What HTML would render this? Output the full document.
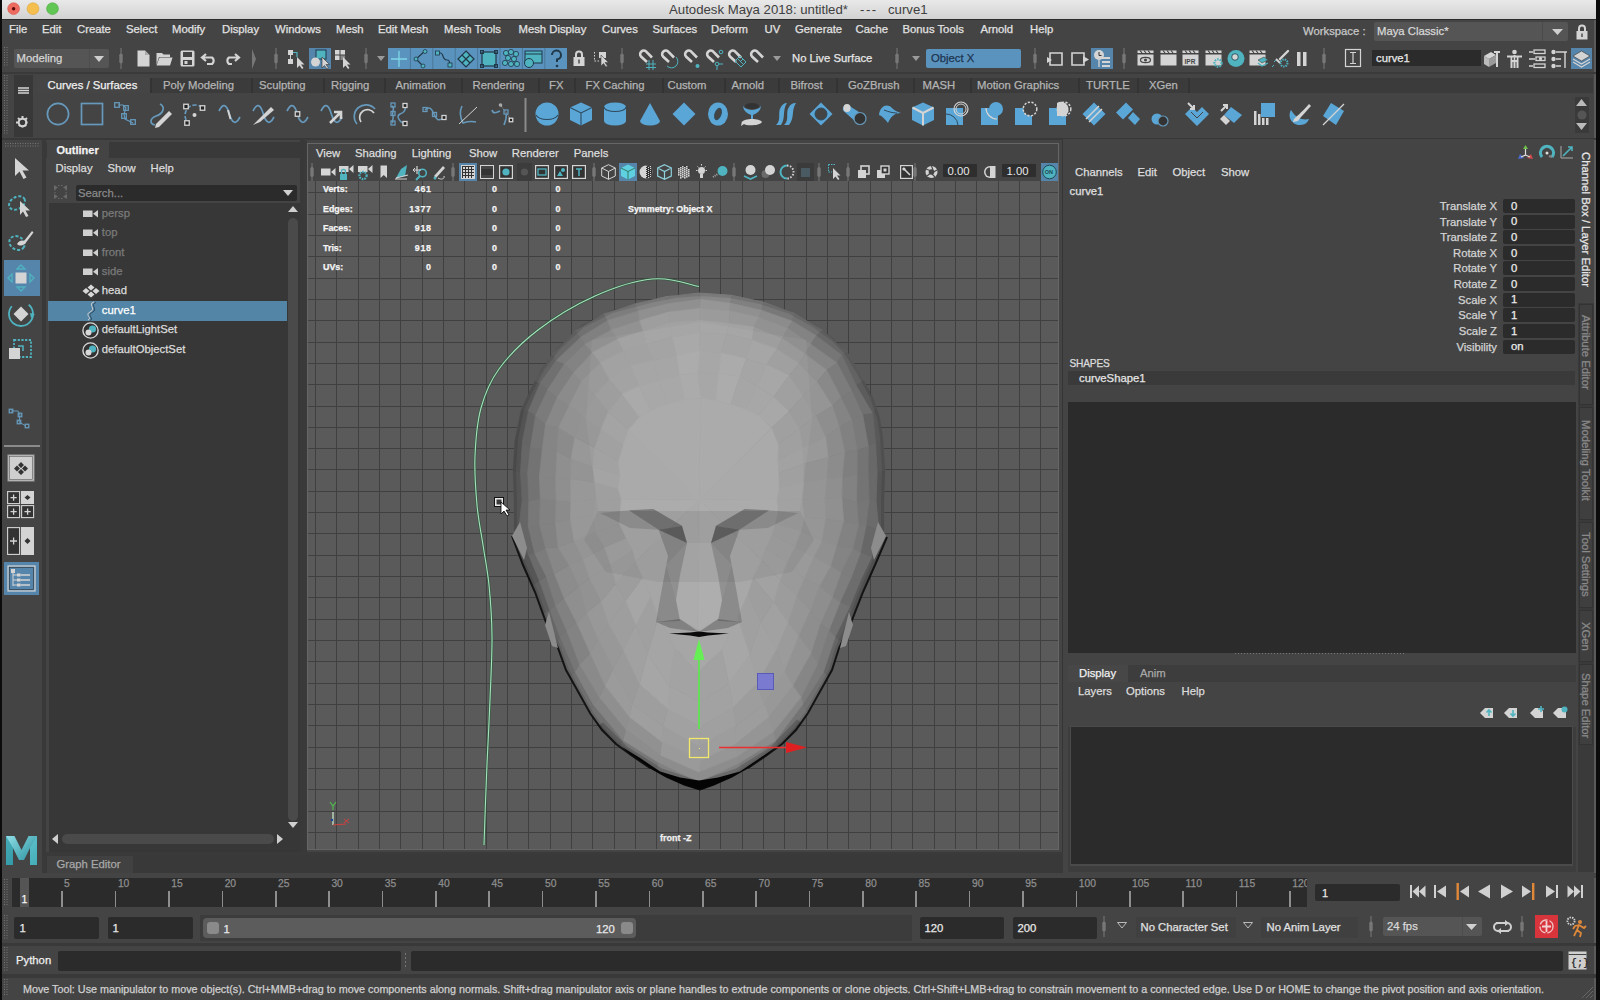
<!DOCTYPE html>
<html><head><meta charset="utf-8"><title>Maya</title>
<style>
html,body{margin:0;padding:0;background:#444;}
#r{position:relative;width:1600px;height:1000px;overflow:hidden;font-family:"Liberation Sans",sans-serif;}
#r>div,#r>svg{position:absolute;}
.t{white-space:pre;-webkit-text-stroke:0.25px currentColor;}
</style></head><body><div id="r">
<div style="left:0px;top:0px;width:1600px;height:1000px;background:#444444;"></div>
<div style="left:0px;top:0px;width:1596px;height:19px;background:linear-gradient(#e9e9e9,#d2d2d2);"></div>
<div style="left:0px;top:19px;width:1596px;height:1px;background:#2c2c2c;"></div>
<svg style="left:0px;top:0px;" width="64" height="19" viewBox="0 0 64 19"><circle cx="13.6" cy="8.7" r="5.9" fill="#ed6b5f" stroke="#d9564b" stroke-width=".6"/><circle cx="13.6" cy="8.7" r="1.7" fill="#5a0d08"/><circle cx="33" cy="8.7" r="5.9" fill="#f5bf4f" stroke="#dea23a" stroke-width=".6"/><circle cx="52.5" cy="8.7" r="5.9" fill="#62c654" stroke="#4ea840" stroke-width=".6"/></svg>
<div class="t" style="left:669px;top:2.63px;font-size:13.2px;line-height:13.2px;color:#404040;font-weight:400;-webkit-text-stroke:0">Autodesk Maya 2018: untitled*</div>
<div class="t" style="left:860px;top:2.63px;font-size:13.2px;line-height:13.2px;color:#404040;font-weight:400;-webkit-text-stroke:0;letter-spacing:1.5px">---</div>
<div class="t" style="left:888px;top:2.63px;font-size:13.2px;line-height:13.2px;color:#404040;font-weight:400;-webkit-text-stroke:0">curve1</div>
<div style="left:0px;top:0px;width:2px;height:1000px;background:#0c0c0c;"></div>
<div style="left:1596px;top:0px;width:4px;height:1000px;background:#0c0c0c;"></div>
<div style="left:1594px;top:20px;width:2px;height:980px;background:#5a5a5a;"></div>
<div class="t" style="left:9px;top:24.03px;font-size:11.3px;line-height:11.3px;color:#e2e2e2;font-weight:400;">File</div>
<div class="t" style="left:42px;top:24.03px;font-size:11.3px;line-height:11.3px;color:#e2e2e2;font-weight:400;">Edit</div>
<div class="t" style="left:77px;top:24.03px;font-size:11.3px;line-height:11.3px;color:#e2e2e2;font-weight:400;">Create</div>
<div class="t" style="left:126px;top:24.03px;font-size:11.3px;line-height:11.3px;color:#e2e2e2;font-weight:400;">Select</div>
<div class="t" style="left:172px;top:24.03px;font-size:11.3px;line-height:11.3px;color:#e2e2e2;font-weight:400;">Modify</div>
<div class="t" style="left:222px;top:24.03px;font-size:11.3px;line-height:11.3px;color:#e2e2e2;font-weight:400;">Display</div>
<div class="t" style="left:275px;top:24.03px;font-size:11.3px;line-height:11.3px;color:#e2e2e2;font-weight:400;">Windows</div>
<div class="t" style="left:336px;top:24.03px;font-size:11.3px;line-height:11.3px;color:#e2e2e2;font-weight:400;">Mesh</div>
<div class="t" style="left:378px;top:24.03px;font-size:11.3px;line-height:11.3px;color:#e2e2e2;font-weight:400;">Edit Mesh</div>
<div class="t" style="left:444px;top:24.03px;font-size:11.3px;line-height:11.3px;color:#e2e2e2;font-weight:400;">Mesh Tools</div>
<div class="t" style="left:518.5px;top:24.03px;font-size:11.3px;line-height:11.3px;color:#e2e2e2;font-weight:400;">Mesh Display</div>
<div class="t" style="left:602px;top:24.03px;font-size:11.3px;line-height:11.3px;color:#e2e2e2;font-weight:400;">Curves</div>
<div class="t" style="left:652.5px;top:24.03px;font-size:11.3px;line-height:11.3px;color:#e2e2e2;font-weight:400;">Surfaces</div>
<div class="t" style="left:711px;top:24.03px;font-size:11.3px;line-height:11.3px;color:#e2e2e2;font-weight:400;">Deform</div>
<div class="t" style="left:764.5px;top:24.03px;font-size:11.3px;line-height:11.3px;color:#e2e2e2;font-weight:400;">UV</div>
<div class="t" style="left:795px;top:24.03px;font-size:11.3px;line-height:11.3px;color:#e2e2e2;font-weight:400;">Generate</div>
<div class="t" style="left:855.5px;top:24.03px;font-size:11.3px;line-height:11.3px;color:#e2e2e2;font-weight:400;">Cache</div>
<div class="t" style="left:902.5px;top:24.03px;font-size:11.3px;line-height:11.3px;color:#e2e2e2;font-weight:400;">Bonus Tools</div>
<div class="t" style="left:980.5px;top:24.03px;font-size:11.3px;line-height:11.3px;color:#e2e2e2;font-weight:400;">Arnold</div>
<div class="t" style="left:1030px;top:24.03px;font-size:11.3px;line-height:11.3px;color:#e2e2e2;font-weight:400;">Help</div>
<div class="t" style="left:1303px;top:26.43px;font-size:11.3px;line-height:11.3px;color:#c8c8c8;font-weight:400;">Workspace :</div>
<div style="left:1374px;top:22px;width:194px;height:19px;background:#555555;border-radius:2px"></div>
<div style="left:1542px;top:22px;width:1px;height:19px;background:#4a4a4a;"></div>
<div class="t" style="left:1377px;top:26.43px;font-size:11.3px;line-height:11.3px;color:#d8d8d8;font-weight:400;">Maya Classic*</div>
<div style="left:14px;top:49px;width:95px;height:19px;background:#555555;border-radius:2px"></div>
<div style="left:89px;top:49px;width:1px;height:19px;background:#4d4d4d;"></div>
<div class="t" style="left:16.5px;top:53.43px;font-size:11.3px;line-height:11.3px;color:#d6d6d6;font-weight:400;">Modeling</div>
<div class="t" style="left:792px;top:53.43px;font-size:11.3px;line-height:11.3px;color:#e6e6e6;font-weight:400;">No Live Surface</div>
<div style="left:789px;top:49px;width:92px;height:19px;background:#3f3f3f;z-index:-1"></div>
<div style="left:926px;top:49px;width:95px;height:19px;background:#5b93bf;border-radius:2px"></div>
<div class="t" style="left:931px;top:53.43px;font-size:11.3px;line-height:11.3px;color:#1d3550;font-weight:400;">Object X</div>
<div style="left:1372px;top:50px;width:109px;height:16px;background:#2b2b2b;"></div>
<div class="t" style="left:1376px;top:52.93px;font-size:11.3px;line-height:11.3px;color:#e8e8e8;font-weight:400;">curve1</div>
<div style="left:2px;top:72px;width:1594px;height:2px;background:#3a3a3a;"></div>
<div style="left:37px;top:78px;width:1556px;height:15px;background:#3b3b3b;"></div>
<div style="left:37px;top:78px;width:113px;height:15px;background:#454545;"></div>
<div class="t" style="left:47.5px;top:80.43px;font-size:11.3px;line-height:11.3px;color:#f0f0f0;font-weight:400;">Curves / Surfaces</div>
<div class="t" style="left:163px;top:80.43px;font-size:11.3px;line-height:11.3px;color:#b4b4b4;font-weight:400;">Poly Modeling</div>
<div class="t" style="left:259px;top:80.43px;font-size:11.3px;line-height:11.3px;color:#b4b4b4;font-weight:400;">Sculpting</div>
<div class="t" style="left:331px;top:80.43px;font-size:11.3px;line-height:11.3px;color:#b4b4b4;font-weight:400;">Rigging</div>
<div class="t" style="left:395.5px;top:80.43px;font-size:11.3px;line-height:11.3px;color:#b4b4b4;font-weight:400;">Animation</div>
<div class="t" style="left:472.5px;top:80.43px;font-size:11.3px;line-height:11.3px;color:#b4b4b4;font-weight:400;">Rendering</div>
<div class="t" style="left:549px;top:80.43px;font-size:11.3px;line-height:11.3px;color:#b4b4b4;font-weight:400;">FX</div>
<div class="t" style="left:585.5px;top:80.43px;font-size:11.3px;line-height:11.3px;color:#b4b4b4;font-weight:400;">FX Caching</div>
<div class="t" style="left:667.5px;top:80.43px;font-size:11.3px;line-height:11.3px;color:#b4b4b4;font-weight:400;">Custom</div>
<div class="t" style="left:731.5px;top:80.43px;font-size:11.3px;line-height:11.3px;color:#b4b4b4;font-weight:400;">Arnold</div>
<div class="t" style="left:790.5px;top:80.43px;font-size:11.3px;line-height:11.3px;color:#b4b4b4;font-weight:400;">Bifrost</div>
<div class="t" style="left:848px;top:80.43px;font-size:11.3px;line-height:11.3px;color:#b4b4b4;font-weight:400;">GoZBrush</div>
<div class="t" style="left:922.5px;top:80.43px;font-size:11.3px;line-height:11.3px;color:#b4b4b4;font-weight:400;">MASH</div>
<div class="t" style="left:977px;top:80.43px;font-size:11.3px;line-height:11.3px;color:#b4b4b4;font-weight:400;">Motion Graphics</div>
<div class="t" style="left:1086px;top:80.43px;font-size:11.3px;line-height:11.3px;color:#b4b4b4;font-weight:400;">TURTLE</div>
<div class="t" style="left:1149px;top:80.43px;font-size:11.3px;line-height:11.3px;color:#b4b4b4;font-weight:400;">XGen</div>
<div style="left:150px;top:78px;width:2px;height:15px;background:#333333;"></div>
<div style="left:251px;top:78px;width:2px;height:15px;background:#333333;"></div>
<div style="left:323px;top:78px;width:2px;height:15px;background:#333333;"></div>
<div style="left:384px;top:78px;width:2px;height:15px;background:#333333;"></div>
<div style="left:461px;top:78px;width:2px;height:15px;background:#333333;"></div>
<div style="left:538px;top:78px;width:2px;height:15px;background:#333333;"></div>
<div style="left:574px;top:78px;width:2px;height:15px;background:#333333;"></div>
<div style="left:662px;top:78px;width:2px;height:15px;background:#333333;"></div>
<div style="left:724px;top:78px;width:2px;height:15px;background:#333333;"></div>
<div style="left:778px;top:78px;width:2px;height:15px;background:#333333;"></div>
<div style="left:836px;top:78px;width:2px;height:15px;background:#333333;"></div>
<div style="left:913px;top:78px;width:2px;height:15px;background:#333333;"></div>
<div style="left:970px;top:78px;width:2px;height:15px;background:#333333;"></div>
<div style="left:1078px;top:78px;width:2px;height:15px;background:#333333;"></div>
<div style="left:1137px;top:78px;width:2px;height:15px;background:#333333;"></div>
<div style="left:1188px;top:78px;width:2px;height:15px;background:#333333;"></div>
<div style="left:14px;top:75px;width:19px;height:62px;background:#383838;"></div>
<div style="left:1575px;top:97px;width:14px;height:36px;background:#3a3a3a;"></div>
<div style="left:2px;top:138px;width:1594px;height:2px;background:#383838;"></div>
<div style="left:42px;top:140px;width:4px;height:733px;background:#393939;"></div>
<div style="left:4px;top:260px;width:36px;height:36px;background:#5585ab;"></div>
<div style="left:4px;top:562px;width:35px;height:33px;background:#5585ab;"></div>
<div style="left:46px;top:142px;width:257px;height:16px;background:#393939;"></div>
<div style="left:47px;top:142px;width:62px;height:16px;background:#444444;"></div>
<div class="t" style="left:56.5px;top:145.19px;font-size:11px;line-height:11px;color:#f2f2f2;font-weight:700;">Outliner</div>
<div class="t" style="left:55.5px;top:162.93px;font-size:11.3px;line-height:11.3px;color:#dcdcdc;font-weight:400;">Display</div>
<div class="t" style="left:107.5px;top:162.93px;font-size:11.3px;line-height:11.3px;color:#dcdcdc;font-weight:400;">Show</div>
<div class="t" style="left:150.5px;top:162.93px;font-size:11.3px;line-height:11.3px;color:#dcdcdc;font-weight:400;">Help</div>
<div style="left:75.5px;top:185px;width:221px;height:16px;background:#2b2b2b;border-radius:2px"></div>
<div class="t" style="left:78px;top:187.93px;font-size:11.3px;line-height:11.3px;color:#8a8a8a;font-weight:400;">Search...</div>
<div style="left:49px;top:203px;width:251px;height:650px;background:#373737;"></div>
<div style="left:48px;top:301px;width:239px;height:20px;background:#5285a6;"></div>
<div class="t" style="left:101.8px;top:207.83px;font-size:11.3px;line-height:11.3px;color:#7a7a7a;font-weight:400;">persp</div>
<div class="t" style="left:101.8px;top:227.33px;font-size:11.3px;line-height:11.3px;color:#7a7a7a;font-weight:400;">top</div>
<div class="t" style="left:101.8px;top:246.73px;font-size:11.3px;line-height:11.3px;color:#7a7a7a;font-weight:400;">front</div>
<div class="t" style="left:101.8px;top:266.13px;font-size:11.3px;line-height:11.3px;color:#7a7a7a;font-weight:400;">side</div>
<div class="t" style="left:101.8px;top:285.43px;font-size:11.3px;line-height:11.3px;color:#dcdcdc;font-weight:400;">head</div>
<div class="t" style="left:101.8px;top:304.93px;font-size:11.3px;line-height:11.3px;color:#ffffff;font-weight:400;">curve1</div>
<div class="t" style="left:101.8px;top:324.43px;font-size:11.3px;line-height:11.3px;color:#dcdcdc;font-weight:400;">defaultLightSet</div>
<div class="t" style="left:101.8px;top:343.93px;font-size:11.3px;line-height:11.3px;color:#dcdcdc;font-weight:400;">defaultObjectSet</div>
<div style="left:288px;top:218px;width:10px;height:603px;background:#4a4a4a;border-radius:5px"></div>
<div style="left:62px;top:834px;width:212px;height:10px;background:#4a4a4a;border-radius:5px"></div>
<div style="left:300px;top:140px;width:4px;height:715px;background:#393939;"></div>
<div style="left:304px;top:139px;width:3px;height:716px;background:#3a3a3a;"></div>
<div style="left:307px;top:143px;width:752px;height:707px;background:#444444;box-shadow:0 0 0 1px #666 inset"></div>
<div class="t" style="left:316px;top:147.93px;font-size:11.3px;line-height:11.3px;color:#dedede;font-weight:400;">View</div>
<div class="t" style="left:355px;top:147.93px;font-size:11.3px;line-height:11.3px;color:#dedede;font-weight:400;">Shading</div>
<div class="t" style="left:411.75px;top:147.93px;font-size:11.3px;line-height:11.3px;color:#dedede;font-weight:400;">Lighting</div>
<div class="t" style="left:469px;top:147.93px;font-size:11.3px;line-height:11.3px;color:#dedede;font-weight:400;">Show</div>
<div class="t" style="left:511.75px;top:147.93px;font-size:11.3px;line-height:11.3px;color:#dedede;font-weight:400;">Renderer</div>
<div class="t" style="left:573.75px;top:147.93px;font-size:11.3px;line-height:11.3px;color:#dedede;font-weight:400;">Panels</div>
<svg style="left:308px;top:181px;" width="750" height="668" viewBox="0 0 750 668"><rect width="100%" height="100%" fill="#5a5a5a"/><rect x="7" y="0" width="1" height="668" fill="#404040"/><rect x="28" y="0" width="1" height="668" fill="#404040"/><rect x="50" y="0" width="1" height="668" fill="#404040"/><rect x="71" y="0" width="1" height="668" fill="#404040"/><rect x="92" y="0" width="1" height="668" fill="#404040"/><rect x="114" y="0" width="1" height="668" fill="#404040"/><rect x="135" y="0" width="1" height="668" fill="#404040"/><rect x="156" y="0" width="1" height="668" fill="#404040"/><rect x="178" y="0" width="1" height="668" fill="#404040"/><rect x="199" y="0" width="1" height="668" fill="#404040"/><rect x="220" y="0" width="1" height="668" fill="#404040"/><rect x="242" y="0" width="1" height="668" fill="#404040"/><rect x="263" y="0" width="1" height="668" fill="#404040"/><rect x="284" y="0" width="1" height="668" fill="#404040"/><rect x="306" y="0" width="1" height="668" fill="#404040"/><rect x="327" y="0" width="1" height="668" fill="#404040"/><rect x="348" y="0" width="1" height="668" fill="#404040"/><rect x="370" y="0" width="1" height="668" fill="#404040"/><rect x="391" y="0" width="1" height="668" fill="#404040"/><rect x="412" y="0" width="1" height="668" fill="#404040"/><rect x="434" y="0" width="1" height="668" fill="#404040"/><rect x="455" y="0" width="1" height="668" fill="#404040"/><rect x="476" y="0" width="1" height="668" fill="#404040"/><rect x="498" y="0" width="1" height="668" fill="#404040"/><rect x="519" y="0" width="1" height="668" fill="#404040"/><rect x="540" y="0" width="1" height="668" fill="#404040"/><rect x="562" y="0" width="1" height="668" fill="#404040"/><rect x="583" y="0" width="1" height="668" fill="#404040"/><rect x="604" y="0" width="1" height="668" fill="#404040"/><rect x="626" y="0" width="1" height="668" fill="#404040"/><rect x="647" y="0" width="1" height="668" fill="#404040"/><rect x="668" y="0" width="1" height="668" fill="#404040"/><rect x="690" y="0" width="1" height="668" fill="#404040"/><rect x="711" y="0" width="1" height="668" fill="#404040"/><rect x="732" y="0" width="1" height="668" fill="#404040"/><rect x="0" y="11" width="750" height="1" fill="#404040"/><rect x="0" y="33" width="750" height="1" fill="#404040"/><rect x="0" y="54" width="750" height="1" fill="#404040"/><rect x="0" y="75" width="750" height="1" fill="#404040"/><rect x="0" y="97" width="750" height="1" fill="#404040"/><rect x="0" y="118" width="750" height="1" fill="#404040"/><rect x="0" y="139" width="750" height="1" fill="#404040"/><rect x="0" y="161" width="750" height="1" fill="#404040"/><rect x="0" y="182" width="750" height="1" fill="#404040"/><rect x="0" y="203" width="750" height="1" fill="#404040"/><rect x="0" y="225" width="750" height="1" fill="#404040"/><rect x="0" y="246" width="750" height="1" fill="#404040"/><rect x="0" y="267" width="750" height="1" fill="#404040"/><rect x="0" y="288" width="750" height="1" fill="#404040"/><rect x="0" y="310" width="750" height="1" fill="#404040"/><rect x="0" y="331" width="750" height="1" fill="#404040"/><rect x="0" y="352" width="750" height="1" fill="#404040"/><rect x="0" y="374" width="750" height="1" fill="#404040"/><rect x="0" y="395" width="750" height="1" fill="#404040"/><rect x="0" y="416" width="750" height="1" fill="#404040"/><rect x="0" y="438" width="750" height="1" fill="#404040"/><rect x="0" y="459" width="750" height="1" fill="#404040"/><rect x="0" y="480" width="750" height="1" fill="#404040"/><rect x="0" y="502" width="750" height="1" fill="#404040"/><rect x="0" y="523" width="750" height="1" fill="#404040"/><rect x="0" y="544" width="750" height="1" fill="#404040"/><rect x="0" y="566" width="750" height="1" fill="#404040"/><rect x="0" y="587" width="750" height="1" fill="#404040"/><rect x="0" y="608" width="750" height="1" fill="#404040"/><rect x="0" y="630" width="750" height="1" fill="#404040"/><rect x="0" y="651" width="750" height="1" fill="#404040"/><rect x="391" y="0" width="1" height="668" fill="#383838"/></svg>
<svg style="left:308px;top:181px;" width="750" height="668" viewBox="308 181 750 668"><polygon points="699.0,293.1 731.4,295.3 730.7,303.3 700.5,299.2" fill="#888888" stroke="#888888" stroke-width="0.8" stroke-linejoin="round"/><polygon points="731.4,295.3 763.3,302.1 762.0,310.4 730.7,303.3" fill="#808080" stroke="#808080" stroke-width="0.8" stroke-linejoin="round"/><polygon points="763.3,302.1 794.1,313.3 792.4,321.2 762.0,310.4" fill="#787878" stroke="#787878" stroke-width="0.8" stroke-linejoin="round"/><polygon points="794.1,313.3 822.3,330.3 816.3,335.7 792.4,321.2" fill="#737373" stroke="#737373" stroke-width="0.8" stroke-linejoin="round"/><polygon points="822.3,330.3 847.0,352.0 841.9,355.3 816.3,335.7" fill="#686868" stroke="#686868" stroke-width="0.8" stroke-linejoin="round"/><polygon points="847.0,352.0 863.9,380.2 856.2,385.7 841.9,355.3" fill="#636363" stroke="#636363" stroke-width="0.8" stroke-linejoin="round"/><polygon points="863.9,380.2 877.1,409.3 872.7,413.6 856.2,385.7" fill="#5c5c5c" stroke="#5c5c5c" stroke-width="0.8" stroke-linejoin="round"/><polygon points="877.1,409.3 883.2,440.2 875.6,443.2 872.7,413.6" fill="#595959" stroke="#595959" stroke-width="0.8" stroke-linejoin="round"/><polygon points="883.2,440.2 885.0,470.5 877.1,472.6 875.6,443.2" fill="#585858" stroke="#585858" stroke-width="0.8" stroke-linejoin="round"/><polygon points="885.0,470.5 884.0,500.0 876.1,501.1 877.1,472.6" fill="#555555" stroke="#555555" stroke-width="0.8" stroke-linejoin="round"/><polygon points="884.0,500.0 884.0,529.3 879.0,530.1 876.1,501.1" fill="#565656" stroke="#565656" stroke-width="0.8" stroke-linejoin="round"/><polygon points="884.0,529.3 876.6,557.7 871.5,557.2 879.0,530.1" fill="#555555" stroke="#555555" stroke-width="0.8" stroke-linejoin="round"/><polygon points="876.6,557.7 865.2,584.7 859.8,581.7 871.5,557.2" fill="#595959" stroke="#595959" stroke-width="0.8" stroke-linejoin="round"/><polygon points="865.2,584.7 853.9,612.5 849.7,606.7 859.8,581.7" fill="#5b5b5b" stroke="#5b5b5b" stroke-width="0.8" stroke-linejoin="round"/><polygon points="853.9,612.5 840.9,641.9 835.1,637.1 849.7,606.7" fill="#5e5e5e" stroke="#5e5e5e" stroke-width="0.8" stroke-linejoin="round"/><polygon points="840.9,641.9 827.9,677.4 823.3,672.3 835.1,637.1" fill="#666666" stroke="#666666" stroke-width="0.8" stroke-linejoin="round"/><polygon points="827.9,677.4 807.7,713.4 802.7,704.2 823.3,672.3" fill="#717171" stroke="#717171" stroke-width="0.8" stroke-linejoin="round"/><polygon points="807.7,713.4 779.0,746.2 775.2,741.0 802.7,704.2" fill="#747474" stroke="#747474" stroke-width="0.8" stroke-linejoin="round"/><polygon points="779.0,746.2 742.0,771.4 739.3,762.9 775.2,741.0" fill="#7c7c7c" stroke="#7c7c7c" stroke-width="0.8" stroke-linejoin="round"/><polygon points="742.0,771.4 699.0,788.8 698.5,782.0 739.3,762.9" fill="#828282" stroke="#828282" stroke-width="0.8" stroke-linejoin="round"/><polygon points="699.0,788.8 656.0,771.4 658.3,762.3 698.5,782.0" fill="#818181" stroke="#818181" stroke-width="0.8" stroke-linejoin="round"/><polygon points="656.0,771.4 619.0,746.2 623.0,740.2 658.3,762.3" fill="#777777" stroke="#777777" stroke-width="0.8" stroke-linejoin="round"/><polygon points="619.0,746.2 590.3,713.4 593.4,704.7 623.0,740.2" fill="#717171" stroke="#717171" stroke-width="0.8" stroke-linejoin="round"/><polygon points="590.3,713.4 570.1,677.4 575.0,671.5 593.4,704.7" fill="#6f6f6f" stroke="#6f6f6f" stroke-width="0.8" stroke-linejoin="round"/><polygon points="570.1,677.4 555.7,643.3 560.1,636.7 575.0,671.5" fill="#6a6a6a" stroke="#6a6a6a" stroke-width="0.8" stroke-linejoin="round"/><polygon points="555.7,643.3 542.8,613.5 549.8,609.9 560.1,636.7" fill="#666666" stroke="#666666" stroke-width="0.8" stroke-linejoin="round"/><polygon points="542.8,613.5 531.9,585.1 539.4,580.8 549.8,609.9" fill="#5d5d5d" stroke="#5d5d5d" stroke-width="0.8" stroke-linejoin="round"/><polygon points="531.9,585.1 520.7,557.9 528.3,554.1 539.4,580.8" fill="#565656" stroke="#565656" stroke-width="0.8" stroke-linejoin="round"/><polygon points="520.7,557.9 514.0,529.3 519.0,526.9 528.3,554.1" fill="#595959" stroke="#595959" stroke-width="0.8" stroke-linejoin="round"/><polygon points="514.0,529.3 514.0,500.0 522.1,500.2 519.0,526.9" fill="#555555" stroke="#555555" stroke-width="0.8" stroke-linejoin="round"/><polygon points="514.0,500.0 513.0,470.5 520.5,472.0 522.1,500.2" fill="#555555" stroke="#555555" stroke-width="0.8" stroke-linejoin="round"/><polygon points="513.0,470.5 515.0,440.2 522.4,441.7 520.5,472.0" fill="#525252" stroke="#525252" stroke-width="0.8" stroke-linejoin="round"/><polygon points="515.0,440.2 521.3,409.4 528.5,410.7 522.4,441.7" fill="#535353" stroke="#535353" stroke-width="0.8" stroke-linejoin="round"/><polygon points="521.3,409.4 535.0,380.8 540.2,383.2 528.5,410.7" fill="#575757" stroke="#575757" stroke-width="0.8" stroke-linejoin="round"/><polygon points="535.0,380.8 552.8,353.8 556.3,360.4 540.2,383.2" fill="#626262" stroke="#626262" stroke-width="0.8" stroke-linejoin="round"/><polygon points="552.8,353.8 575.9,330.6 580.5,337.4 556.3,360.4" fill="#696969" stroke="#696969" stroke-width="0.8" stroke-linejoin="round"/><polygon points="575.9,330.6 604.2,313.9 607.8,320.4 580.5,337.4" fill="#717171" stroke="#717171" stroke-width="0.8" stroke-linejoin="round"/><polygon points="604.2,313.9 635.3,303.9 638.6,311.0 607.8,320.4" fill="#7d7d7d" stroke="#7d7d7d" stroke-width="0.8" stroke-linejoin="round"/><polygon points="635.3,303.9 666.8,296.6 667.9,303.8 638.6,311.0" fill="#848484" stroke="#848484" stroke-width="0.8" stroke-linejoin="round"/><polygon points="666.8,296.6 699.0,293.1 700.5,299.2 667.9,303.8" fill="#838383" stroke="#838383" stroke-width="0.8" stroke-linejoin="round"/><polygon points="700.5,299.2 730.7,303.3 729.6,310.7 699.3,308.5" fill="#969696" stroke="#969696" stroke-width="0.8" stroke-linejoin="round"/><polygon points="730.7,303.3 762.0,310.4 759.0,317.3 729.6,310.7" fill="#909090" stroke="#909090" stroke-width="0.8" stroke-linejoin="round"/><polygon points="762.0,310.4 792.4,321.2 787.8,328.3 759.0,317.3" fill="#8c8c8c" stroke="#8c8c8c" stroke-width="0.8" stroke-linejoin="round"/><polygon points="792.4,321.2 816.3,335.7 811.1,344.4 787.8,328.3" fill="#838383" stroke="#838383" stroke-width="0.8" stroke-linejoin="round"/><polygon points="816.3,335.7 841.9,355.3 837.0,362.9 811.1,344.4" fill="#767676" stroke="#767676" stroke-width="0.8" stroke-linejoin="round"/><polygon points="841.9,355.3 856.2,385.7 851.8,391.1 837.0,362.9" fill="#6f6f6f" stroke="#6f6f6f" stroke-width="0.8" stroke-linejoin="round"/><polygon points="856.2,385.7 872.7,413.6 862.7,415.1 851.8,391.1" fill="#707070" stroke="#707070" stroke-width="0.8" stroke-linejoin="round"/><polygon points="872.7,413.6 875.6,443.2 868.4,446.6 862.7,415.1" fill="#656565" stroke="#656565" stroke-width="0.8" stroke-linejoin="round"/><polygon points="875.6,443.2 877.1,472.6 868.1,472.0 868.4,446.6" fill="#686868" stroke="#686868" stroke-width="0.8" stroke-linejoin="round"/><polygon points="877.1,472.6 876.1,501.1 869.1,500.1 868.1,472.0" fill="#696969" stroke="#696969" stroke-width="0.8" stroke-linejoin="round"/><polygon points="876.1,501.1 879.0,530.1 866.1,525.5 869.1,500.1" fill="#6b6b6b" stroke="#6b6b6b" stroke-width="0.8" stroke-linejoin="round"/><polygon points="879.0,530.1 871.5,557.2 860.3,553.1 866.1,525.5" fill="#676767" stroke="#676767" stroke-width="0.8" stroke-linejoin="round"/><polygon points="871.5,557.2 859.8,581.7 851.2,577.5 860.3,553.1" fill="#6d6d6d" stroke="#6d6d6d" stroke-width="0.8" stroke-linejoin="round"/><polygon points="859.8,581.7 849.7,606.7 839.9,602.4 851.2,577.5" fill="#6d6d6d" stroke="#6d6d6d" stroke-width="0.8" stroke-linejoin="round"/><polygon points="849.7,606.7 835.1,637.1 828.9,630.2 839.9,602.4" fill="#737373" stroke="#737373" stroke-width="0.8" stroke-linejoin="round"/><polygon points="835.1,637.1 823.3,672.3 817.6,663.8 828.9,630.2" fill="#7b7b7b" stroke="#7b7b7b" stroke-width="0.8" stroke-linejoin="round"/><polygon points="823.3,672.3 802.7,704.2 801.0,697.3 817.6,663.8" fill="#7c7c7c" stroke="#7c7c7c" stroke-width="0.8" stroke-linejoin="round"/><polygon points="802.7,704.2 775.2,741.0 773.6,731.6 801.0,697.3" fill="#868686" stroke="#868686" stroke-width="0.8" stroke-linejoin="round"/><polygon points="775.2,741.0 739.3,762.9 737.8,756.3 773.6,731.6" fill="#8c8c8c" stroke="#8c8c8c" stroke-width="0.8" stroke-linejoin="round"/><polygon points="739.3,762.9 698.5,782.0 699.0,772.2 737.8,756.3" fill="#8d8d8d" stroke="#8d8d8d" stroke-width="0.8" stroke-linejoin="round"/><polygon points="698.5,782.0 658.3,762.3 660.1,755.0 699.0,772.2" fill="#8d8d8d" stroke="#8d8d8d" stroke-width="0.8" stroke-linejoin="round"/><polygon points="658.3,762.3 623.0,740.2 625.6,729.2 660.1,755.0" fill="#8d8d8d" stroke="#8d8d8d" stroke-width="0.8" stroke-linejoin="round"/><polygon points="623.0,740.2 593.4,704.7 599.2,696.9 625.6,729.2" fill="#838383" stroke="#838383" stroke-width="0.8" stroke-linejoin="round"/><polygon points="593.4,704.7 575.0,671.5 579.5,664.1 599.2,696.9" fill="#818181" stroke="#818181" stroke-width="0.8" stroke-linejoin="round"/><polygon points="575.0,671.5 560.1,636.7 566.4,629.8 579.5,664.1" fill="#767676" stroke="#767676" stroke-width="0.8" stroke-linejoin="round"/><polygon points="560.1,636.7 549.8,609.9 555.4,604.9 566.4,629.8" fill="#747474" stroke="#747474" stroke-width="0.8" stroke-linejoin="round"/><polygon points="549.8,609.9 539.4,580.8 546.1,576.0 555.4,604.9" fill="#707070" stroke="#707070" stroke-width="0.8" stroke-linejoin="round"/><polygon points="539.4,580.8 528.3,554.1 534.7,553.2 546.1,576.0" fill="#6b6b6b" stroke="#6b6b6b" stroke-width="0.8" stroke-linejoin="round"/><polygon points="528.3,554.1 519.0,526.9 528.2,526.0 534.7,553.2" fill="#666666" stroke="#666666" stroke-width="0.8" stroke-linejoin="round"/><polygon points="519.0,526.9 522.1,500.2 528.8,500.8 528.2,526.0" fill="#666666" stroke="#666666" stroke-width="0.8" stroke-linejoin="round"/><polygon points="522.1,500.2 520.5,472.0 527.7,472.6 528.8,500.8" fill="#656565" stroke="#656565" stroke-width="0.8" stroke-linejoin="round"/><polygon points="520.5,472.0 522.4,441.7 530.5,446.9 527.7,472.6" fill="#666666" stroke="#666666" stroke-width="0.8" stroke-linejoin="round"/><polygon points="522.4,441.7 528.5,410.7 535.6,415.5 530.5,446.9" fill="#656565" stroke="#656565" stroke-width="0.8" stroke-linejoin="round"/><polygon points="528.5,410.7 540.2,383.2 547.7,389.8 535.6,415.5" fill="#6d6d6d" stroke="#6d6d6d" stroke-width="0.8" stroke-linejoin="round"/><polygon points="540.2,383.2 556.3,360.4 564.5,363.7 547.7,389.8" fill="#707070" stroke="#707070" stroke-width="0.8" stroke-linejoin="round"/><polygon points="556.3,360.4 580.5,337.4 585.1,344.2 564.5,363.7" fill="#7c7c7c" stroke="#7c7c7c" stroke-width="0.8" stroke-linejoin="round"/><polygon points="580.5,337.4 607.8,320.4 611.1,330.0 585.1,344.2" fill="#808080" stroke="#808080" stroke-width="0.8" stroke-linejoin="round"/><polygon points="607.8,320.4 638.6,311.0 639.7,320.6 611.1,330.0" fill="#898989" stroke="#898989" stroke-width="0.8" stroke-linejoin="round"/><polygon points="638.6,311.0 667.9,303.8 668.6,312.1 639.7,320.6" fill="#909090" stroke="#909090" stroke-width="0.8" stroke-linejoin="round"/><polygon points="667.9,303.8 700.5,299.2 699.3,308.5 668.6,312.1" fill="#909090" stroke="#909090" stroke-width="0.8" stroke-linejoin="round"/><polygon points="699.3,308.5 729.6,310.7 728.9,323.5 699.8,320.3" fill="#9b9b9b" stroke="#9b9b9b" stroke-width="0.8" stroke-linejoin="round"/><polygon points="729.6,310.7 759.0,317.3 754.1,327.1 728.9,323.5" fill="#989898" stroke="#989898" stroke-width="0.8" stroke-linejoin="round"/><polygon points="759.0,317.3 787.8,328.3 782.4,338.6 754.1,327.1" fill="#929292" stroke="#929292" stroke-width="0.8" stroke-linejoin="round"/><polygon points="787.8,328.3 811.1,344.4 804.9,353.7 782.4,338.6" fill="#8b8b8b" stroke="#8b8b8b" stroke-width="0.8" stroke-linejoin="round"/><polygon points="811.1,344.4 837.0,362.9 826.8,370.2 804.9,353.7" fill="#858585" stroke="#858585" stroke-width="0.8" stroke-linejoin="round"/><polygon points="837.0,362.9 851.8,391.1 840.9,397.4 826.8,370.2" fill="#7c7c7c" stroke="#7c7c7c" stroke-width="0.8" stroke-linejoin="round"/><polygon points="851.8,391.1 862.7,415.1 851.8,420.1 840.9,397.4" fill="#7a7a7a" stroke="#7a7a7a" stroke-width="0.8" stroke-linejoin="round"/><polygon points="862.7,415.1 868.4,446.6 857.1,450.4 851.8,420.1" fill="#7a7a7a" stroke="#7a7a7a" stroke-width="0.8" stroke-linejoin="round"/><polygon points="868.4,446.6 868.1,472.0 857.1,474.9 857.1,450.4" fill="#747474" stroke="#747474" stroke-width="0.8" stroke-linejoin="round"/><polygon points="868.1,472.0 869.1,500.1 856.6,501.8 857.1,474.9" fill="#747474" stroke="#747474" stroke-width="0.8" stroke-linejoin="round"/><polygon points="869.1,500.1 866.1,525.5 858.5,525.0 856.6,501.8" fill="#767676" stroke="#767676" stroke-width="0.8" stroke-linejoin="round"/><polygon points="866.1,525.5 860.3,553.1 852.8,548.3 858.5,525.0" fill="#787878" stroke="#787878" stroke-width="0.8" stroke-linejoin="round"/><polygon points="860.3,553.1 851.2,577.5 840.8,572.7 852.8,548.3" fill="#7d7d7d" stroke="#7d7d7d" stroke-width="0.8" stroke-linejoin="round"/><polygon points="851.2,577.5 839.9,602.4 832.4,597.0 840.8,572.7" fill="#7e7e7e" stroke="#7e7e7e" stroke-width="0.8" stroke-linejoin="round"/><polygon points="839.9,602.4 828.9,630.2 820.3,623.4 832.4,597.0" fill="#858585" stroke="#858585" stroke-width="0.8" stroke-linejoin="round"/><polygon points="828.9,630.2 817.6,663.8 811.0,652.9 820.3,623.4" fill="#828282" stroke="#828282" stroke-width="0.8" stroke-linejoin="round"/><polygon points="817.6,663.8 801.0,697.3 792.8,685.7 811.0,652.9" fill="#868686" stroke="#868686" stroke-width="0.8" stroke-linejoin="round"/><polygon points="801.0,697.3 773.6,731.6 768.9,716.7 792.8,685.7" fill="#939393" stroke="#939393" stroke-width="0.8" stroke-linejoin="round"/><polygon points="773.6,731.6 737.8,756.3 735.7,743.7 768.9,716.7" fill="#959595" stroke="#959595" stroke-width="0.8" stroke-linejoin="round"/><polygon points="737.8,756.3 699.0,772.2 700.9,760.1 735.7,743.7" fill="#969696" stroke="#969696" stroke-width="0.8" stroke-linejoin="round"/><polygon points="699.0,772.2 660.1,755.0 661.5,741.6 700.9,760.1" fill="#9a9a9a" stroke="#9a9a9a" stroke-width="0.8" stroke-linejoin="round"/><polygon points="660.1,755.0 625.6,729.2 629.3,716.7 661.5,741.6" fill="#919191" stroke="#919191" stroke-width="0.8" stroke-linejoin="round"/><polygon points="625.6,729.2 599.2,696.9 605.1,685.6 629.3,716.7" fill="#8f8f8f" stroke="#8f8f8f" stroke-width="0.8" stroke-linejoin="round"/><polygon points="599.2,696.9 579.5,664.1 590.2,653.0 605.1,685.6" fill="#8a8a8a" stroke="#8a8a8a" stroke-width="0.8" stroke-linejoin="round"/><polygon points="579.5,664.1 566.4,629.8 576.7,622.6 590.2,653.0" fill="#838383" stroke="#838383" stroke-width="0.8" stroke-linejoin="round"/><polygon points="566.4,629.8 555.4,604.9 564.2,598.2 576.7,622.6" fill="#818181" stroke="#818181" stroke-width="0.8" stroke-linejoin="round"/><polygon points="555.4,604.9 546.1,576.0 554.4,573.8 564.2,598.2" fill="#7c7c7c" stroke="#7c7c7c" stroke-width="0.8" stroke-linejoin="round"/><polygon points="546.1,576.0 534.7,553.2 545.6,547.8 554.4,573.8" fill="#7c7c7c" stroke="#7c7c7c" stroke-width="0.8" stroke-linejoin="round"/><polygon points="534.7,553.2 528.2,526.0 539.6,525.2 545.6,547.8" fill="#777777" stroke="#777777" stroke-width="0.8" stroke-linejoin="round"/><polygon points="528.2,526.0 528.8,500.8 540.3,498.5 539.6,525.2" fill="#787878" stroke="#787878" stroke-width="0.8" stroke-linejoin="round"/><polygon points="528.8,500.8 527.7,472.6 539.5,476.0 540.3,498.5" fill="#737373" stroke="#737373" stroke-width="0.8" stroke-linejoin="round"/><polygon points="527.7,472.6 530.5,446.9 542.4,448.7 539.5,476.0" fill="#737373" stroke="#737373" stroke-width="0.8" stroke-linejoin="round"/><polygon points="530.5,446.9 535.6,415.5 545.6,424.1 542.4,448.7" fill="#767676" stroke="#767676" stroke-width="0.8" stroke-linejoin="round"/><polygon points="535.6,415.5 547.7,389.8 557.1,397.5 545.6,424.1" fill="#7b7b7b" stroke="#7b7b7b" stroke-width="0.8" stroke-linejoin="round"/><polygon points="547.7,389.8 564.5,363.7 573.4,373.1 557.1,397.5" fill="#7f7f7f" stroke="#7f7f7f" stroke-width="0.8" stroke-linejoin="round"/><polygon points="564.5,363.7 585.1,344.2 592.4,352.4 573.4,373.1" fill="#838383" stroke="#838383" stroke-width="0.8" stroke-linejoin="round"/><polygon points="585.1,344.2 611.1,330.0 617.8,339.0 592.4,352.4" fill="#8c8c8c" stroke="#8c8c8c" stroke-width="0.8" stroke-linejoin="round"/><polygon points="611.1,330.0 639.7,320.6 643.4,330.9 617.8,339.0" fill="#929292" stroke="#929292" stroke-width="0.8" stroke-linejoin="round"/><polygon points="639.7,320.6 668.6,312.1 670.0,322.7 643.4,330.9" fill="#9e9e9e" stroke="#9e9e9e" stroke-width="0.8" stroke-linejoin="round"/><polygon points="668.6,312.1 699.3,308.5 699.8,320.3 670.0,322.7" fill="#9d9d9d" stroke="#9d9d9d" stroke-width="0.8" stroke-linejoin="round"/><polygon points="699.8,320.3 728.9,323.5 726.7,333.9 699.7,332.7" fill="#a3a3a3" stroke="#a3a3a3" stroke-width="0.8" stroke-linejoin="round"/><polygon points="728.9,323.5 754.1,327.1 752.4,340.2 726.7,333.9" fill="#a2a2a2" stroke="#a2a2a2" stroke-width="0.8" stroke-linejoin="round"/><polygon points="754.1,327.1 782.4,338.6 777.1,349.1 752.4,340.2" fill="#999999" stroke="#999999" stroke-width="0.8" stroke-linejoin="round"/><polygon points="782.4,338.6 804.9,353.7 799.3,363.6 777.1,349.1" fill="#949494" stroke="#949494" stroke-width="0.8" stroke-linejoin="round"/><polygon points="804.9,353.7 826.8,370.2 817.0,381.9 799.3,363.6" fill="#919191" stroke="#919191" stroke-width="0.8" stroke-linejoin="round"/><polygon points="826.8,370.2 840.9,397.4 832.4,406.1 817.0,381.9" fill="#898989" stroke="#898989" stroke-width="0.8" stroke-linejoin="round"/><polygon points="840.9,397.4 851.8,420.1 839.3,427.1 832.4,406.1" fill="#848484" stroke="#848484" stroke-width="0.8" stroke-linejoin="round"/><polygon points="851.8,420.1 857.1,450.4 844.6,451.7 839.3,427.1" fill="#818181" stroke="#818181" stroke-width="0.8" stroke-linejoin="round"/><polygon points="857.1,450.4 857.1,474.9 842.1,477.7 844.6,451.7" fill="#7f7f7f" stroke="#7f7f7f" stroke-width="0.8" stroke-linejoin="round"/><polygon points="857.1,474.9 856.6,501.8 841.8,498.0 842.1,477.7" fill="#828282" stroke="#828282" stroke-width="0.8" stroke-linejoin="round"/><polygon points="856.6,501.8 858.5,525.0 843.6,521.2 841.8,498.0" fill="#808080" stroke="#808080" stroke-width="0.8" stroke-linejoin="round"/><polygon points="858.5,525.0 852.8,548.3 836.5,546.0 843.6,521.2" fill="#828282" stroke="#828282" stroke-width="0.8" stroke-linejoin="round"/><polygon points="852.8,548.3 840.8,572.7 830.5,565.9 836.5,546.0" fill="#848484" stroke="#848484" stroke-width="0.8" stroke-linejoin="round"/><polygon points="840.8,572.7 832.4,597.0 819.5,585.9 830.5,565.9" fill="#8a8a8a" stroke="#8a8a8a" stroke-width="0.8" stroke-linejoin="round"/><polygon points="832.4,597.0 820.3,623.4 810.2,610.0 819.5,585.9" fill="#8e8e8e" stroke="#8e8e8e" stroke-width="0.8" stroke-linejoin="round"/><polygon points="820.3,623.4 811.0,652.9 798.7,635.4 810.2,610.0" fill="#8e8e8e" stroke="#8e8e8e" stroke-width="0.8" stroke-linejoin="round"/><polygon points="811.0,652.9 792.8,685.7 784.5,670.9 798.7,635.4" fill="#939393" stroke="#939393" stroke-width="0.8" stroke-linejoin="round"/><polygon points="792.8,685.7 768.9,716.7 764.3,704.1 784.5,670.9" fill="#989898" stroke="#989898" stroke-width="0.8" stroke-linejoin="round"/><polygon points="768.9,716.7 735.7,743.7 735.6,725.7 764.3,704.1" fill="#9d9d9d" stroke="#9d9d9d" stroke-width="0.8" stroke-linejoin="round"/><polygon points="735.7,743.7 700.9,760.1 698.8,746.6 735.6,725.7" fill="#9d9d9d" stroke="#9d9d9d" stroke-width="0.8" stroke-linejoin="round"/><polygon points="700.9,760.1 661.5,741.6 662.9,726.0 698.8,746.6" fill="#9d9d9d" stroke="#9d9d9d" stroke-width="0.8" stroke-linejoin="round"/><polygon points="661.5,741.6 629.3,716.7 632.3,703.9 662.9,726.0" fill="#9f9f9f" stroke="#9f9f9f" stroke-width="0.8" stroke-linejoin="round"/><polygon points="629.3,716.7 605.1,685.6 613.0,669.1 632.3,703.9" fill="#9b9b9b" stroke="#9b9b9b" stroke-width="0.8" stroke-linejoin="round"/><polygon points="605.1,685.6 590.2,653.0 598.1,638.5 613.0,669.1" fill="#949494" stroke="#949494" stroke-width="0.8" stroke-linejoin="round"/><polygon points="590.2,653.0 576.7,622.6 586.5,612.8 598.1,638.5" fill="#929292" stroke="#929292" stroke-width="0.8" stroke-linejoin="round"/><polygon points="576.7,622.6 564.2,598.2 578.9,586.5 586.5,612.8" fill="#8f8f8f" stroke="#8f8f8f" stroke-width="0.8" stroke-linejoin="round"/><polygon points="564.2,598.2 554.4,573.8 569.0,564.8 578.9,586.5" fill="#8c8c8c" stroke="#8c8c8c" stroke-width="0.8" stroke-linejoin="round"/><polygon points="554.4,573.8 545.6,547.8 558.1,547.1 569.0,564.8" fill="#878787" stroke="#878787" stroke-width="0.8" stroke-linejoin="round"/><polygon points="545.6,547.8 539.6,525.2 555.5,522.8 558.1,547.1" fill="#828282" stroke="#828282" stroke-width="0.8" stroke-linejoin="round"/><polygon points="539.6,525.2 540.3,498.5 556.2,500.1 555.5,522.8" fill="#828282" stroke="#828282" stroke-width="0.8" stroke-linejoin="round"/><polygon points="540.3,498.5 539.5,476.0 555.8,478.6 556.2,500.1" fill="#858585" stroke="#858585" stroke-width="0.8" stroke-linejoin="round"/><polygon points="539.5,476.0 542.4,448.7 557.1,451.5 555.8,478.6" fill="#858585" stroke="#858585" stroke-width="0.8" stroke-linejoin="round"/><polygon points="542.4,448.7 545.6,424.1 558.6,427.5 557.1,451.5" fill="#858585" stroke="#858585" stroke-width="0.8" stroke-linejoin="round"/><polygon points="545.6,424.1 557.1,397.5 569.2,405.6 558.6,427.5" fill="#888888" stroke="#888888" stroke-width="0.8" stroke-linejoin="round"/><polygon points="557.1,397.5 573.4,373.1 581.5,381.6 569.2,405.6" fill="#8b8b8b" stroke="#8b8b8b" stroke-width="0.8" stroke-linejoin="round"/><polygon points="573.4,373.1 592.4,352.4 600.2,362.4 581.5,381.6" fill="#8f8f8f" stroke="#8f8f8f" stroke-width="0.8" stroke-linejoin="round"/><polygon points="592.4,352.4 617.8,339.0 623.8,350.4 600.2,362.4" fill="#989898" stroke="#989898" stroke-width="0.8" stroke-linejoin="round"/><polygon points="617.8,339.0 643.4,330.9 646.3,344.0 623.8,350.4" fill="#9f9f9f" stroke="#9f9f9f" stroke-width="0.8" stroke-linejoin="round"/><polygon points="643.4,330.9 670.0,322.7 672.2,337.2 646.3,344.0" fill="#a2a2a2" stroke="#a2a2a2" stroke-width="0.8" stroke-linejoin="round"/><polygon points="670.0,322.7 699.8,320.3 699.7,332.7 672.2,337.2" fill="#a2a2a2" stroke="#a2a2a2" stroke-width="0.8" stroke-linejoin="round"/><polygon points="699.7,332.7 726.7,333.9 721.2,352.9 699.9,350.8" fill="#a2a2a2" stroke="#a2a2a2" stroke-width="0.8" stroke-linejoin="round"/><polygon points="726.7,333.9 752.4,340.2 746.3,358.7 721.2,352.9" fill="#a0a0a0" stroke="#a0a0a0" stroke-width="0.8" stroke-linejoin="round"/><polygon points="752.4,340.2 777.1,349.1 766.6,364.7 746.3,358.7" fill="#a2a2a2" stroke="#a2a2a2" stroke-width="0.8" stroke-linejoin="round"/><polygon points="777.1,349.1 799.3,363.6 789.1,375.6 766.6,364.7" fill="#9b9b9b" stroke="#9b9b9b" stroke-width="0.8" stroke-linejoin="round"/><polygon points="799.3,363.6 817.0,381.9 803.0,395.7 789.1,375.6" fill="#969696" stroke="#969696" stroke-width="0.8" stroke-linejoin="round"/><polygon points="817.0,381.9 832.4,406.1 816.0,416.0 803.0,395.7" fill="#959595" stroke="#959595" stroke-width="0.8" stroke-linejoin="round"/><polygon points="832.4,406.1 839.3,427.1 825.5,437.0 816.0,416.0" fill="#8e8e8e" stroke="#8e8e8e" stroke-width="0.8" stroke-linejoin="round"/><polygon points="839.3,427.1 844.6,451.7 828.1,457.5 825.5,437.0" fill="#8c8c8c" stroke="#8c8c8c" stroke-width="0.8" stroke-linejoin="round"/><polygon points="844.6,451.7 842.1,477.7 826.5,478.7 828.1,457.5" fill="#8c8c8c" stroke="#8c8c8c" stroke-width="0.8" stroke-linejoin="round"/><polygon points="842.1,477.7 841.8,498.0 824.7,499.1 826.5,478.7" fill="#8f8f8f" stroke="#8f8f8f" stroke-width="0.8" stroke-linejoin="round"/><polygon points="841.8,498.0 843.6,521.2 825.4,518.9 824.7,499.1" fill="#909090" stroke="#909090" stroke-width="0.8" stroke-linejoin="round"/><polygon points="843.6,521.2 836.5,546.0 821.6,541.3 825.4,518.9" fill="#8e8e8e" stroke="#8e8e8e" stroke-width="0.8" stroke-linejoin="round"/><polygon points="836.5,546.0 830.5,565.9 813.5,557.0 821.6,541.3" fill="#909090" stroke="#909090" stroke-width="0.8" stroke-linejoin="round"/><polygon points="830.5,565.9 819.5,585.9 804.0,578.4 813.5,557.0" fill="#949494" stroke="#949494" stroke-width="0.8" stroke-linejoin="round"/><polygon points="819.5,585.9 810.2,610.0 796.5,596.5 804.0,578.4" fill="#939393" stroke="#939393" stroke-width="0.8" stroke-linejoin="round"/><polygon points="810.2,610.0 798.7,635.4 788.1,622.6 796.5,596.5" fill="#969696" stroke="#969696" stroke-width="0.8" stroke-linejoin="round"/><polygon points="798.7,635.4 784.5,670.9 776.4,649.5 788.1,622.6" fill="#9b9b9b" stroke="#9b9b9b" stroke-width="0.8" stroke-linejoin="round"/><polygon points="784.5,670.9 764.3,704.1 757.3,683.5 776.4,649.5" fill="#9a9a9a" stroke="#9a9a9a" stroke-width="0.8" stroke-linejoin="round"/><polygon points="764.3,704.1 735.6,725.7 733.0,707.0 757.3,683.5" fill="#9d9d9d" stroke="#9d9d9d" stroke-width="0.8" stroke-linejoin="round"/><polygon points="735.6,725.7 698.8,746.6 700.9,726.7 733.0,707.0" fill="#a0a0a0" stroke="#a0a0a0" stroke-width="0.8" stroke-linejoin="round"/><polygon points="698.8,746.6 662.9,726.0 667.9,709.1 700.9,726.7" fill="#a1a1a1" stroke="#a1a1a1" stroke-width="0.8" stroke-linejoin="round"/><polygon points="662.9,726.0 632.3,703.9 639.5,684.0 667.9,709.1" fill="#9e9e9e" stroke="#9e9e9e" stroke-width="0.8" stroke-linejoin="round"/><polygon points="632.3,703.9 613.0,669.1 623.2,649.6 639.5,684.0" fill="#9a9a9a" stroke="#9a9a9a" stroke-width="0.8" stroke-linejoin="round"/><polygon points="613.0,669.1 598.1,638.5 608.8,624.2 623.2,649.6" fill="#989898" stroke="#989898" stroke-width="0.8" stroke-linejoin="round"/><polygon points="598.1,638.5 586.5,612.8 601.2,600.9 608.8,624.2" fill="#989898" stroke="#989898" stroke-width="0.8" stroke-linejoin="round"/><polygon points="586.5,612.8 578.9,586.5 589.6,578.2 601.2,600.9" fill="#929292" stroke="#929292" stroke-width="0.8" stroke-linejoin="round"/><polygon points="578.9,586.5 569.0,564.8 582.8,559.0 589.6,578.2" fill="#919191" stroke="#919191" stroke-width="0.8" stroke-linejoin="round"/><polygon points="569.0,564.8 558.1,547.1 574.3,541.0 582.8,559.0" fill="#909090" stroke="#909090" stroke-width="0.8" stroke-linejoin="round"/><polygon points="558.1,547.1 555.5,522.8 570.4,519.2 574.3,541.0" fill="#8d8d8d" stroke="#8d8d8d" stroke-width="0.8" stroke-linejoin="round"/><polygon points="555.5,522.8 556.2,500.1 570.9,501.5 570.4,519.2" fill="#8b8b8b" stroke="#8b8b8b" stroke-width="0.8" stroke-linejoin="round"/><polygon points="556.2,500.1 555.8,478.6 570.7,478.8 570.9,501.5" fill="#8f8f8f" stroke="#8f8f8f" stroke-width="0.8" stroke-linejoin="round"/><polygon points="555.8,478.6 557.1,451.5 571.2,458.4 570.7,478.8" fill="#8f8f8f" stroke="#8f8f8f" stroke-width="0.8" stroke-linejoin="round"/><polygon points="557.1,451.5 558.6,427.5 574.9,437.3 571.2,458.4" fill="#8b8b8b" stroke="#8b8b8b" stroke-width="0.8" stroke-linejoin="round"/><polygon points="558.6,427.5 569.2,405.6 581.8,416.0 574.9,437.3" fill="#929292" stroke="#929292" stroke-width="0.8" stroke-linejoin="round"/><polygon points="569.2,405.6 581.5,381.6 594.9,395.1 581.8,416.0" fill="#949494" stroke="#949494" stroke-width="0.8" stroke-linejoin="round"/><polygon points="581.5,381.6 600.2,362.4 609.2,379.0 594.9,395.1" fill="#959595" stroke="#959595" stroke-width="0.8" stroke-linejoin="round"/><polygon points="600.2,362.4 623.8,350.4 630.3,365.3 609.2,379.0" fill="#9d9d9d" stroke="#9d9d9d" stroke-width="0.8" stroke-linejoin="round"/><polygon points="623.8,350.4 646.3,344.0 653.0,360.5 630.3,365.3" fill="#9e9e9e" stroke="#9e9e9e" stroke-width="0.8" stroke-linejoin="round"/><polygon points="646.3,344.0 672.2,337.2 676.8,355.7 653.0,360.5" fill="#a0a0a0" stroke="#a0a0a0" stroke-width="0.8" stroke-linejoin="round"/><polygon points="672.2,337.2 699.7,332.7 699.9,350.8 676.8,355.7" fill="#a5a5a5" stroke="#a5a5a5" stroke-width="0.8" stroke-linejoin="round"/><polygon points="699.9,350.8 721.2,352.9 718.6,373.7 697.4,372.5" fill="#a3a3a3" stroke="#a3a3a3" stroke-width="0.8" stroke-linejoin="round"/><polygon points="721.2,352.9 746.3,358.7 740.0,376.5 718.6,373.7" fill="#a7a7a7" stroke="#a7a7a7" stroke-width="0.8" stroke-linejoin="round"/><polygon points="746.3,358.7 766.6,364.7 756.5,386.2 740.0,376.5" fill="#a1a1a1" stroke="#a1a1a1" stroke-width="0.8" stroke-linejoin="round"/><polygon points="766.6,364.7 789.1,375.6 773.7,396.9 756.5,386.2" fill="#a3a3a3" stroke="#a3a3a3" stroke-width="0.8" stroke-linejoin="round"/><polygon points="789.1,375.6 803.0,395.7 788.8,411.8 773.7,396.9" fill="#9b9b9b" stroke="#9b9b9b" stroke-width="0.8" stroke-linejoin="round"/><polygon points="803.0,395.7 816.0,416.0 799.5,428.2 788.8,411.8" fill="#979797" stroke="#979797" stroke-width="0.8" stroke-linejoin="round"/><polygon points="816.0,416.0 825.5,437.0 802.6,447.8 799.5,428.2" fill="#969696" stroke="#969696" stroke-width="0.8" stroke-linejoin="round"/><polygon points="825.5,437.0 828.1,457.5 803.5,463.9 802.6,447.8" fill="#999999" stroke="#999999" stroke-width="0.8" stroke-linejoin="round"/><polygon points="828.1,457.5 826.5,478.7 803.7,482.9 803.5,463.9" fill="#939393" stroke="#939393" stroke-width="0.8" stroke-linejoin="round"/><polygon points="826.5,478.7 824.7,499.1 802.2,499.8 803.7,482.9" fill="#959595" stroke="#959595" stroke-width="0.8" stroke-linejoin="round"/><polygon points="824.7,499.1 825.4,518.9 804.1,517.4 802.2,499.8" fill="#959595" stroke="#959595" stroke-width="0.8" stroke-linejoin="round"/><polygon points="825.4,518.9 821.6,541.3 801.0,531.1 804.1,517.4" fill="#969696" stroke="#969696" stroke-width="0.8" stroke-linejoin="round"/><polygon points="821.6,541.3 813.5,557.0 795.0,546.5 801.0,531.1" fill="#989898" stroke="#989898" stroke-width="0.8" stroke-linejoin="round"/><polygon points="813.5,557.0 804.0,578.4 787.0,562.2 795.0,546.5" fill="#9a9a9a" stroke="#9a9a9a" stroke-width="0.8" stroke-linejoin="round"/><polygon points="804.0,578.4 796.5,596.5 780.0,579.8 787.0,562.2" fill="#9a9a9a" stroke="#9a9a9a" stroke-width="0.8" stroke-linejoin="round"/><polygon points="796.5,596.5 788.1,622.6 773.5,602.1 780.0,579.8" fill="#9c9c9c" stroke="#9c9c9c" stroke-width="0.8" stroke-linejoin="round"/><polygon points="788.1,622.6 776.4,649.5 760.9,621.9 773.5,602.1" fill="#a1a1a1" stroke="#a1a1a1" stroke-width="0.8" stroke-linejoin="round"/><polygon points="776.4,649.5 757.3,683.5 749.5,654.7 760.9,621.9" fill="#a2a2a2" stroke="#a2a2a2" stroke-width="0.8" stroke-linejoin="round"/><polygon points="757.3,683.5 733.0,707.0 728.8,683.4 749.5,654.7" fill="#a4a4a4" stroke="#a4a4a4" stroke-width="0.8" stroke-linejoin="round"/><polygon points="733.0,707.0 700.9,726.7 700.5,702.1 728.8,683.4" fill="#a2a2a2" stroke="#a2a2a2" stroke-width="0.8" stroke-linejoin="round"/><polygon points="700.9,726.7 667.9,709.1 669.0,686.1 700.5,702.1" fill="#a4a4a4" stroke="#a4a4a4" stroke-width="0.8" stroke-linejoin="round"/><polygon points="667.9,709.1 639.5,684.0 647.6,653.2 669.0,686.1" fill="#a6a6a6" stroke="#a6a6a6" stroke-width="0.8" stroke-linejoin="round"/><polygon points="639.5,684.0 623.2,649.6 635.9,624.7 647.6,653.2" fill="#a1a1a1" stroke="#a1a1a1" stroke-width="0.8" stroke-linejoin="round"/><polygon points="623.2,649.6 608.8,624.2 625.7,600.4 635.9,624.7" fill="#9e9e9e" stroke="#9e9e9e" stroke-width="0.8" stroke-linejoin="round"/><polygon points="608.8,624.2 601.2,600.9 615.8,583.6 625.7,600.4" fill="#9e9e9e" stroke="#9e9e9e" stroke-width="0.8" stroke-linejoin="round"/><polygon points="601.2,600.9 589.6,578.2 610.7,564.7 615.8,583.6" fill="#989898" stroke="#989898" stroke-width="0.8" stroke-linejoin="round"/><polygon points="589.6,578.2 582.8,559.0 604.5,547.2 610.7,564.7" fill="#989898" stroke="#989898" stroke-width="0.8" stroke-linejoin="round"/><polygon points="582.8,559.0 574.3,541.0 595.6,532.1 604.5,547.2" fill="#959595" stroke="#959595" stroke-width="0.8" stroke-linejoin="round"/><polygon points="574.3,541.0 570.4,519.2 592.6,515.6 595.6,532.1" fill="#989898" stroke="#989898" stroke-width="0.8" stroke-linejoin="round"/><polygon points="570.4,519.2 570.9,501.5 594.8,499.5 592.6,515.6" fill="#989898" stroke="#989898" stroke-width="0.8" stroke-linejoin="round"/><polygon points="570.9,501.5 570.7,478.8 594.8,482.2 594.8,499.5" fill="#989898" stroke="#989898" stroke-width="0.8" stroke-linejoin="round"/><polygon points="570.7,478.8 571.2,458.4 593.2,466.9 594.8,482.2" fill="#949494" stroke="#949494" stroke-width="0.8" stroke-linejoin="round"/><polygon points="571.2,458.4 574.9,437.3 594.7,447.8 593.2,466.9" fill="#989898" stroke="#989898" stroke-width="0.8" stroke-linejoin="round"/><polygon points="574.9,437.3 581.8,416.0 601.2,429.5 594.7,447.8" fill="#939393" stroke="#939393" stroke-width="0.8" stroke-linejoin="round"/><polygon points="581.8,416.0 594.9,395.1 608.2,412.0 601.2,429.5" fill="#959595" stroke="#959595" stroke-width="0.8" stroke-linejoin="round"/><polygon points="594.9,395.1 609.2,379.0 622.2,393.9 608.2,412.0" fill="#999999" stroke="#999999" stroke-width="0.8" stroke-linejoin="round"/><polygon points="609.2,379.0 630.3,365.3 639.1,386.0 622.2,393.9" fill="#9f9f9f" stroke="#9f9f9f" stroke-width="0.8" stroke-linejoin="round"/><polygon points="630.3,365.3 653.0,360.5 658.7,380.8 639.1,386.0" fill="#a2a2a2" stroke="#a2a2a2" stroke-width="0.8" stroke-linejoin="round"/><polygon points="653.0,360.5 676.8,355.7 679.7,374.9 658.7,380.8" fill="#a2a2a2" stroke="#a2a2a2" stroke-width="0.8" stroke-linejoin="round"/><polygon points="676.8,355.7 699.9,350.8 697.4,372.5 679.7,374.9" fill="#a8a8a8" stroke="#a8a8a8" stroke-width="0.8" stroke-linejoin="round"/><polygon points="697.4,372.5 718.6,373.7 716.0,400.2 700.9,397.9" fill="#a3a3a3" stroke="#a3a3a3" stroke-width="0.8" stroke-linejoin="round"/><polygon points="718.6,373.7 740.0,376.5 730.7,404.4 716.0,400.2" fill="#a8a8a8" stroke="#a8a8a8" stroke-width="0.8" stroke-linejoin="round"/><polygon points="740.0,376.5 756.5,386.2 745.8,409.2 730.7,404.4" fill="#a2a2a2" stroke="#a2a2a2" stroke-width="0.8" stroke-linejoin="round"/><polygon points="756.5,386.2 773.7,396.9 758.5,415.5 745.8,409.2" fill="#a3a3a3" stroke="#a3a3a3" stroke-width="0.8" stroke-linejoin="round"/><polygon points="773.7,396.9 788.8,411.8 771.4,428.0 758.5,415.5" fill="#a4a4a4" stroke="#a4a4a4" stroke-width="0.8" stroke-linejoin="round"/><polygon points="788.8,411.8 799.5,428.2 778.1,444.3 771.4,428.0" fill="#9b9b9b" stroke="#9b9b9b" stroke-width="0.8" stroke-linejoin="round"/><polygon points="799.5,428.2 802.6,447.8 777.8,460.6 778.1,444.3" fill="#9b9b9b" stroke="#9b9b9b" stroke-width="0.8" stroke-linejoin="round"/><polygon points="802.6,447.8 803.5,463.9 778.3,473.3 777.8,460.6" fill="#9d9d9d" stroke="#9d9d9d" stroke-width="0.8" stroke-linejoin="round"/><polygon points="803.5,463.9 803.7,482.9 778.9,487.4 778.3,473.3" fill="#9b9b9b" stroke="#9b9b9b" stroke-width="0.8" stroke-linejoin="round"/><polygon points="803.7,482.9 802.2,499.8 776.8,499.4 778.9,487.4" fill="#9e9e9e" stroke="#9e9e9e" stroke-width="0.8" stroke-linejoin="round"/><polygon points="802.2,499.8 804.1,517.4 777.9,511.6 776.8,499.4" fill="#9d9d9d" stroke="#9d9d9d" stroke-width="0.8" stroke-linejoin="round"/><polygon points="804.1,517.4 801.0,531.1 774.8,524.0 777.9,511.6" fill="#9e9e9e" stroke="#9e9e9e" stroke-width="0.8" stroke-linejoin="round"/><polygon points="801.0,531.1 795.0,546.5 772.0,534.6 774.8,524.0" fill="#a1a1a1" stroke="#a1a1a1" stroke-width="0.8" stroke-linejoin="round"/><polygon points="795.0,546.5 787.0,562.2 765.9,547.8 772.0,534.6" fill="#a2a2a2" stroke="#a2a2a2" stroke-width="0.8" stroke-linejoin="round"/><polygon points="787.0,562.2 780.0,579.8 761.6,559.9 765.9,547.8" fill="#a3a3a3" stroke="#a3a3a3" stroke-width="0.8" stroke-linejoin="round"/><polygon points="780.0,579.8 773.5,602.1 752.8,577.7 761.6,559.9" fill="#a2a2a2" stroke="#a2a2a2" stroke-width="0.8" stroke-linejoin="round"/><polygon points="773.5,602.1 760.9,621.9 747.4,594.1 752.8,577.7" fill="#9e9e9e" stroke="#9e9e9e" stroke-width="0.8" stroke-linejoin="round"/><polygon points="760.9,621.9 749.5,654.7 737.4,617.2 747.4,594.1" fill="#a0a0a0" stroke="#a0a0a0" stroke-width="0.8" stroke-linejoin="round"/><polygon points="749.5,654.7 728.8,683.4 721.6,649.5 737.4,617.2" fill="#a7a7a7" stroke="#a7a7a7" stroke-width="0.8" stroke-linejoin="round"/><polygon points="728.8,683.4 700.5,702.1 697.4,672.4 721.6,649.5" fill="#a2a2a2" stroke="#a2a2a2" stroke-width="0.8" stroke-linejoin="round"/><polygon points="700.5,702.1 669.0,686.1 675.1,648.1 697.4,672.4" fill="#a3a3a3" stroke="#a3a3a3" stroke-width="0.8" stroke-linejoin="round"/><polygon points="669.0,686.1 647.6,653.2 658.4,617.2 675.1,648.1" fill="#a5a5a5" stroke="#a5a5a5" stroke-width="0.8" stroke-linejoin="round"/><polygon points="647.6,653.2 635.9,624.7 650.7,596.2 658.4,617.2" fill="#a0a0a0" stroke="#a0a0a0" stroke-width="0.8" stroke-linejoin="round"/><polygon points="635.9,624.7 625.7,600.4 642.6,577.5 650.7,596.2" fill="#a6a6a6" stroke="#a6a6a6" stroke-width="0.8" stroke-linejoin="round"/><polygon points="625.7,600.4 615.8,583.6 635.8,561.6 642.6,577.5" fill="#9d9d9d" stroke="#9d9d9d" stroke-width="0.8" stroke-linejoin="round"/><polygon points="615.8,583.6 610.7,564.7 632.7,550.3 635.8,561.6" fill="#a0a0a0" stroke="#a0a0a0" stroke-width="0.8" stroke-linejoin="round"/><polygon points="610.7,564.7 604.5,547.2 626.1,537.9 632.7,550.3" fill="#a3a3a3" stroke="#a3a3a3" stroke-width="0.8" stroke-linejoin="round"/><polygon points="604.5,547.2 595.6,532.1 619.6,524.1 626.1,537.9" fill="#9a9a9a" stroke="#9a9a9a" stroke-width="0.8" stroke-linejoin="round"/><polygon points="595.6,532.1 592.6,515.6 620.0,513.6 619.6,524.1" fill="#9a9a9a" stroke="#9a9a9a" stroke-width="0.8" stroke-linejoin="round"/><polygon points="592.6,515.6 594.8,499.5 621.4,499.3 620.0,513.6" fill="#9a9a9a" stroke="#9a9a9a" stroke-width="0.8" stroke-linejoin="round"/><polygon points="594.8,499.5 594.8,482.2 618.1,488.7 621.4,499.3" fill="#9a9a9a" stroke="#9a9a9a" stroke-width="0.8" stroke-linejoin="round"/><polygon points="594.8,482.2 593.2,466.9 620.1,474.9 618.1,488.7" fill="#a0a0a0" stroke="#a0a0a0" stroke-width="0.8" stroke-linejoin="round"/><polygon points="593.2,466.9 594.7,447.8 618.5,461.5 620.1,474.9" fill="#9e9e9e" stroke="#9e9e9e" stroke-width="0.8" stroke-linejoin="round"/><polygon points="594.7,447.8 601.2,429.5 623.4,445.0 618.5,461.5" fill="#9c9c9c" stroke="#9c9c9c" stroke-width="0.8" stroke-linejoin="round"/><polygon points="601.2,429.5 608.2,412.0 628.4,429.5 623.4,445.0" fill="#a0a0a0" stroke="#a0a0a0" stroke-width="0.8" stroke-linejoin="round"/><polygon points="608.2,412.0 622.2,393.9 639.5,417.2 628.4,429.5" fill="#9d9d9d" stroke="#9d9d9d" stroke-width="0.8" stroke-linejoin="round"/><polygon points="622.2,393.9 639.1,386.0 650.7,410.5 639.5,417.2" fill="#a6a6a6" stroke="#a6a6a6" stroke-width="0.8" stroke-linejoin="round"/><polygon points="639.1,386.0 658.7,380.8 667.9,403.9 650.7,410.5" fill="#a4a4a4" stroke="#a4a4a4" stroke-width="0.8" stroke-linejoin="round"/><polygon points="658.7,380.8 679.7,374.9 684.7,399.4 667.9,403.9" fill="#a4a4a4" stroke="#a4a4a4" stroke-width="0.8" stroke-linejoin="round"/><polygon points="679.7,374.9 697.4,372.5 700.9,397.9 684.7,399.4" fill="#a7a7a7" stroke="#a7a7a7" stroke-width="0.8" stroke-linejoin="round"/><polygon points="699.0,500.0 700.9,397.9 716.0,400.2 730.7,404.4 745.8,409.2 758.5,415.5 771.4,428.0" fill="#a7a7a7" stroke="#a7a7a7" stroke-width="0.8" stroke-linejoin="round"/><polygon points="699.0,500.0 771.4,428.0 778.1,444.3 777.8,460.6 778.3,473.3 778.9,487.4 776.8,499.4" fill="#a6a6a6" stroke="#a6a6a6" stroke-width="0.8" stroke-linejoin="round"/><polygon points="699.0,500.0 776.8,499.4 777.9,511.6 774.8,524.0 772.0,534.6 765.9,547.8 761.6,559.9" fill="#a7a7a7" stroke="#a7a7a7" stroke-width="0.8" stroke-linejoin="round"/><polygon points="699.0,500.0 761.6,559.9 752.8,577.7 747.4,594.1 737.4,617.2 721.6,649.5 697.4,672.4" fill="#a8a8a8" stroke="#a8a8a8" stroke-width="0.8" stroke-linejoin="round"/><polygon points="699.0,500.0 697.4,672.4 675.1,648.1 658.4,617.2 650.7,596.2 642.6,577.5 635.8,561.6" fill="#a6a6a6" stroke="#a6a6a6" stroke-width="0.8" stroke-linejoin="round"/><polygon points="699.0,500.0 635.8,561.6 632.7,550.3 626.1,537.9 619.6,524.1 620.0,513.6 621.4,499.3" fill="#a8a8a8" stroke="#a8a8a8" stroke-width="0.8" stroke-linejoin="round"/><polygon points="699.0,500.0 621.4,499.3 618.1,488.7 620.1,474.9 618.5,461.5 623.4,445.0 628.4,429.5" fill="#a6a6a6" stroke="#a6a6a6" stroke-width="0.8" stroke-linejoin="round"/><polygon points="699.0,500.0 628.4,429.5 639.5,417.2 650.7,410.5 667.9,403.9 684.7,399.4 700.9,397.9" fill="#a7a7a7" stroke="#a7a7a7" stroke-width="0.8" stroke-linejoin="round"/><polygon points="598.0,511.0 800.0,511.0 814.0,540.0 792.0,572.0 740.0,582.0 658.0,582.0 606.0,572.0 584.0,540.0" fill="#000" opacity="0.05"/><polygon points="628.7,510.2 653.4,508.9 682.0,525.8 687.0,543.0 658.6,529.7" fill="#000" opacity="0.3"/><polygon points="769.3,510.2 744.6,508.9 716.0,525.8 711.0,543.0 739.4,529.7" fill="#000" opacity="0.3"/><polygon points="600.0,513.0 628.7,510.2 658.6,529.7 630.0,528.0" fill="#000" opacity="0.12"/><polygon points="798.0,513.0 769.3,510.2 739.4,529.7 768.0,528.0" fill="#000" opacity="0.12"/><polygon points="682.0,526.0 687.0,543.0 680.0,575.0 676.0,600.0 680.0,621.0 656.0,622.0 662.0,588.0 668.0,556.0 658.6,529.7" fill="#000" opacity="0.17"/><polygon points="716.0,526.0 711.0,543.0 718.0,575.0 722.0,600.0 718.0,621.0 742.0,622.0 736.0,588.0 730.0,556.0 739.4,529.7" fill="#000" opacity="0.17"/><polygon points="687.0,543.0 676.0,600.0 666.0,565.0" fill="#fff" opacity="0.06"/><polygon points="711.0,543.0 722.0,600.0 732.0,565.0" fill="#fff" opacity="0.06"/><polygon points="656.0,622.0 680.0,619.0 699.0,632.0 670.0,628.0" fill="#000" opacity="0.22"/><polygon points="742.0,622.0 718.0,619.0 699.0,632.0 728.0,628.0" fill="#000" opacity="0.22"/><polygon points="687.0,543.0 711.0,543.0 722.0,600.0 718.0,619.0 699.0,630.0 680.0,619.0 676.0,600.0" fill="#fff" opacity="0.07"/><polygon points="592.0,340.0 700.0,322.0 806.0,340.0 812.0,420.0 800.0,511.0 598.0,511.0 586.0,420.0" fill="#fff" opacity="0.05"/><polygon points="669,633.5 690,632.5 699,631.5 708,632.5 729,633.5 708,635.5 699,637 690,635.5" fill="#0a0a0a"/><defs><clipPath id="hc"><polygon points="700.0,293.0 730.0,295.0 760.0,301.0 790.0,311.0 815.0,325.0 833.0,338.0 847.0,352.0 860.0,373.0 873.0,397.0 880.0,418.0 883.0,437.0 885.0,470.0 884.0,500.0 884.0,520.0 884.0,537.0 874.0,565.0 862.0,592.0 849.0,625.0 838.0,648.0 832.0,670.0 818.0,695.0 808.0,713.0 796.0,730.0 782.0,744.0 767.0,755.0 748.0,768.0 732.0,777.0 714.0,785.0 700.0,789.0 684.0,785.0 666.0,777.0 650.0,768.0 631.0,755.0 616.0,744.0 602.0,730.0 590.0,713.0 580.0,695.0 566.0,670.0 558.0,648.0 547.0,625.0 535.0,592.0 523.0,565.0 514.0,537.0 514.0,520.0 514.0,500.0 513.0,470.0 515.0,440.0 521.0,410.0 530.0,390.0 542.0,368.0 558.0,347.0 582.0,325.0 612.0,310.0 650.0,300.0 675.0,295.0"/></clipPath></defs><polygon points="700.0,293.0 730.0,295.0 760.0,301.0 790.0,311.0 815.0,325.0 833.0,338.0 847.0,352.0 860.0,373.0 873.0,397.0 880.0,418.0 883.0,437.0 885.0,470.0 884.0,500.0 884.0,520.0 884.0,537.0 874.0,565.0 862.0,592.0 849.0,625.0 838.0,648.0 832.0,670.0 818.0,695.0 808.0,713.0 796.0,730.0 782.0,744.0 767.0,755.0 748.0,768.0 732.0,777.0 714.0,785.0 700.0,789.0 684.0,785.0 666.0,777.0 650.0,768.0 631.0,755.0 616.0,744.0 602.0,730.0 590.0,713.0 580.0,695.0 566.0,670.0 558.0,648.0 547.0,625.0 535.0,592.0 523.0,565.0 514.0,537.0 514.0,520.0 514.0,500.0 513.0,470.0 515.0,440.0 521.0,410.0 530.0,390.0 542.0,368.0 558.0,347.0 582.0,325.0 612.0,310.0 650.0,300.0 675.0,295.0" fill="none" stroke="#000" stroke-opacity=".10" stroke-width="6" clip-path="url(#hc)"/><polygon points="622,747 640,758 660,771.5 680,777.5 699,780.5 718,777.5 740,771.5 760,758 776,747 767,755.5 748,768.5 732,777.5 714,785.5 700,790.5 684,785.5 666,777.5 650,768.5 631,755.5" fill="#060606"/><polyline points="600,725 625,750 660,772 699,785 738,772 773,750 800,722" fill="none" stroke="#000" stroke-opacity=".18" stroke-width="8" clip-path="url(#hc)"/><polyline points="512,536 523,565 535,592 547,625 558,648 566,670 580,695 590,713 602,730 616,744 631,755 650,768" fill="none" stroke="#0c0c0c" stroke-width="2" opacity=".9"/><polyline points="887,537 875,565 863,592 850,625 839,648 832,670 818,695 808,713 796,730 782,744 767,755 748,768" fill="none" stroke="#0c0c0c" stroke-width="2" opacity=".9"/><polygon points="512.0,536.0 520.0,522.0 527.0,548.0 524.0,560.0" fill="#8c8c8c"/><polygon points="886.0,536.0 878.0,522.0 871.0,548.0 874.0,560.0" fill="#8c8c8c"/><polygon points="549.0,612.0 558.0,648.0 552.0,646.0 545.0,625.0" fill="#8c8c8c"/><polygon points="849.0,612.0 840.0,648.0 846.0,646.0 853.0,625.0" fill="#8c8c8c"/><path d="M699,286.5 C684.3,283.0 669.3,277.4 652,279 C634.7,280.6 614.0,287.5 595,296 C576.0,304.5 554.0,317.8 538,330 C522.0,342.2 508.5,356.0 499,369 C489.5,382.0 485.0,393.5 481,408 C477.0,422.5 475.7,439.8 475,456 C474.3,472.2 475.7,490.2 477,505 C478.3,519.8 481.0,531.7 483,545 C485.0,558.3 487.5,569.8 489,585 C490.5,600.2 491.8,616.8 492,636 C492.2,655.2 490.8,678.7 490,700 C489.2,721.3 488.0,739.8 487,764 C486.0,788.2 484.7,822.3 484,845" fill="none" stroke="#2e5a3e" stroke-opacity=".8" stroke-width="2.6"/><path d="M699,286.5 C684.3,283.0 669.3,277.4 652,279 C634.7,280.6 614.0,287.5 595,296 C576.0,304.5 554.0,317.8 538,330 C522.0,342.2 508.5,356.0 499,369 C489.5,382.0 485.0,393.5 481,408 C477.0,422.5 475.7,439.8 475,456 C474.3,472.2 475.7,490.2 477,505 C478.3,519.8 481.0,531.7 483,545 C485.0,558.3 487.5,569.8 489,585 C490.5,600.2 491.8,616.8 492,636 C492.2,655.2 490.8,678.7 490,700 C489.2,721.3 488.0,739.8 487,764 C486.0,788.2 484.7,822.3 484,845" fill="none" stroke="#a6e2bc" stroke-width="1.1"/><line x1="699" y1="729" x2="699" y2="655" stroke="#55ee44" stroke-width="1.6"/><polygon points="699,639 693.5,660 704.5,660" fill="#66ee55"/><line x1="719" y1="747.5" x2="790" y2="747.5" stroke="#e83030" stroke-width="1.4"/><polygon points="807,747.5 786,742 786,753" fill="#e02020"/><rect x="689.5" y="738.5" width="19" height="19" fill="none" stroke="#f2e86a" stroke-width="1.3"/><rect x="699" y="748" width="1" height="1" fill="#f2e86a"/><rect x="757.5" y="673.5" width="16" height="16" fill="#7a7ad0" stroke="#5a5ab8" stroke-width="1"/><rect x="494.5" y="497.5" width="9" height="9" fill="#e8e8e8" stroke="#111" stroke-width="1"/><rect x="496.5" y="499.5" width="5" height="5" fill="#3a3a3a"/><path d="M501,502 L501,514 L504,511 L507,516 L509,515 L506,510 L510,510 Z" fill="#fff" stroke="#000" stroke-width=".8"/><line x1="333" y1="812" x2="333" y2="825" stroke="#c8e8c8" stroke-width="1.3"/><line x1="333" y1="825" x2="346" y2="824" stroke="#d04040" stroke-width="1.2"/><path d="M344,819 L349,823 M349,819 L344,823" stroke="#d04040" stroke-width="1"/><circle cx="332" cy="820" r="1.2" fill="#2040a0"/><path d="M330,802 L333,806 L336,802 M333,806 V810" fill="none" stroke="#50c050" stroke-width="1.1"/></svg>
<div class="t" style="left:323px;top:185.47px;font-size:8.9px;line-height:8.9px;color:#f4f4f4;font-weight:700;">Verts:</div>
<div class="t" style="right:1168.3px;top:185.47px;font-size:8.9px;line-height:8.9px;color:#f4f4f4;font-weight:700;letter-spacing:0.7px">461</div>
<div class="t" style="right:1102.3px;top:185.47px;font-size:8.9px;line-height:8.9px;color:#f4f4f4;font-weight:700;letter-spacing:0.7px">0</div>
<div class="t" style="right:1038.8px;top:185.47px;font-size:8.9px;line-height:8.9px;color:#f4f4f4;font-weight:700;letter-spacing:0.7px">0</div>
<div class="t" style="left:323px;top:204.97px;font-size:8.9px;line-height:8.9px;color:#f4f4f4;font-weight:700;">Edges:</div>
<div class="t" style="right:1168.3px;top:204.97px;font-size:8.9px;line-height:8.9px;color:#f4f4f4;font-weight:700;letter-spacing:0.7px">1377</div>
<div class="t" style="right:1102.3px;top:204.97px;font-size:8.9px;line-height:8.9px;color:#f4f4f4;font-weight:700;letter-spacing:0.7px">0</div>
<div class="t" style="right:1038.8px;top:204.97px;font-size:8.9px;line-height:8.9px;color:#f4f4f4;font-weight:700;letter-spacing:0.7px">0</div>
<div class="t" style="left:323px;top:224.47px;font-size:8.9px;line-height:8.9px;color:#f4f4f4;font-weight:700;">Faces:</div>
<div class="t" style="right:1168.3px;top:224.47px;font-size:8.9px;line-height:8.9px;color:#f4f4f4;font-weight:700;letter-spacing:0.7px">918</div>
<div class="t" style="right:1102.3px;top:224.47px;font-size:8.9px;line-height:8.9px;color:#f4f4f4;font-weight:700;letter-spacing:0.7px">0</div>
<div class="t" style="right:1038.8px;top:224.47px;font-size:8.9px;line-height:8.9px;color:#f4f4f4;font-weight:700;letter-spacing:0.7px">0</div>
<div class="t" style="left:323px;top:243.97px;font-size:8.9px;line-height:8.9px;color:#f4f4f4;font-weight:700;">Tris:</div>
<div class="t" style="right:1168.3px;top:243.97px;font-size:8.9px;line-height:8.9px;color:#f4f4f4;font-weight:700;letter-spacing:0.7px">918</div>
<div class="t" style="right:1102.3px;top:243.97px;font-size:8.9px;line-height:8.9px;color:#f4f4f4;font-weight:700;letter-spacing:0.7px">0</div>
<div class="t" style="right:1038.8px;top:243.97px;font-size:8.9px;line-height:8.9px;color:#f4f4f4;font-weight:700;letter-spacing:0.7px">0</div>
<div class="t" style="left:323px;top:263.47px;font-size:8.9px;line-height:8.9px;color:#f4f4f4;font-weight:700;">UVs:</div>
<div class="t" style="right:1168.3px;top:263.47px;font-size:8.9px;line-height:8.9px;color:#f4f4f4;font-weight:700;letter-spacing:0.7px">0</div>
<div class="t" style="right:1102.3px;top:263.47px;font-size:8.9px;line-height:8.9px;color:#f4f4f4;font-weight:700;letter-spacing:0.7px">0</div>
<div class="t" style="right:1038.8px;top:263.47px;font-size:8.9px;line-height:8.9px;color:#f4f4f4;font-weight:700;letter-spacing:0.7px">0</div>
<div class="t" style="left:628px;top:204.97px;font-size:8.9px;line-height:8.9px;color:#f4f4f4;font-weight:700;">Symmetry: Object X</div>
<div class="t" style="left:660px;top:834.38px;font-size:9px;line-height:9px;color:#f0f0f0;font-weight:700;">front -Z</div>
<div style="left:1059px;top:140px;width:4px;height:730px;background:#444444;"></div>
<div style="left:1062px;top:140px;width:1px;height:730px;background:#363636;"></div>
<div style="left:1063px;top:139px;width:515px;height:733px;background:#444444;"></div>
<div class="t" style="left:1075px;top:166.63px;font-size:11.3px;line-height:11.3px;color:#dedede;font-weight:400;">Channels</div>
<div class="t" style="left:1137.5px;top:166.63px;font-size:11.3px;line-height:11.3px;color:#dedede;font-weight:400;">Edit</div>
<div class="t" style="left:1172.5px;top:166.63px;font-size:11.3px;line-height:11.3px;color:#dedede;font-weight:400;">Object</div>
<div class="t" style="left:1221px;top:166.63px;font-size:11.3px;line-height:11.3px;color:#dedede;font-weight:400;">Show</div>
<div class="t" style="left:1069.5px;top:186.13px;font-size:11.3px;line-height:11.3px;color:#e0e0e0;font-weight:400;">curve1</div>
<div style="left:1503px;top:199px;width:72px;height:14px;background:#2b2b2b;border-radius:2px"></div>
<div class="t" style="right:103px;top:200.93px;font-size:11.3px;line-height:11.3px;color:#d4d4d4;font-weight:400;">Translate X</div>
<div class="t" style="left:1511px;top:200.73px;font-size:11.3px;line-height:11.3px;color:#ececec;font-weight:400;">0</div>
<div style="left:1503px;top:215px;width:72px;height:14px;background:#2b2b2b;border-radius:2px"></div>
<div class="t" style="right:103px;top:216.55px;font-size:11.3px;line-height:11.3px;color:#d4d4d4;font-weight:400;">Translate Y</div>
<div class="t" style="left:1511px;top:216.35px;font-size:11.3px;line-height:11.3px;color:#ececec;font-weight:400;">0</div>
<div style="left:1503px;top:230px;width:72px;height:14px;background:#2b2b2b;border-radius:2px"></div>
<div class="t" style="right:103px;top:232.17px;font-size:11.3px;line-height:11.3px;color:#d4d4d4;font-weight:400;">Translate Z</div>
<div class="t" style="left:1511px;top:231.97px;font-size:11.3px;line-height:11.3px;color:#ececec;font-weight:400;">0</div>
<div style="left:1503px;top:246px;width:72px;height:14px;background:#2b2b2b;border-radius:2px"></div>
<div class="t" style="right:103px;top:247.79px;font-size:11.3px;line-height:11.3px;color:#d4d4d4;font-weight:400;">Rotate X</div>
<div class="t" style="left:1511px;top:247.59px;font-size:11.3px;line-height:11.3px;color:#ececec;font-weight:400;">0</div>
<div style="left:1503px;top:261px;width:72px;height:14px;background:#2b2b2b;border-radius:2px"></div>
<div class="t" style="right:103px;top:263.41px;font-size:11.3px;line-height:11.3px;color:#d4d4d4;font-weight:400;">Rotate Y</div>
<div class="t" style="left:1511px;top:263.21px;font-size:11.3px;line-height:11.3px;color:#ececec;font-weight:400;">0</div>
<div style="left:1503px;top:277px;width:72px;height:14px;background:#2b2b2b;border-radius:2px"></div>
<div class="t" style="right:103px;top:279.03px;font-size:11.3px;line-height:11.3px;color:#d4d4d4;font-weight:400;">Rotate Z</div>
<div class="t" style="left:1511px;top:278.83px;font-size:11.3px;line-height:11.3px;color:#ececec;font-weight:400;">0</div>
<div style="left:1503px;top:293px;width:72px;height:14px;background:#2b2b2b;border-radius:2px"></div>
<div class="t" style="right:103px;top:294.65px;font-size:11.3px;line-height:11.3px;color:#d4d4d4;font-weight:400;">Scale X</div>
<div class="t" style="left:1511px;top:294.45px;font-size:11.3px;line-height:11.3px;color:#ececec;font-weight:400;">1</div>
<div style="left:1503px;top:308px;width:72px;height:14px;background:#2b2b2b;border-radius:2px"></div>
<div class="t" style="right:103px;top:310.27px;font-size:11.3px;line-height:11.3px;color:#d4d4d4;font-weight:400;">Scale Y</div>
<div class="t" style="left:1511px;top:310.07px;font-size:11.3px;line-height:11.3px;color:#ececec;font-weight:400;">1</div>
<div style="left:1503px;top:324px;width:72px;height:14px;background:#2b2b2b;border-radius:2px"></div>
<div class="t" style="right:103px;top:325.89px;font-size:11.3px;line-height:11.3px;color:#d4d4d4;font-weight:400;">Scale Z</div>
<div class="t" style="left:1511px;top:325.69px;font-size:11.3px;line-height:11.3px;color:#ececec;font-weight:400;">1</div>
<div style="left:1503px;top:340px;width:72px;height:14px;background:#2b2b2b;border-radius:2px"></div>
<div class="t" style="right:103px;top:341.51px;font-size:11.3px;line-height:11.3px;color:#d4d4d4;font-weight:400;">Visibility</div>
<div class="t" style="left:1511px;top:341.31px;font-size:11.3px;line-height:11.3px;color:#ececec;font-weight:400;">on</div>
<div class="t" style="left:1069.5px;top:358.57px;font-size:10.2px;line-height:10.2px;color:#dcdcdc;font-weight:400;letter-spacing:-0.2px">SHAPES</div>
<div style="left:1068px;top:371px;width:507px;height:14px;background:#3a3a3a;"></div>
<div class="t" style="left:1079px;top:373.43px;font-size:11.3px;line-height:11.3px;color:#e4e4e4;font-weight:400;">curveShape1</div>
<div style="left:1068px;top:402px;width:508px;height:251px;background:#2b2b2b;"></div>
<div style="left:1068px;top:665px;width:508px;height:207px;background:#3d3d3d;"></div>
<div style="left:1068px;top:665px;width:60px;height:17px;background:#474747;"></div>
<div class="t" style="left:1079px;top:668.43px;font-size:11.3px;line-height:11.3px;color:#f0f0f0;font-weight:400;">Display</div>
<div class="t" style="left:1140px;top:668.43px;font-size:11.3px;line-height:11.3px;color:#a8a8a8;font-weight:400;">Anim</div>
<div style="left:1068px;top:682px;width:508px;height:45px;background:#444444;"></div>
<div class="t" style="left:1078px;top:686.43px;font-size:11.3px;line-height:11.3px;color:#dcdcdc;font-weight:400;">Layers</div>
<div class="t" style="left:1126px;top:686.43px;font-size:11.3px;line-height:11.3px;color:#dcdcdc;font-weight:400;">Options</div>
<div class="t" style="left:1181.5px;top:686.43px;font-size:11.3px;line-height:11.3px;color:#dcdcdc;font-weight:400;">Help</div>
<div style="left:1070px;top:726px;width:503px;height:140px;background:#4a4a4a;"></div>
<div style="left:1071px;top:727px;width:501px;height:137px;background:#2b2b2b;"></div>
<div style="left:1235px;top:653px;width:170px;height:1px;background-image:linear-gradient(90deg,#777 50%,transparent 50%);background-size:3px 1px"></div>
<div style="left:1578px;top:139px;width:16px;height:733px;background:#3a3a3a;"></div>
<div style="left:1578px;top:139px;width:16px;height:164px;background:#444444;"></div>
<div style="left:1579px;top:304px;width:14px;height:101px;background:#3f3f3f;border:1px solid #333;box-sizing:border-box"></div>
<div style="left:1579px;top:407px;width:14px;height:113px;background:#3f3f3f;border:1px solid #333;box-sizing:border-box"></div>
<div style="left:1579px;top:522px;width:14px;height:86px;background:#3f3f3f;border:1px solid #333;box-sizing:border-box"></div>
<div style="left:1579px;top:610px;width:14px;height:52px;background:#3f3f3f;border:1px solid #333;box-sizing:border-box"></div>
<div style="left:1579px;top:664px;width:14px;height:81px;background:#3f3f3f;border:1px solid #333;box-sizing:border-box"></div>
<div class="t" style="left:1592px;top:152px;font-size:11.3px;line-height:12px;color:#e6e6e6;transform-origin:0 0;transform:rotate(90deg);">Channel Box / Layer Editor</div>
<div class="t" style="left:1592px;top:315px;font-size:11.3px;line-height:12px;color:#8a8a8a;transform-origin:0 0;transform:rotate(90deg);">Attribute Editor</div>
<div class="t" style="left:1592px;top:420px;font-size:11.3px;line-height:12px;color:#8a8a8a;transform-origin:0 0;transform:rotate(90deg);">Modeling Toolkit</div>
<div class="t" style="left:1592px;top:532px;font-size:11.3px;line-height:12px;color:#8a8a8a;transform-origin:0 0;transform:rotate(90deg);">Tool Settings</div>
<div class="t" style="left:1592px;top:622px;font-size:11.3px;line-height:12px;color:#8a8a8a;transform-origin:0 0;transform:rotate(90deg);">XGen</div>
<div class="t" style="left:1592px;top:673px;font-size:11.3px;line-height:12px;color:#8a8a8a;transform-origin:0 0;transform:rotate(90deg);">Shape Editor</div>
<div style="left:46px;top:852px;width:1017px;height:3px;background:#3a3a3a;"></div>
<div style="left:46px;top:855px;width:1017px;height:18px;background:#393939;"></div>
<div style="left:2px;top:855px;width:40px;height:18px;background:#444444;"></div>
<div style="left:47px;top:856px;width:86px;height:17px;background:#414141;"></div>
<div style="left:2px;top:873px;width:1594px;height:5px;background:#444444;"></div>
<div class="t" style="left:56.5px;top:859.43px;font-size:11.3px;line-height:11.3px;color:#a8a8a8;font-weight:400;">Graph Editor</div>
<div style="left:12px;top:878px;width:1295px;height:29px;background:#2b2b2b;"></div>
<div style="left:20px;top:878px;width:9px;height:29px;background:#555555;"></div>
<div class="t" style="left:21.5px;top:894.11px;font-size:10.5px;line-height:10.5px;color:#f4f4f4;font-weight:400;">1</div>
<div style="left:12px;top:878px;width:1295px;height:29px;overflow:hidden"><div style="position:absolute;left:49.40px;top:13px;width:1.6px;height:16px;background:#8e8e8e"></div><div class="t" style="position:absolute;left:52.00px;top:0.88px;font-size:10.3px;line-height:10.3px;color:#8e8e8e">5</div><div style="position:absolute;left:102.78px;top:13px;width:1.6px;height:16px;background:#8e8e8e"></div><div class="t" style="position:absolute;left:105.88px;top:0.88px;font-size:10.3px;line-height:10.3px;color:#8e8e8e">10</div><div style="position:absolute;left:156.16px;top:13px;width:1.6px;height:16px;background:#8e8e8e"></div><div class="t" style="position:absolute;left:159.26px;top:0.88px;font-size:10.3px;line-height:10.3px;color:#8e8e8e">15</div><div style="position:absolute;left:209.54px;top:13px;width:1.6px;height:16px;background:#8e8e8e"></div><div class="t" style="position:absolute;left:212.64px;top:0.88px;font-size:10.3px;line-height:10.3px;color:#8e8e8e">20</div><div style="position:absolute;left:262.92px;top:13px;width:1.6px;height:16px;background:#8e8e8e"></div><div class="t" style="position:absolute;left:266.02px;top:0.88px;font-size:10.3px;line-height:10.3px;color:#8e8e8e">25</div><div style="position:absolute;left:316.30px;top:13px;width:1.6px;height:16px;background:#8e8e8e"></div><div class="t" style="position:absolute;left:319.40px;top:0.88px;font-size:10.3px;line-height:10.3px;color:#8e8e8e">30</div><div style="position:absolute;left:369.68px;top:13px;width:1.6px;height:16px;background:#8e8e8e"></div><div class="t" style="position:absolute;left:372.78px;top:0.88px;font-size:10.3px;line-height:10.3px;color:#8e8e8e">35</div><div style="position:absolute;left:423.06px;top:13px;width:1.6px;height:16px;background:#8e8e8e"></div><div class="t" style="position:absolute;left:426.16px;top:0.88px;font-size:10.3px;line-height:10.3px;color:#8e8e8e">40</div><div style="position:absolute;left:476.44px;top:13px;width:1.6px;height:16px;background:#8e8e8e"></div><div class="t" style="position:absolute;left:479.54px;top:0.88px;font-size:10.3px;line-height:10.3px;color:#8e8e8e">45</div><div style="position:absolute;left:529.82px;top:13px;width:1.6px;height:16px;background:#8e8e8e"></div><div class="t" style="position:absolute;left:532.92px;top:0.88px;font-size:10.3px;line-height:10.3px;color:#8e8e8e">50</div><div style="position:absolute;left:583.20px;top:13px;width:1.6px;height:16px;background:#8e8e8e"></div><div class="t" style="position:absolute;left:586.30px;top:0.88px;font-size:10.3px;line-height:10.3px;color:#8e8e8e">55</div><div style="position:absolute;left:636.58px;top:13px;width:1.6px;height:16px;background:#8e8e8e"></div><div class="t" style="position:absolute;left:639.68px;top:0.88px;font-size:10.3px;line-height:10.3px;color:#8e8e8e">60</div><div style="position:absolute;left:689.96px;top:13px;width:1.6px;height:16px;background:#8e8e8e"></div><div class="t" style="position:absolute;left:693.06px;top:0.88px;font-size:10.3px;line-height:10.3px;color:#8e8e8e">65</div><div style="position:absolute;left:743.34px;top:13px;width:1.6px;height:16px;background:#8e8e8e"></div><div class="t" style="position:absolute;left:746.44px;top:0.88px;font-size:10.3px;line-height:10.3px;color:#8e8e8e">70</div><div style="position:absolute;left:796.72px;top:13px;width:1.6px;height:16px;background:#8e8e8e"></div><div class="t" style="position:absolute;left:799.82px;top:0.88px;font-size:10.3px;line-height:10.3px;color:#8e8e8e">75</div><div style="position:absolute;left:850.10px;top:13px;width:1.6px;height:16px;background:#8e8e8e"></div><div class="t" style="position:absolute;left:853.20px;top:0.88px;font-size:10.3px;line-height:10.3px;color:#8e8e8e">80</div><div style="position:absolute;left:903.48px;top:13px;width:1.6px;height:16px;background:#8e8e8e"></div><div class="t" style="position:absolute;left:906.58px;top:0.88px;font-size:10.3px;line-height:10.3px;color:#8e8e8e">85</div><div style="position:absolute;left:956.86px;top:13px;width:1.6px;height:16px;background:#8e8e8e"></div><div class="t" style="position:absolute;left:959.96px;top:0.88px;font-size:10.3px;line-height:10.3px;color:#8e8e8e">90</div><div style="position:absolute;left:1010.24px;top:13px;width:1.6px;height:16px;background:#8e8e8e"></div><div class="t" style="position:absolute;left:1013.34px;top:0.88px;font-size:10.3px;line-height:10.3px;color:#8e8e8e">95</div><div style="position:absolute;left:1063.62px;top:13px;width:1.6px;height:16px;background:#8e8e8e"></div><div class="t" style="position:absolute;left:1066.72px;top:0.88px;font-size:10.3px;line-height:10.3px;color:#8e8e8e">100</div><div style="position:absolute;left:1117.00px;top:13px;width:1.6px;height:16px;background:#8e8e8e"></div><div class="t" style="position:absolute;left:1120.10px;top:0.88px;font-size:10.3px;line-height:10.3px;color:#8e8e8e">105</div><div style="position:absolute;left:1170.38px;top:13px;width:1.6px;height:16px;background:#8e8e8e"></div><div class="t" style="position:absolute;left:1173.48px;top:0.88px;font-size:10.3px;line-height:10.3px;color:#8e8e8e">110</div><div style="position:absolute;left:1223.76px;top:13px;width:1.6px;height:16px;background:#8e8e8e"></div><div class="t" style="position:absolute;left:1226.86px;top:0.88px;font-size:10.3px;line-height:10.3px;color:#8e8e8e">115</div><div style="position:absolute;left:1277.14px;top:13px;width:1.6px;height:16px;background:#8e8e8e"></div><div class="t" style="position:absolute;left:1280.24px;top:0.88px;font-size:10.3px;line-height:10.3px;color:#8e8e8e">120</div></div>
<div style="left:1315px;top:884px;width:85px;height:17px;background:#2b2b2b;border-radius:2px"></div>
<div class="t" style="left:1322px;top:887.69px;font-size:11px;line-height:11px;color:#e8e8e8;font-weight:400;">1</div>
<div style="left:14px;top:917px;width:85px;height:22px;background:#2b2b2b;border-radius:2px"></div>
<div class="t" style="left:19.5px;top:923.43px;font-size:11.3px;line-height:11.3px;color:#e8e8e8;font-weight:400;">1</div>
<div style="left:108px;top:917px;width:85px;height:22px;background:#2b2b2b;border-radius:2px"></div>
<div class="t" style="left:112.5px;top:923.43px;font-size:11.3px;line-height:11.3px;color:#e8e8e8;font-weight:400;">1</div>
<div style="left:200px;top:915px;width:712px;height:26px;background:#3c3c3c;"></div>
<div style="left:203px;top:918px;width:433px;height:20px;background:#5c5c5c;border-radius:4px"></div>
<div style="left:207px;top:922px;width:12px;height:12px;background:#8a8a8a;border-radius:3px"></div>
<div style="left:621px;top:922px;width:12px;height:12px;background:#8a8a8a;border-radius:3px"></div>
<div class="t" style="left:223.5px;top:923.93px;font-size:11.3px;line-height:11.3px;color:#e8e8e8;font-weight:400;">1</div>
<div class="t" style="left:596px;top:923.93px;font-size:11.3px;line-height:11.3px;color:#e8e8e8;font-weight:400;">120</div>
<div style="left:920px;top:917px;width:84px;height:22px;background:#2b2b2b;border-radius:2px"></div>
<div class="t" style="left:924.5px;top:923.43px;font-size:11.3px;line-height:11.3px;color:#e8e8e8;font-weight:400;">120</div>
<div style="left:1013px;top:917px;width:84px;height:22px;background:#2b2b2b;border-radius:2px"></div>
<div class="t" style="left:1017.5px;top:923.43px;font-size:11.3px;line-height:11.3px;color:#e8e8e8;font-weight:400;">200</div>
<div style="left:1136px;top:917px;width:100px;height:21px;background:#404040;"></div>
<div class="t" style="left:1140.5px;top:922.43px;font-size:11.3px;line-height:11.3px;color:#e0e0e0;font-weight:400;">No Character Set</div>
<div style="left:1261px;top:917px;width:97px;height:21px;background:#404040;"></div>
<div class="t" style="left:1266.5px;top:922.43px;font-size:11.3px;line-height:11.3px;color:#e0e0e0;font-weight:400;">No Anim Layer</div>
<div style="left:1383px;top:917px;width:99px;height:19px;background:#555555;border-radius:2px"></div>
<div style="left:1462px;top:917px;width:1px;height:19px;background:#4d4d4d;"></div>
<div class="t" style="left:1387px;top:921.43px;font-size:11.3px;line-height:11.3px;color:#d8d8d8;font-weight:400;">24 fps</div>
<div style="left:1535px;top:915px;width:23px;height:23px;background:#d8343c;"></div>
<div style="left:2px;top:943px;width:1594px;height:3px;background:#393939;"></div>
<div class="t" style="left:16px;top:954.93px;font-size:11.3px;line-height:11.3px;color:#f0f0f0;font-weight:400;">Python</div>
<div style="left:58px;top:951px;width:343px;height:20px;background:#2b2b2b;border-radius:2px"></div>
<div style="left:405px;top:953px;width:1px;height:2px;background:#777777;"></div>
<div style="left:405px;top:957px;width:1px;height:2px;background:#777777;"></div>
<div style="left:405px;top:961px;width:1px;height:2px;background:#777777;"></div>
<div style="left:405px;top:965px;width:1px;height:2px;background:#777777;"></div>
<div style="left:411px;top:951px;width:1152px;height:20px;background:#2b2b2b;border-radius:2px"></div>
<div style="left:2px;top:974px;width:1594px;height:4px;background:#393939;"></div>
<div class="t" style="left:23px;top:983.87px;font-size:10.78px;line-height:10.78px;color:#d0d0d0;font-weight:400;">Move Tool: Use manipulator to move object(s). Ctrl+MMB+drag to move components along normals. Shift+drag manipulator axis or plane handles to extrude components or clone objects. Ctrl+Shift+LMB+drag to constrain movement to a connected edge. Use D or HOME to change the pivot position and axis orientation.</div>
<svg style="left:117.5px;top:48px;overflow:visible" width="6" height="21" viewBox="0 0 6 21"><rect x="2.3" y="0" width="1.4" height="21" fill="#6a6a6a"/><rect x="1.3" y="5.5" width="3.4" height="10" rx="1.7" fill="#777"/></svg>
<svg style="left:272.5px;top:48px;overflow:visible" width="6" height="21" viewBox="0 0 6 21"><rect x="2.3" y="0" width="1.4" height="21" fill="#6a6a6a"/><rect x="1.3" y="5.5" width="3.4" height="10" rx="1.7" fill="#777"/></svg>
<svg style="left:363px;top:48px;overflow:visible" width="6" height="21" viewBox="0 0 6 21"><rect x="2.3" y="0" width="1.4" height="21" fill="#6a6a6a"/><rect x="1.3" y="5.5" width="3.4" height="10" rx="1.7" fill="#777"/></svg>
<svg style="left:619px;top:48px;overflow:visible" width="6" height="21" viewBox="0 0 6 21"><rect x="2.3" y="0" width="1.4" height="21" fill="#6a6a6a"/><rect x="1.3" y="5.5" width="3.4" height="10" rx="1.7" fill="#777"/></svg>
<svg style="left:894px;top:48px;overflow:visible" width="6" height="21" viewBox="0 0 6 21"><rect x="2.3" y="0" width="1.4" height="21" fill="#6a6a6a"/><rect x="1.3" y="5.5" width="3.4" height="10" rx="1.7" fill="#777"/></svg>
<svg style="left:1031.5px;top:48px;overflow:visible" width="6" height="21" viewBox="0 0 6 21"><rect x="2.3" y="0" width="1.4" height="21" fill="#6a6a6a"/><rect x="1.3" y="5.5" width="3.4" height="10" rx="1.7" fill="#777"/></svg>
<svg style="left:1120.5px;top:48px;overflow:visible" width="6" height="21" viewBox="0 0 6 21"><rect x="2.3" y="0" width="1.4" height="21" fill="#6a6a6a"/><rect x="1.3" y="5.5" width="3.4" height="10" rx="1.7" fill="#777"/></svg>
<svg style="left:1321px;top:48px;overflow:visible" width="6" height="21" viewBox="0 0 6 21"><rect x="2.3" y="0" width="1.4" height="21" fill="#6a6a6a"/><rect x="1.3" y="5.5" width="3.4" height="10" rx="1.7" fill="#777"/></svg>
<svg style="left:137px;top:50px;overflow:visible" width="13" height="17" viewBox="0 0 13 17"><path d="M0.5,0.5 H8 L12.5,5 V16.5 H0.5 Z" fill="#d4d4d4"/><path d="M8,0.5 V5 H12.5" fill="#aaa"/></svg>
<svg style="left:156px;top:51px;overflow:visible" width="17" height="15" viewBox="0 0 17 15"><path d="M0.5,2 H6 L7.5,3.5 H14 V6 H3 L0.5,14 Z" fill="#d4d4d4"/><path d="M3.5,6.5 H16.5 L14,14.5 H0.5 Z" fill="#d4d4d4"/></svg>
<svg style="left:180px;top:50px;overflow:visible" width="15" height="17" viewBox="0 0 15 17"><rect x="0.5" y="0.5" width="14" height="16" rx="1.5" fill="#d4d4d4"/><rect x="3" y="2" width="9" height="5" fill="#444"/><rect x="3" y="10" width="9" height="5" fill="#444"/><rect x="4.5" y="11" width="3" height="3" fill="#d4d4d4"/></svg>
<svg style="left:201px;top:52px;overflow:visible" width="17" height="13" viewBox="0 0 17 13"><path d="M5,2 L1,5.5 L5,9 M1.5,5.5 H11 A4,4 0 0 1 11,12 H6" fill="none" stroke="#d4d4d4" stroke-width="2.2"/></svg>
<svg style="left:223px;top:52px;overflow:visible" width="17" height="13" viewBox="0 0 17 13"><path d="M12,2 L16,5.5 L12,9 M15.5,5.5 H6 A4,4 0 0 0 6,12 H9" fill="none" stroke="#d4d4d4" stroke-width="2.2"/></svg>
<svg style="left:251px;top:49px;overflow:visible" width="6" height="20" viewBox="0 0 6 20"><path d="M1,0 V20 L5,10 Z" fill="#777"/></svg>
<svg style="left:288px;top:49px;overflow:visible" width="19" height="20" viewBox="0 0 19 20"><rect x="0" y="1" width="5" height="5" fill="#d4d4d4"/><rect x="0" y="10" width="5" height="5" fill="#d4d4d4"/><path d="M2.5,6 V10" stroke="#d4d4d4"/><path d="M5,3.5 H9 V8" fill="none" stroke="#4fb3c0" stroke-width="1.2"/><path d="M9,8 V19 L11.5,16.5 L14,20 L15.5,19 L13,15.5 H16.5 Z" fill="#d4d4d4"/></svg>
<svg style="left:309px;top:48px;overflow:visible" width="22" height="21" viewBox="0 0 22 21"><rect width="22" height="21" fill="#5585ab"/><rect x="7" y="2" width="10" height="9" fill="#4fb3c0" stroke="#1e3a4a" stroke-width="1"/><circle cx="6.5" cy="14" r="4.5" fill="#d4d4d4"/><path d="M13,9 V20 L15.5,17.5 L18,21 L19.5,20 L17,16.5 H20.5 Z" fill="#d4d4d4" stroke="#333" stroke-width=".6"/></svg>
<svg style="left:335px;top:49px;overflow:visible" width="18" height="20" viewBox="0 0 18 20"><rect x="0" y="1" width="4.5" height="4.5" fill="#d4d4d4"/><rect x="5.5" y="1" width="4.5" height="4.5" fill="#d4d4d4"/><rect x="0" y="6.5" width="4.5" height="4.5" fill="#d4d4d4"/><rect x="5.5" y="6.5" width="4.5" height="4.5" fill="#888"/><path d="M8,8 V19 L10.5,16.5 L13,20 L14.5,19 L12,15.5 H15.5 Z" fill="#d4d4d4"/></svg>
<svg style="left:377px;top:56px;overflow:visible" width="8" height="5" viewBox="0 0 8 5"><path d="M0,0 H8 L4,5 Z" fill="#9a9a9a"/></svg>
<svg style="left:773px;top:56px;overflow:visible" width="8" height="5" viewBox="0 0 8 5"><path d="M0,0 H8 L4,5 Z" fill="#9a9a9a"/></svg>
<svg style="left:912px;top:56px;overflow:visible" width="8" height="5" viewBox="0 0 8 5"><path d="M0,0 H8 L4,5 Z" fill="#9a9a9a"/></svg>
<svg style="left:388px;top:48px;overflow:visible" width="179" height="21" viewBox="0 0 179 21"><rect width="179" height="21" fill="#5b93bf"/><rect x="21.9" y="0" width="1" height="21" fill="#4a7898"/><rect x="44.3" y="0" width="1" height="21" fill="#4a7898"/><rect x="66.7" y="0" width="1" height="21" fill="#4a7898"/><rect x="89.1" y="0" width="1" height="21" fill="#4a7898"/><rect x="111.5" y="0" width="1" height="21" fill="#4a7898"/><rect x="133.9" y="0" width="1" height="21" fill="#4a7898"/><rect x="156.3" y="0" width="1" height="21" fill="#4a7898"/></svg>
<svg style="left:388.0px;top:48px;overflow:visible" width="22" height="21" viewBox="0 0 22 21"><path d="M3,11 H19 M11,3 V19" stroke="#7fd6e6" stroke-width="1.3"/></svg>
<svg style="left:410.4px;top:48px;overflow:visible" width="22" height="21" viewBox="0 0 22 21"><path d="M15,3 L6,11 L13,18" fill="none" stroke="#203848" stroke-width="1.2"/><circle cx="15" cy="3.5" r="2" fill="#4fb3c0" stroke="#203848" stroke-width=".8"/><circle cx="6" cy="11" r="2" fill="#4fb3c0" stroke="#203848" stroke-width=".8"/><circle cx="13" cy="18" r="2" fill="#4fb3c0" stroke="#203848" stroke-width=".8"/></svg>
<svg style="left:432.8px;top:48px;overflow:visible" width="22" height="21" viewBox="0 0 22 21"><path d="M5,5 C12,3 8,12 14,12 C17,12 17,15 17,17" fill="none" stroke="#203848" stroke-width="1.2"/><rect x="2.5" y="3" width="4" height="4" fill="#4fb3c0" stroke="#203848" stroke-width=".8"/><rect x="15" y="15" width="4" height="4" fill="#4fb3c0" stroke="#203848" stroke-width=".8"/></svg>
<svg style="left:455.2px;top:48px;overflow:visible" width="22" height="21" viewBox="0 0 22 21"><path d="M11,3 L19,11 L11,19 L3,11 Z M7,7 L15,15 M15,7 L7,15" fill="#4fb3c0" stroke="#203848" stroke-width="1.2"/></svg>
<svg style="left:477.6px;top:48px;overflow:visible" width="22" height="21" viewBox="0 0 22 21"><rect x="4" y="4" width="14" height="14" fill="#4fb3c0" stroke="#203848" stroke-width="1.2"/><rect x="2.5" y="2.5" width="3" height="3" fill="none" stroke="#203848"/><rect x="16.5" y="2.5" width="3" height="3" fill="none" stroke="#203848"/><rect x="2.5" y="16.5" width="3" height="3" fill="none" stroke="#203848"/><rect x="16.5" y="16.5" width="3" height="3" fill="none" stroke="#203848"/></svg>
<svg style="left:500.0px;top:48px;overflow:visible" width="22" height="21" viewBox="0 0 22 21"><circle cx="6" cy="5" r="2.6" fill="#4fb3c0" stroke="#203848" stroke-width=".8"/><circle cx="11" cy="4" r="2.6" fill="#4fb3c0" stroke="#203848" stroke-width=".8"/><circle cx="16" cy="6" r="2.6" fill="#4fb3c0" stroke="#203848" stroke-width=".8"/><circle cx="8" cy="10" r="2.6" fill="#4fb3c0" stroke="#203848" stroke-width=".8"/><circle cx="14" cy="11" r="2.6" fill="#4fb3c0" stroke="#203848" stroke-width=".8"/><circle cx="5" cy="15" r="2.6" fill="#4fb3c0" stroke="#203848" stroke-width=".8"/><circle cx="11" cy="16" r="2.6" fill="#4fb3c0" stroke="#203848" stroke-width=".8"/><circle cx="17" cy="16" r="2.6" fill="#4fb3c0" stroke="#203848" stroke-width=".8"/></svg>
<svg style="left:522.4px;top:48px;overflow:visible" width="22" height="21" viewBox="0 0 22 21"><rect x="3" y="3" width="17" height="12" fill="#4fb3c0" stroke="#203848" stroke-width="1"/><path d="M3,6 H20" stroke="#203848"/><circle cx="7" cy="15" r="4.5" fill="#4fb3c0" stroke="#203848" stroke-width="1"/></svg>
<svg style="left:544.8px;top:48px;overflow:visible" width="22" height="21" viewBox="0 0 22 21"><path d="M7,7 A4.5,4.5 0 1 1 12,11.5 V14" fill="none" stroke="#203848" stroke-width="2"/><circle cx="12" cy="18" r="1.3" fill="#203848"/></svg>
<svg style="left:573px;top:50px;overflow:visible" width="12" height="17" viewBox="0 0 12 17"><path d="M3,7 V4.5 A3,3 0 0 1 9,4.5 V7" fill="none" stroke="#d4d4d4" stroke-width="2"/><rect x="0.5" y="7" width="11" height="9" fill="#d4d4d4"/><rect x="5.3" y="9.5" width="1.4" height="4" fill="#444"/></svg>
<svg style="left:594px;top:51px;overflow:visible" width="16" height="17" viewBox="0 0 16 17"><path d="M0.5,1 V10" stroke="#d4d4d4" stroke-dasharray="1.5,1.5"/><path d="M0.5,10 H6" stroke="#d4d4d4" stroke-dasharray="1.5,1.5"/><rect x="5" y="1" width="7" height="6" fill="#d4d4d4"/><path d="M7,4 V15 L9.5,12.5 L12,16 L13.5,15 L11,11.5 H14.5 Z" fill="#d4d4d4" stroke="#444" stroke-width=".6"/></svg>
<svg style="left:637px;top:49px;overflow:visible" width="20" height="21" viewBox="0 0 20 21"><path d="M11,12 L5,6.5 A3.6,3.6 0 0 1 10.5,1.8 L16,7.5" fill="none" stroke="#d4d4d4" stroke-width="2.6" transform="translate(-1,1)"/><path d="M9,15 H19 M9,18.5 H19 M12,11 V21 M16,11 V21" stroke="#4fb3c0" stroke-width="1"/></svg>
<svg style="left:659px;top:49px;overflow:visible" width="20" height="21" viewBox="0 0 20 21"><path d="M11,12 L5,6.5 A3.6,3.6 0 0 1 10.5,1.8 L16,7.5" fill="none" stroke="#d4d4d4" stroke-width="2.6" transform="translate(-1,1)"/><path d="M17,8 A6,6 0 0 1 8,17" fill="none" stroke="#4fb3c0" stroke-width="1"/></svg>
<svg style="left:682px;top:49px;overflow:visible" width="20" height="21" viewBox="0 0 20 21"><path d="M11,12 L5,6.5 A3.6,3.6 0 0 1 10.5,1.8 L16,7.5" fill="none" stroke="#d4d4d4" stroke-width="2.6" transform="translate(-1,1)"/><circle cx="15.5" cy="17" r="2" fill="#4fb3c0"/></svg>
<svg style="left:704px;top:49px;overflow:visible" width="20" height="21" viewBox="0 0 20 21"><path d="M11,12 L5,6.5 A3.6,3.6 0 0 1 10.5,1.8 L16,7.5" fill="none" stroke="#d4d4d4" stroke-width="2.6" transform="translate(-1,1)"/><circle cx="17" cy="3" r="1.8" fill="none" stroke="#4fb3c0"/><circle cx="13" cy="15" r="1.8" fill="none" stroke="#4fb3c0"/><path d="M13,17 V21 M15,15 H19" stroke="#4fb3c0"/></svg>
<svg style="left:726px;top:49px;overflow:visible" width="20" height="21" viewBox="0 0 20 21"><path d="M11,12 L5,6.5 A3.6,3.6 0 0 1 10.5,1.8 L16,7.5" fill="none" stroke="#d4d4d4" stroke-width="2.6" transform="translate(-1,1)"/><path d="M9,12 L14,7 L20,13 L15,18 Z M11.5,9.5 L17.5,15.5 M14,13 L17,10" fill="none" stroke="#4fb3c0" stroke-width="1"/></svg>
<svg style="left:748px;top:49px;overflow:visible" width="20" height="21" viewBox="0 0 20 21"><path d="M11,12 L5,6.5 A3.6,3.6 0 0 1 10.5,1.8 L16,7.5" fill="none" stroke="#d4d4d4" stroke-width="2.6" transform="translate(-1,1)"/></svg>
<svg style="left:1047px;top:50px;overflow:visible" width="18" height="17" viewBox="0 0 18 17"><path d="M3,3 H15 V15 H3 Z" fill="none" stroke="#d4d4d4" stroke-width="1.6"/><path d="M0,7 L5,10 L0,13 Z" fill="#d4d4d4"/></svg>
<svg style="left:1071px;top:50px;overflow:visible" width="18" height="17" viewBox="0 0 18 17"><path d="M1,3 H13 V15 H1 Z" fill="none" stroke="#d4d4d4" stroke-width="1.6"/><path d="M12,6 L18,9.5 L12,13 Z" fill="#d4d4d4"/></svg>
<svg style="left:1091px;top:48px;overflow:visible" width="22" height="21" viewBox="0 0 22 21"><rect width="22" height="21" fill="#5585ab"/><circle cx="8" cy="7" r="5" fill="#d4d4d4"/><path d="M8,4 V7.5 H10.5" stroke="#333" fill="none"/><path d="M8,12 V19" stroke="#d4d4d4" stroke-width="1.3"/><rect x="11" y="9" width="8" height="2" fill="#d4d4d4"/><rect x="11" y="13" width="8" height="2" fill="#d4d4d4"/><rect x="11" y="17" width="8" height="2" fill="#d4d4d4"/></svg>
<svg style="left:1137px;top:50px;overflow:visible" width="18" height="17" viewBox="0 0 18 17"><rect x="0.5" y="4.5" width="16" height="11" fill="#d4d4d4"/><path d="M0.5,0.5 H16.5 V3 H0.5 Z" fill="#d4d4d4"/><path d="M3,0.5 L5,3 M7,0.5 L9,3 M11,0.5 L13,3" stroke="#444" stroke-width="1.2"/><ellipse cx="8.5" cy="10" rx="5" ry="2.6" fill="none" stroke="#444" stroke-width="1.2"/><circle cx="8.5" cy="10" r="1.5" fill="#444"/></svg>
<svg style="left:1160px;top:50px;overflow:visible" width="18" height="17" viewBox="0 0 18 17"><rect x="0.5" y="4.5" width="16" height="11" fill="#d4d4d4"/><path d="M0.5,0.5 H16.5 V3 H0.5 Z" fill="#d4d4d4"/><path d="M3,0.5 L5,3 M7,0.5 L9,3 M11,0.5 L13,3" stroke="#444" stroke-width="1.2"/></svg>
<svg style="left:1182px;top:50px;overflow:visible" width="18" height="17" viewBox="0 0 18 17"><rect x="0.5" y="4.5" width="16" height="11" fill="#d4d4d4"/><path d="M0.5,0.5 H16.5 V3 H0.5 Z" fill="#d4d4d4"/><path d="M3,0.5 L5,3 M7,0.5 L9,3 M11,0.5 L13,3" stroke="#444" stroke-width="1.2"/><text x="2.5" y="14" font-size="6.5" font-family="Liberation Sans" font-weight="700" fill="#444">IPR</text></svg>
<svg style="left:1205px;top:50px;overflow:visible" width="18" height="17" viewBox="0 0 18 17"><rect x="0.5" y="4.5" width="16" height="11" fill="#d4d4d4"/><path d="M0.5,0.5 H16.5 V3 H0.5 Z" fill="#d4d4d4"/><path d="M3,0.5 L5,3 M7,0.5 L9,3 M11,0.5 L13,3" stroke="#444" stroke-width="1.2"/><circle cx="13" cy="13" r="3.6" fill="none" stroke="#4fb3c0" stroke-width="2.2" stroke-dasharray="1.6,1"/></svg>
<svg style="left:1227px;top:49px;overflow:visible" width="18" height="19" viewBox="0 0 18 19"><circle cx="9" cy="9.5" r="8.5" fill="#4fb3c0"/><circle cx="8" cy="8" r="3.3" fill="#d4d4d4" stroke="#2a5a66" stroke-width="1"/></svg>
<svg style="left:1249px;top:50px;overflow:visible" width="18" height="17" viewBox="0 0 18 17"><rect x="0.5" y="4.5" width="16" height="11" fill="#d4d4d4"/><path d="M0.5,0.5 H16.5 V3 H0.5 Z" fill="#d4d4d4"/><path d="M3,0.5 L5,3 M7,0.5 L9,3 M11,0.5 L13,3" stroke="#444" stroke-width="1.2"/><path d="M9,10 L15,7 L19,10 L13,13 Z" fill="#4fb3c0" stroke="#444" stroke-width=".6"/><path d="M9,13 L13,16 L19,13" fill="none" stroke="#4fb3c0" stroke-width="1.3"/></svg>
<svg style="left:1271px;top:49px;overflow:visible" width="19" height="20" viewBox="0 0 19 20"><path d="M9,10 L17,2" stroke="#d4d4d4" stroke-width="2.4" stroke-linecap="round"/><path d="M5,10 L9,14" stroke="#d4d4d4" stroke-width="2"/><circle cx="13" cy="14" r="3.5" fill="none" stroke="#4fb3c0" stroke-width="2" stroke-dasharray="1.4,1"/><path d="M1,18 L3,16 M3,13 L5,11" stroke="#4fb3c0"/></svg>
<svg style="left:1296px;top:49px;overflow:visible" width="12" height="20" viewBox="0 0 12 20"><rect x="1" y="3" width="3.5" height="14" fill="#d4d4d4"/><rect x="7" y="3" width="3.5" height="14" fill="#d4d4d4"/></svg>
<svg style="left:1345px;top:49px;overflow:visible" width="17" height="19" viewBox="0 0 17 19"><rect x="0.5" y="0.5" width="15" height="17" fill="none" stroke="#d4d4d4" stroke-width="1.2"/><path d="M5,3.5 H11 M8,3.5 V14.5 M5,14.5 H11" stroke="#d4d4d4" stroke-width="1.2"/></svg>
<svg style="left:1483px;top:49px;overflow:visible" width="18" height="19" viewBox="0 0 18 19"><path d="M1,7 L8,3 L13,6 L6,10 Z" fill="#d4d4d4"/><path d="M1,7 V15 L6,18 V10 Z" fill="#bbb"/><path d="M6,10 L13,6 V14 L6,18 Z" fill="#999"/><path d="M11,3 H17 M14,3 V18" stroke="#d4d4d4" stroke-width="2"/></svg>
<svg style="left:1506px;top:49px;overflow:visible" width="17" height="20" viewBox="0 0 17 20"><circle cx="8.5" cy="3" r="2.3" fill="#d4d4d4"/><path d="M1,7.5 H16 M8.5,6 V19 M5.5,8 V12 H11.5 V8 M5.5,12 V19 M11.5,12 V19" stroke="#d4d4d4" stroke-width="2"/></svg>
<svg style="left:1529px;top:49px;overflow:visible" width="17" height="20" viewBox="0 0 17 20"><rect x="5" y="1" width="11" height="3.5" fill="none" stroke="#d4d4d4" stroke-width="1.3"/><rect x="5" y="15" width="11" height="3.5" fill="none" stroke="#d4d4d4" stroke-width="1.3"/><rect x="7" y="8" width="9" height="3.5" fill="none" stroke="#d4d4d4" stroke-width="1.3"/><path d="M0,3 H4 M0,10 H6 M0,17 H4" stroke="#d4d4d4" stroke-width="1.3"/><circle cx="11.5" cy="9.7" r="1.6" fill="#d4d4d4"/></svg>
<svg style="left:1551px;top:49px;overflow:visible" width="17" height="20" viewBox="0 0 17 20"><circle cx="2.5" cy="3" r="2.2" fill="#d4d4d4"/><circle cx="2.5" cy="10" r="2.2" fill="#d4d4d4"/><circle cx="2.5" cy="17" r="2.2" fill="#d4d4d4"/><path d="M5,3 H16 M14,3 V19 M5,10 H10 M5,17 H10" stroke="#d4d4d4" stroke-width="1.4"/></svg>
<svg style="left:1571px;top:48px;overflow:visible" width="21" height="21" viewBox="0 0 21 21"><rect width="21" height="21" fill="#5585ab"/><path d="M10.5,3 L19,8 L10.5,13 L2,8 Z" fill="#d4d4d4" stroke="#444" stroke-width=".7"/><path d="M2,11 L10.5,16 L19,11 M2,14 L10.5,19 L19,14" fill="none" stroke="#d4d4d4" stroke-width="1.2"/></svg>
<svg style="left:1576px;top:24px;overflow:visible" width="12" height="16" viewBox="0 0 12 16"><path d="M3,7 V4.5 A3,3 0 0 1 9,4.5 V7" fill="none" stroke="#d4d4d4" stroke-width="2"/><rect x="0.5" y="7" width="11" height="8.5" fill="#d4d4d4"/><rect x="5.3" y="9.5" width="1.4" height="3.5" fill="#444"/></svg>
<svg style="left:1552px;top:29px;overflow:visible" width="11" height="7" viewBox="0 0 11 7"><path d="M0,0 H11 L5.5,6 Z" fill="#cfcfcf"/></svg>
<svg style="left:94px;top:56px;overflow:visible" width="10" height="6" viewBox="0 0 10 6"><path d="M0,0 H10 L5,6 Z" fill="#cfcfcf"/></svg>
<svg style="left:45.5px;top:102px;overflow:visible" width="26" height="26" viewBox="0 0 26 26"><circle cx="12" cy="12" r="10.6" fill="none" stroke="#6699bb" stroke-width="1.7"/></svg>
<svg style="left:79.7px;top:102px;overflow:visible" width="26" height="26" viewBox="0 0 26 26"><rect x="1.5" y="1.5" width="21" height="21" fill="none" stroke="#6699bb" stroke-width="1.7"/></svg>
<svg style="left:113.9px;top:102px;overflow:visible" width="26" height="26" viewBox="0 0 26 26"><path d="M4,3 H9 L12,6 L10,12 L11,17 L19,21" fill="none" stroke="#6699bb" stroke-width="1.2"/><rect x="0.7000000000000002" y="0.7000000000000002" width="4.6" height="4.6" fill="none" stroke="#6699bb" stroke-width="1.3"/><rect x="9.7" y="3.7" width="4.6" height="4.6" fill="none" stroke="#6699bb" stroke-width="1.3"/><rect x="7.7" y="11.7" width="4.6" height="4.6" fill="none" stroke="#6699bb" stroke-width="1.3"/><rect x="16.7" y="17.7" width="4.6" height="4.6" fill="none" stroke="#6699bb" stroke-width="1.3"/></svg>
<svg style="left:148.1px;top:102px;overflow:visible" width="26" height="26" viewBox="0 0 26 26"><path d="M12,2 C18,5 15,12 8,14 C1,17 2,22 7,23" fill="none" stroke="#6699bb" stroke-width="1.7"/><path d="M8,22 L21,9 L24,12 L11,25 L7,26 Z" fill="#d4d4d4"/></svg>
<svg style="left:182.3px;top:102px;overflow:visible" width="26" height="26" viewBox="0 0 26 26"><path d="M4,18 C1,10 6,3 13,3 C17,3 20,5 21,6" fill="none" stroke="#6699bb" stroke-width="1.7" stroke-dasharray="4,2"/><rect x="1.75" y="2.25" width="4.5" height="4.5" fill="#222" stroke="#d4d4d4" stroke-width="1.3"/><rect x="18.25" y="3.75" width="4.5" height="4.5" fill="#222" stroke="#d4d4d4" stroke-width="1.3"/><rect x="2.75" y="18.75" width="4.5" height="4.5" fill="#222" stroke="#d4d4d4" stroke-width="1.3"/><circle cx="12.5" cy="13" r="2" fill="#d4d4d4"/></svg>
<svg style="left:216.5px;top:102px;overflow:visible" width="26" height="26" viewBox="0 0 26 26"><path d="M2,9 C5,3 8,1 11,8 C13,14 15,22 19,20 C21,19 22,17 23,15" fill="none" stroke="#6699bb" stroke-width="1.7"/><path d="M11,8 L13.5,17" stroke="#d4d4d4" stroke-width="2"/></svg>
<svg style="left:250.7px;top:102px;overflow:visible" width="26" height="26" viewBox="0 0 26 26"><path d="M2,9 C5,3 8,1 11,8 C13,14 15,22 19,20 C21,19 22,17 23,15" fill="none" stroke="#6699bb" stroke-width="1.7"/><path d="M2,23 L20,5 L23,8 L9,20 Z" fill="#d4d4d4"/></svg>
<svg style="left:284.9px;top:102px;overflow:visible" width="26" height="26" viewBox="0 0 26 26"><path d="M2,9 C5,3 8,1 11,8 C13,14 15,22 19,20 C21,19 22,17 23,15" fill="none" stroke="#6699bb" stroke-width="1.7"/><rect x="10.25" y="9.75" width="4.5" height="4.5" fill="#333" stroke="#d4d4d4" stroke-width="1.3"/></svg>
<svg style="left:319.1px;top:102px;overflow:visible" width="26" height="26" viewBox="0 0 26 26"><path d="M2,9 C5,3 8,1 11,8 C13,14 15,22 19,20 C21,19 22,17 23,15" fill="none" stroke="#6699bb" stroke-width="1.7"/><path d="M11,21 L21,11 M15,10 H22 V17" fill="none" stroke="#d4d4d4" stroke-width="2.6"/></svg>
<svg style="left:353.3px;top:102px;overflow:visible" width="26" height="26" viewBox="0 0 26 26"><path d="M4,22 A10,10 0 0 1 22,7" fill="none" stroke="#6699bb" stroke-width="1.7"/><path d="M8,20 A6,6 0 0 1 21,11" fill="none" stroke="#d4d4d4" stroke-width="1.7"/></svg>
<svg style="left:387.5px;top:102px;overflow:visible" width="26" height="26" viewBox="0 0 26 26"><path d="M4,4 C8,6 3,10 5,14 C6,18 3,19 5,21 M16,3 C19,7 16,11 12,12 C8,14 11,19 15,21" fill="none" stroke="#6699bb" stroke-width="1.5"/><rect x="3.0" y="1.0" width="4" height="4" fill="none" stroke="#6699bb" stroke-width="1.3"/><rect x="3.0" y="9.5" width="4" height="4" fill="none" stroke="#6699bb" stroke-width="1.3"/><rect x="3.0" y="19.0" width="4" height="4" fill="none" stroke="#6699bb" stroke-width="1.3"/><rect x="15.0" y="1.5" width="4" height="4" fill="#222" stroke="#d4d4d4" stroke-width="1.3"/><rect x="15.0" y="19.5" width="4" height="4" fill="#222" stroke="#d4d4d4" stroke-width="1.3"/></svg>
<svg style="left:421.7px;top:102px;overflow:visible" width="26" height="26" viewBox="0 0 26 26"><path d="M3,8 C8,3 10,8 12,12 C14,17 16,20 22,16" fill="none" stroke="#6699bb" stroke-width="1.5"/><rect x="1.0" y="5.5" width="4" height="4" fill="none" stroke="#6699bb" stroke-width="1.3"/><rect x="10.5" y="10.5" width="4" height="4" fill="none" stroke="#6699bb" stroke-width="1.3"/><rect x="20.0" y="13.5" width="4" height="4" fill="#222" stroke="#d4d4d4" stroke-width="1.3"/></svg>
<svg style="left:455.9px;top:102px;overflow:visible" width="26" height="26" viewBox="0 0 26 26"><path d="M6,4 C3,10 5,17 7,21 C10,20 15,19 20,20" fill="none" stroke="#6699bb" stroke-width="1.6"/><path d="M3,22 L21,5" stroke="#d4d4d4" stroke-width="1"/></svg>
<svg style="left:490.1px;top:102px;overflow:visible" width="26" height="26" viewBox="0 0 26 26"><path d="M2,8 C3,12 6,11 10,9 M16,12 C17,16 15,20 14,23" fill="none" stroke="#6699bb" stroke-width="1.6"/><circle cx="10.5" cy="3" r="1.8" fill="#aaa"/><path d="M11,4 L15,9 L21,18" stroke="#d4d4d4" stroke-width=".8" stroke-dasharray="1,1"/><rect x="14.0" y="8.0" width="4" height="4" fill="none" stroke="#6699bb" stroke-width="1.3"/><rect x="19.25" y="16.25" width="3.5" height="3.5" fill="#222" stroke="#d4d4d4" stroke-width="1.3"/></svg>
<svg style="left:524px;top:98px;overflow:visible" width="3" height="34" viewBox="0 0 3 34"><rect x="0.5" y="0" width="2" height="34" fill="#8a8a8a"/></svg>
<svg style="left:535.0px;top:102px;overflow:visible" width="26" height="26" viewBox="0 0 26 26"><circle cx="12" cy="12" r="11.5" fill="#5aa6d6"/><path d="M0.8,13 C5,19 19,19 23.2,13" fill="none" stroke="#2f4a5e" stroke-width="1.2"/></svg>
<svg style="left:569.2px;top:102px;overflow:visible" width="26" height="26" viewBox="0 0 26 26"><path d="M12,0.5 L23,5.5 V18 L12,23.5 L1,18 V5.5 Z" fill="#5aa6d6"/><path d="M1,5.5 L12,11 L23,5.5 M12,11 V23.5" fill="none" stroke="#2f4a5e" stroke-width="1.1"/></svg>
<svg style="left:603.4px;top:102px;overflow:visible" width="26" height="26" viewBox="0 0 26 26"><path d="M1,5 A11,4.5 0 0 1 23,5 V19 A11,4.5 0 0 1 1,19 Z" fill="#5aa6d6"/><path d="M1,5 A11,4.5 0 0 0 23,5" fill="none" stroke="#2f4a5e" stroke-width="1.1"/></svg>
<svg style="left:637.6px;top:102px;overflow:visible" width="26" height="26" viewBox="0 0 26 26"><path d="M12,1 L22,19 A10,4.5 0 0 1 2,19 Z" fill="#5aa6d6"/></svg>
<svg style="left:671.8px;top:102px;overflow:visible" width="26" height="26" viewBox="0 0 26 26"><path d="M12,0.5 L23.5,12 L12,23.5 L0.5,12 Z" fill="#5aa6d6"/></svg>
<svg style="left:706.0px;top:102px;overflow:visible" width="26" height="26" viewBox="0 0 26 26"><ellipse cx="12" cy="12" rx="10" ry="11.5" fill="#5aa6d6"/><ellipse cx="12" cy="12" rx="3" ry="6" fill="#444" stroke="#2f4a5e" transform="rotate(20 12 12)"/></svg>
<svg style="left:740.2px;top:102px;overflow:visible" width="26" height="26" viewBox="0 0 26 26"><path d="M3,3 A9,5 0 0 0 21,3 C21,10 15,12 13,13 V18 H11 V13 C9,12 3,10 3,3 Z" fill="#5aa6d6"/><ellipse cx="12" cy="4" rx="7" ry="3" fill="#333"/><path d="M2,20 C4,16 20,16 22,20 C20,24 6,24 4,22 L1,24 L2,19 Z" fill="#d4d4d4"/></svg>
<svg style="left:774.4px;top:102px;overflow:visible" width="26" height="26" viewBox="0 0 26 26"><path d="M2,23 C8,18 3,10 7,5 C8,3 10,1 13,1 C8,8 12,16 7,23 Z" fill="#5aa6d6"/><path d="M10,23 C16,18 11,10 15,5 C16,3 18,1 22,1 C17,8 21,16 15,23 Z" fill="#5aa6d6"/></svg>
<svg style="left:808.6px;top:102px;overflow:visible" width="26" height="26" viewBox="0 0 26 26"><path d="M12,0.5 L23.5,12 L12,23.5 L0.5,12 Z" fill="#5aa6d6"/><circle cx="12" cy="12" r="6" fill="#444" stroke="#2f4a5e"/></svg>
<svg style="left:842.8px;top:102px;overflow:visible" width="26" height="26" viewBox="0 0 26 26"><path d="M5,3 L19,12 A4.5,6 30 0 1 13,20 L0.5,9 A4,4 0 0 1 5,3 Z" fill="#5aa6d6"/><ellipse cx="4" cy="6" rx="3.6" ry="4" fill="#d4d4d4"/><circle cx="17" cy="16.5" r="6" fill="#333" stroke="#6699bb" stroke-width="1.2"/></svg>
<svg style="left:877.0px;top:102px;overflow:visible" width="26" height="26" viewBox="0 0 26 26"><path d="M2,13 C3,4 10,1 15,6 C18,9 21,10 24,11 C18,11 14,14 11,21 C8,17 5,14 2,13 Z" fill="#5aa6d6"/><path d="M7,8 C12,10 16,11 20,11" fill="none" stroke="#2f4a5e"/></svg>
<svg style="left:911.2px;top:102px;overflow:visible" width="26" height="26" viewBox="0 0 26 26"><path d="M12,0.5 L23,5.5 V18 L12,23.5 L1,18 V5.5 Z" fill="#5aa6d6"/><path d="M1.5,5.5 L12,11 L22.5,5.5 M12,11 V23.5" fill="none" stroke="#d4d4d4" stroke-width="2"/></svg>
<svg style="left:945.4px;top:102px;overflow:visible" width="26" height="26" viewBox="0 0 26 26"><rect x="1" y="6" width="17" height="17" fill="#5aa6d6"/><circle cx="16" cy="7" r="7" fill="none" stroke="#d4d4d4" stroke-width="1.2"/><circle cx="16" cy="7" r="5" fill="none" stroke="#d4d4d4" stroke-width="1"/><path d="M1,12 A12,12 0 0 1 13,23" fill="none" stroke="#2f4a5e"/></svg>
<svg style="left:979.6px;top:102px;overflow:visible" width="26" height="26" viewBox="0 0 26 26"><rect x="1" y="6" width="17" height="17" fill="#5aa6d6"/><circle cx="16" cy="7" r="7" fill="#5aa6d6"/><path d="M6,6 A11,11 0 0 0 17,17" fill="none" stroke="#d4d4d4" stroke-width="1.2"/></svg>
<svg style="left:1013.8px;top:102px;overflow:visible" width="26" height="26" viewBox="0 0 26 26"><rect x="1" y="6" width="17" height="17" fill="#5aa6d6"/><circle cx="16" cy="7" r="6.8" fill="#444" stroke="#d4d4d4" stroke-width="1.5" stroke-dasharray="2.2,1.5"/></svg>
<svg style="left:1048.0px;top:102px;overflow:visible" width="26" height="26" viewBox="0 0 26 26"><rect x="1" y="6" width="17" height="17" fill="#5aa6d6"/><path d="M9,1 A6.8,6.8 0 0 1 17,14 H9 Z" fill="#d4d4d4"/><circle cx="16" cy="7" r="6.8" fill="none" stroke="#d4d4d4" stroke-width="1.5" stroke-dasharray="2.2,1.5"/></svg>
<svg style="left:1082.2px;top:102px;overflow:visible" width="26" height="26" viewBox="0 0 26 26"><path d="M12,0.5 L23.5,12 L12,23.5 L0.5,12 Z" fill="#5aa6d6"/><path d="M4,17 L17,4 M7,20 L20,7" stroke="#d4d4d4" stroke-width="1.5"/></svg>
<svg style="left:1116.4px;top:102px;overflow:visible" width="26" height="26" viewBox="0 0 26 26"><path d="M10,0.5 L17,7.5 L7,17.5 L0,10.5 Z M17,10 L24,17 L19,23 L12,16 Z" fill="#5aa6d6"/></svg>
<svg style="left:1150.6px;top:102px;overflow:visible" width="26" height="26" viewBox="0 0 26 26"><path d="M14,2 A6,6 0 1 0 20,14 A5,5 0 0 1 14,2 Z" fill="#d4d4d4"/><circle cx="6" cy="17" r="5.5" fill="#5aa6d6"/><circle cx="12" cy="19" r="5" fill="#333" stroke="#6699bb" stroke-width="1.2"/></svg>
<svg style="left:1184.8px;top:102px;overflow:visible" width="26" height="26" viewBox="0 0 26 26"><path d="M0,12 L7,5 L12,10 L17,5 L24,12 L12,24 Z" fill="#5aa6d6"/><path d="M3,1 L9,7 M9,3 V7 H5" fill="none" stroke="#d4d4d4" stroke-width="2"/><path d="M6,10 L12,16 L18,10" fill="none" stroke="#444" stroke-width="1"/></svg>
<svg style="left:1219.0px;top:102px;overflow:visible" width="26" height="26" viewBox="0 0 26 26"><path d="M12,5 L23,13 L15,21 L5,13 Z" fill="#5aa6d6"/><path d="M5,13 L11,19 L7,23 L1,17 Z" fill="#d4d4d4"/><path d="M2,9 L8,3 M4,3 H8 V7" fill="none" stroke="#d4d4d4" stroke-width="2"/></svg>
<svg style="left:1253.2px;top:102px;overflow:visible" width="26" height="26" viewBox="0 0 26 26"><rect x="8" y="1" width="7" height="14" fill="#5aa6d6"/><rect x="15" y="1" width="7" height="14" fill="#5aa6d6"/><rect x="1" y="9" width="2.5" height="14" fill="#d4d4d4"/><rect x="5" y="12" width="2.5" height="11" fill="#d4d4d4"/><rect x="9" y="16" width="2.5" height="7" fill="#d4d4d4"/><rect x="13" y="16" width="2.5" height="7" fill="#d4d4d4"/></svg>
<svg style="left:1287.4px;top:102px;overflow:visible" width="26" height="26" viewBox="0 0 26 26"><path d="M4,8 C0,15 5,23 13,23 C18,23 21,20 22,17 C17,18 10,18 4,8 Z" fill="#5aa6d6"/><path d="M7,17 C10,14 13,12 22,2 L24,4 C16,13 13,16 11,19 L6,20 Z" fill="#d4d4d4"/></svg>
<svg style="left:1321.6px;top:102px;overflow:visible" width="26" height="26" viewBox="0 0 26 26"><path d="M9,1 L22,9 L14,23 L1,14 Z" fill="#5aa6d6"/><path d="M1,23 L22,2" stroke="#d4d4d4" stroke-width="1.2"/></svg>
<svg style="left:18px;top:87px;overflow:visible" width="11" height="8" viewBox="0 0 11 8"><path d="M0,1 H11 M0,3.5 H11 M0,6 H11" stroke="#d4d4d4" stroke-width="1.4"/></svg>
<svg style="left:16px;top:116px;overflow:visible" width="13" height="13" viewBox="0 0 13 13"><circle cx="6.5" cy="6.5" r="3.8" fill="none" stroke="#d4d4d4" stroke-width="2"/><path d="M6.5,0 V13 M0,6.5 H13 M2,2 L11,11 M11,2 L2,11" stroke="#d4d4d4" stroke-width="2" stroke-dasharray="2,7.5"/></svg>
<svg style="left:4px;top:47px;overflow:visible" width="4" height="20" viewBox="0 0 4 20"><rect x="0" y="0.0" width="1" height="1" fill="#777"/><rect x="2.5" y="0.0" width="1" height="1" fill="#777"/><rect x="0" y="2.5" width="1" height="1" fill="#777"/><rect x="2.5" y="2.5" width="1" height="1" fill="#777"/><rect x="0" y="5.0" width="1" height="1" fill="#777"/><rect x="2.5" y="5.0" width="1" height="1" fill="#777"/><rect x="0" y="7.5" width="1" height="1" fill="#777"/><rect x="2.5" y="7.5" width="1" height="1" fill="#777"/><rect x="0" y="10.0" width="1" height="1" fill="#777"/><rect x="2.5" y="10.0" width="1" height="1" fill="#777"/><rect x="0" y="12.5" width="1" height="1" fill="#777"/><rect x="2.5" y="12.5" width="1" height="1" fill="#777"/><rect x="0" y="15.0" width="1" height="1" fill="#777"/><rect x="2.5" y="15.0" width="1" height="1" fill="#777"/><rect x="0" y="17.5" width="1" height="1" fill="#777"/><rect x="2.5" y="17.5" width="1" height="1" fill="#777"/></svg>
<svg style="left:4px;top:75px;overflow:visible" width="4" height="61" viewBox="0 0 4 61"><rect x="0" y="0.0" width="1" height="1" fill="#777"/><rect x="2.5" y="0.0" width="1" height="1" fill="#777"/><rect x="0" y="2.5" width="1" height="1" fill="#777"/><rect x="2.5" y="2.5" width="1" height="1" fill="#777"/><rect x="0" y="5.0" width="1" height="1" fill="#777"/><rect x="2.5" y="5.0" width="1" height="1" fill="#777"/><rect x="0" y="7.5" width="1" height="1" fill="#777"/><rect x="2.5" y="7.5" width="1" height="1" fill="#777"/><rect x="0" y="10.0" width="1" height="1" fill="#777"/><rect x="2.5" y="10.0" width="1" height="1" fill="#777"/><rect x="0" y="12.5" width="1" height="1" fill="#777"/><rect x="2.5" y="12.5" width="1" height="1" fill="#777"/><rect x="0" y="15.0" width="1" height="1" fill="#777"/><rect x="2.5" y="15.0" width="1" height="1" fill="#777"/><rect x="0" y="17.5" width="1" height="1" fill="#777"/><rect x="2.5" y="17.5" width="1" height="1" fill="#777"/><rect x="0" y="20.0" width="1" height="1" fill="#777"/><rect x="2.5" y="20.0" width="1" height="1" fill="#777"/><rect x="0" y="22.5" width="1" height="1" fill="#777"/><rect x="2.5" y="22.5" width="1" height="1" fill="#777"/><rect x="0" y="25.0" width="1" height="1" fill="#777"/><rect x="2.5" y="25.0" width="1" height="1" fill="#777"/><rect x="0" y="27.5" width="1" height="1" fill="#777"/><rect x="2.5" y="27.5" width="1" height="1" fill="#777"/><rect x="0" y="30.0" width="1" height="1" fill="#777"/><rect x="2.5" y="30.0" width="1" height="1" fill="#777"/><rect x="0" y="32.5" width="1" height="1" fill="#777"/><rect x="2.5" y="32.5" width="1" height="1" fill="#777"/><rect x="0" y="35.0" width="1" height="1" fill="#777"/><rect x="2.5" y="35.0" width="1" height="1" fill="#777"/><rect x="0" y="37.5" width="1" height="1" fill="#777"/><rect x="2.5" y="37.5" width="1" height="1" fill="#777"/><rect x="0" y="40.0" width="1" height="1" fill="#777"/><rect x="2.5" y="40.0" width="1" height="1" fill="#777"/><rect x="0" y="42.5" width="1" height="1" fill="#777"/><rect x="2.5" y="42.5" width="1" height="1" fill="#777"/><rect x="0" y="45.0" width="1" height="1" fill="#777"/><rect x="2.5" y="45.0" width="1" height="1" fill="#777"/><rect x="0" y="47.5" width="1" height="1" fill="#777"/><rect x="2.5" y="47.5" width="1" height="1" fill="#777"/><rect x="0" y="50.0" width="1" height="1" fill="#777"/><rect x="2.5" y="50.0" width="1" height="1" fill="#777"/><rect x="0" y="52.5" width="1" height="1" fill="#777"/><rect x="2.5" y="52.5" width="1" height="1" fill="#777"/><rect x="0" y="55.0" width="1" height="1" fill="#777"/><rect x="2.5" y="55.0" width="1" height="1" fill="#777"/><rect x="0" y="57.5" width="1" height="1" fill="#777"/><rect x="2.5" y="57.5" width="1" height="1" fill="#777"/></svg>
<svg style="left:4px;top:879px;overflow:visible" width="4" height="28" viewBox="0 0 4 28"><rect x="0" y="0.0" width="1" height="1" fill="#777"/><rect x="2.5" y="0.0" width="1" height="1" fill="#777"/><rect x="0" y="2.5" width="1" height="1" fill="#777"/><rect x="2.5" y="2.5" width="1" height="1" fill="#777"/><rect x="0" y="5.0" width="1" height="1" fill="#777"/><rect x="2.5" y="5.0" width="1" height="1" fill="#777"/><rect x="0" y="7.5" width="1" height="1" fill="#777"/><rect x="2.5" y="7.5" width="1" height="1" fill="#777"/><rect x="0" y="10.0" width="1" height="1" fill="#777"/><rect x="2.5" y="10.0" width="1" height="1" fill="#777"/><rect x="0" y="12.5" width="1" height="1" fill="#777"/><rect x="2.5" y="12.5" width="1" height="1" fill="#777"/><rect x="0" y="15.0" width="1" height="1" fill="#777"/><rect x="2.5" y="15.0" width="1" height="1" fill="#777"/><rect x="0" y="17.5" width="1" height="1" fill="#777"/><rect x="2.5" y="17.5" width="1" height="1" fill="#777"/><rect x="0" y="20.0" width="1" height="1" fill="#777"/><rect x="2.5" y="20.0" width="1" height="1" fill="#777"/><rect x="0" y="22.5" width="1" height="1" fill="#777"/><rect x="2.5" y="22.5" width="1" height="1" fill="#777"/><rect x="0" y="25.0" width="1" height="1" fill="#777"/><rect x="2.5" y="25.0" width="1" height="1" fill="#777"/></svg>
<svg style="left:4px;top:915px;overflow:visible" width="4" height="25" viewBox="0 0 4 25"><rect x="0" y="0.0" width="1" height="1" fill="#777"/><rect x="2.5" y="0.0" width="1" height="1" fill="#777"/><rect x="0" y="2.5" width="1" height="1" fill="#777"/><rect x="2.5" y="2.5" width="1" height="1" fill="#777"/><rect x="0" y="5.0" width="1" height="1" fill="#777"/><rect x="2.5" y="5.0" width="1" height="1" fill="#777"/><rect x="0" y="7.5" width="1" height="1" fill="#777"/><rect x="2.5" y="7.5" width="1" height="1" fill="#777"/><rect x="0" y="10.0" width="1" height="1" fill="#777"/><rect x="2.5" y="10.0" width="1" height="1" fill="#777"/><rect x="0" y="12.5" width="1" height="1" fill="#777"/><rect x="2.5" y="12.5" width="1" height="1" fill="#777"/><rect x="0" y="15.0" width="1" height="1" fill="#777"/><rect x="2.5" y="15.0" width="1" height="1" fill="#777"/><rect x="0" y="17.5" width="1" height="1" fill="#777"/><rect x="2.5" y="17.5" width="1" height="1" fill="#777"/><rect x="0" y="20.0" width="1" height="1" fill="#777"/><rect x="2.5" y="20.0" width="1" height="1" fill="#777"/><rect x="0" y="22.5" width="1" height="1" fill="#777"/><rect x="2.5" y="22.5" width="1" height="1" fill="#777"/></svg>
<svg style="left:4px;top:947px;overflow:visible" width="4" height="25" viewBox="0 0 4 25"><rect x="0" y="0.0" width="1" height="1" fill="#777"/><rect x="2.5" y="0.0" width="1" height="1" fill="#777"/><rect x="0" y="2.5" width="1" height="1" fill="#777"/><rect x="2.5" y="2.5" width="1" height="1" fill="#777"/><rect x="0" y="5.0" width="1" height="1" fill="#777"/><rect x="2.5" y="5.0" width="1" height="1" fill="#777"/><rect x="0" y="7.5" width="1" height="1" fill="#777"/><rect x="2.5" y="7.5" width="1" height="1" fill="#777"/><rect x="0" y="10.0" width="1" height="1" fill="#777"/><rect x="2.5" y="10.0" width="1" height="1" fill="#777"/><rect x="0" y="12.5" width="1" height="1" fill="#777"/><rect x="2.5" y="12.5" width="1" height="1" fill="#777"/><rect x="0" y="15.0" width="1" height="1" fill="#777"/><rect x="2.5" y="15.0" width="1" height="1" fill="#777"/><rect x="0" y="17.5" width="1" height="1" fill="#777"/><rect x="2.5" y="17.5" width="1" height="1" fill="#777"/><rect x="0" y="20.0" width="1" height="1" fill="#777"/><rect x="2.5" y="20.0" width="1" height="1" fill="#777"/><rect x="0" y="22.5" width="1" height="1" fill="#777"/><rect x="2.5" y="22.5" width="1" height="1" fill="#777"/></svg>
<svg style="left:4px;top:979px;overflow:visible" width="4" height="19" viewBox="0 0 4 19"><rect x="0" y="0.0" width="1" height="1" fill="#777"/><rect x="2.5" y="0.0" width="1" height="1" fill="#777"/><rect x="0" y="2.5" width="1" height="1" fill="#777"/><rect x="2.5" y="2.5" width="1" height="1" fill="#777"/><rect x="0" y="5.0" width="1" height="1" fill="#777"/><rect x="2.5" y="5.0" width="1" height="1" fill="#777"/><rect x="0" y="7.5" width="1" height="1" fill="#777"/><rect x="2.5" y="7.5" width="1" height="1" fill="#777"/><rect x="0" y="10.0" width="1" height="1" fill="#777"/><rect x="2.5" y="10.0" width="1" height="1" fill="#777"/><rect x="0" y="12.5" width="1" height="1" fill="#777"/><rect x="2.5" y="12.5" width="1" height="1" fill="#777"/><rect x="0" y="15.0" width="1" height="1" fill="#777"/><rect x="2.5" y="15.0" width="1" height="1" fill="#777"/></svg>
<svg style="left:309px;top:163px;overflow:visible" width="6" height="18" viewBox="0 0 6 18"><rect x="2.3" y="0" width="1.4" height="18" fill="#6a6a6a"/><rect x="1.3" y="4.0" width="3.4" height="10" rx="1.7" fill="#777"/></svg>
<svg style="left:450px;top:163px;overflow:visible" width="6" height="18" viewBox="0 0 6 18"><rect x="2.3" y="0" width="1.4" height="18" fill="#6a6a6a"/><rect x="1.3" y="4.0" width="3.4" height="10" rx="1.7" fill="#777"/></svg>
<svg style="left:591px;top:163px;overflow:visible" width="6" height="18" viewBox="0 0 6 18"><rect x="2.3" y="0" width="1.4" height="18" fill="#6a6a6a"/><rect x="1.3" y="4.0" width="3.4" height="10" rx="1.7" fill="#777"/></svg>
<svg style="left:731px;top:163px;overflow:visible" width="6" height="18" viewBox="0 0 6 18"><rect x="2.3" y="0" width="1.4" height="18" fill="#6a6a6a"/><rect x="1.3" y="4.0" width="3.4" height="10" rx="1.7" fill="#777"/></svg>
<svg style="left:816px;top:163px;overflow:visible" width="6" height="18" viewBox="0 0 6 18"><rect x="2.3" y="0" width="1.4" height="18" fill="#6a6a6a"/><rect x="1.3" y="4.0" width="3.4" height="10" rx="1.7" fill="#777"/></svg>
<svg style="left:845px;top:163px;overflow:visible" width="6" height="18" viewBox="0 0 6 18"><rect x="2.3" y="0" width="1.4" height="18" fill="#6a6a6a"/><rect x="1.3" y="4.0" width="3.4" height="10" rx="1.7" fill="#777"/></svg>
<svg style="left:911.5px;top:163px;overflow:visible" width="6" height="18" viewBox="0 0 6 18"><rect x="2.3" y="0" width="1.4" height="18" fill="#6a6a6a"/><rect x="1.3" y="4.0" width="3.4" height="10" rx="1.7" fill="#777"/></svg>
<svg style="left:321px;top:167px;overflow:visible" width="15" height="10" viewBox="0 0 15 10"><rect x="0" y="1.5" width="9.5" height="7" fill="#d4d4d4"/><path d="M10,5 L14.5,1 V9 Z" fill="#d4d4d4"/></svg>
<svg style="left:339px;top:164px;overflow:visible" width="15" height="16" viewBox="0 0 15 16"><rect x="0" y="2" width="9.5" height="6" fill="#d4d4d4"/><path d="M10,5 L14.5,1 V9 Z" fill="#d4d4d4"/><rect x="1" y="10" width="7" height="6" fill="#4fb3c0"/><path d="M2.5,10 V7.5 A2,2 0 0 1 6.5,7.5 V10" fill="none" stroke="#4fb3c0" stroke-width="1.3"/></svg>
<svg style="left:358px;top:164px;overflow:visible" width="15" height="16" viewBox="0 0 15 16"><rect x="0" y="2" width="9.5" height="6" fill="#d4d4d4"/><path d="M10,5 L14.5,1 V9 Z" fill="#d4d4d4"/><circle cx="5" cy="11.5" r="3.6" fill="none" stroke="#4fb3c0" stroke-width="2.2" stroke-dasharray="1.6,1"/></svg>
<svg style="left:380px;top:165px;overflow:visible" width="8" height="14" viewBox="0 0 8 14"><path d="M0.5,0.5 H7 V13 L3.75,10 L0.5,13 Z" fill="#d4d4d4"/></svg>
<svg style="left:395px;top:164px;overflow:visible" width="14" height="16" viewBox="0 0 14 16"><path d="M1,14 L6,5 L12,1 L10,12 Z" fill="#4fb3c0"/><path d="M0,15 L12,15 M1,14 L13,11" stroke="#d4d4d4" stroke-width="1.2"/></svg>
<svg style="left:413px;top:164px;overflow:visible" width="15" height="16" viewBox="0 0 15 16"><circle cx="9.5" cy="9" r="3.8" fill="none" stroke="#4fb3c0" stroke-width="1.6"/><path d="M7,12 L3,16" stroke="#4fb3c0" stroke-width="2"/><path d="M0,6 H8 M4,2 V10" stroke="#d4d4d4" stroke-width="1.2"/><path d="M0,6 L2,4 M0,6 L2,8" stroke="#d4d4d4"/></svg>
<svg style="left:433px;top:164px;overflow:visible" width="13" height="16" viewBox="0 0 13 16"><path d="M1,12 L10,2 L12,4 L3,14 Z" fill="#d4d4d4"/><path d="M5,14 C8,16 12,15 11,12" fill="none" stroke="#d4d4d4" stroke-width="1"/><circle cx="2" cy="14" r="1.5" fill="#4fb3c0"/></svg>
<svg style="left:459px;top:163px;overflow:visible" width="18" height="18" viewBox="0 0 18 18"><rect width="18" height="18" fill="#5585ab"/><rect x="2.5" y="2.5" width="13" height="13" fill="#333" stroke="#d4d4d4" stroke-width="1"/><rect x="4" y="4" width="2" height="2" fill="#d4d4d4"/><rect x="4" y="7" width="2" height="2" fill="#d4d4d4"/><rect x="4" y="10" width="2" height="2" fill="#d4d4d4"/><rect x="4" y="13" width="2" height="2" fill="#d4d4d4"/><rect x="7" y="4" width="2" height="2" fill="#d4d4d4"/><rect x="7" y="7" width="2" height="2" fill="#d4d4d4"/><rect x="7" y="10" width="2" height="2" fill="#d4d4d4"/><rect x="7" y="13" width="2" height="2" fill="#d4d4d4"/><rect x="10" y="4" width="2" height="2" fill="#d4d4d4"/><rect x="10" y="7" width="2" height="2" fill="#d4d4d4"/><rect x="10" y="10" width="2" height="2" fill="#d4d4d4"/><rect x="10" y="13" width="2" height="2" fill="#d4d4d4"/><rect x="13" y="4" width="2" height="2" fill="#d4d4d4"/><rect x="13" y="7" width="2" height="2" fill="#d4d4d4"/><rect x="13" y="10" width="2" height="2" fill="#d4d4d4"/><rect x="13" y="13" width="2" height="2" fill="#d4d4d4"/></svg>
<svg style="left:480px;top:165px;overflow:visible" width="14" height="14" viewBox="0 0 14 14"><rect x="0.5" y="0.5" width="13" height="13" fill="none" stroke="#d4d4d4"/><rect x="1.5" y="4" width="11" height="6" fill="#333"/></svg>
<svg style="left:499px;top:165px;overflow:visible" width="14" height="14" viewBox="0 0 14 14"><rect x="0.6" y="0.6" width="12.8" height="12.8" fill="#333" stroke="#d4d4d4" stroke-width="1.2"/><circle cx="7" cy="7" r="3.6" fill="#4fb3c0"/></svg>
<svg style="left:517px;top:163px;overflow:visible" width="15" height="18" viewBox="0 0 15 18"><rect width="15" height="18" fill="#3c3c3c"/><circle cx="7.5" cy="9" r="3.6" fill="#555"/></svg>
<svg style="left:535px;top:165px;overflow:visible" width="14" height="14" viewBox="0 0 14 14"><rect x="0.6" y="0.6" width="12.8" height="12.8" fill="#333" stroke="#d4d4d4" stroke-width="1.2"/><rect x="3" y="4" width="8" height="6" fill="none" stroke="#4fb3c0" stroke-width="1.3"/></svg>
<svg style="left:554px;top:165px;overflow:visible" width="14" height="14" viewBox="0 0 14 14"><rect x="0.6" y="0.6" width="12.8" height="12.8" fill="#333" stroke="#d4d4d4" stroke-width="1.2"/><path d="M3,11 L6,6 L9,11 Z" fill="#4fb3c0"/><circle cx="9" cy="5" r="2" fill="#4fb3c0"/></svg>
<svg style="left:572px;top:165px;overflow:visible" width="14" height="14" viewBox="0 0 14 14"><rect x="0.6" y="0.6" width="12.8" height="12.8" fill="#333" stroke="#d4d4d4" stroke-width="1.2"/><path d="M4,4 H10 M7,4 V11" stroke="#4fb3c0" stroke-width="1.5"/></svg>
<svg style="left:601px;top:164px;overflow:visible" width="15" height="16" viewBox="0 0 15 16"><path d="M7.5,0.7 L14.3,4 V12 L7.5,15.3 L0.7,12 V4 Z M0.7,4 L7.5,7.5 L14.3,4 M7.5,7.5 V15.3" fill="none" stroke="#d4d4d4" stroke-width="1"/></svg>
<svg style="left:619px;top:163px;overflow:visible" width="18" height="18" viewBox="0 0 18 18"><rect width="18" height="18" fill="#5585ab"/><path d="M9,1.5 L16,5 V13 L9,16.5 L2,13 V5 Z" fill="#5fd0e0"/><path d="M2,5 L9,8.5 L16,5 M9,8.5 V16.5" fill="none" stroke="#264" stroke-width=".8"/></svg>
<svg style="left:639px;top:165px;overflow:visible" width="14" height="14" viewBox="0 0 14 14"><circle cx="7" cy="7" r="6.5" fill="#d4d4d4"/><path d="M7,0.5 A6.5,6.5 0 0 1 7,13.5 Z" fill="#333"/><rect x="7" y="1" width="1" height="1" fill="#d4d4d4"/><rect x="7" y="3" width="1" height="1" fill="#d4d4d4"/><rect x="7" y="5" width="1" height="1" fill="#d4d4d4"/><rect x="7" y="7" width="1" height="1" fill="#d4d4d4"/><rect x="7" y="9" width="1" height="1" fill="#d4d4d4"/><rect x="7" y="11" width="1" height="1" fill="#d4d4d4"/><rect x="9" y="2" width="1" height="1" fill="#d4d4d4"/><rect x="9" y="4" width="1" height="1" fill="#d4d4d4"/><rect x="9" y="6" width="1" height="1" fill="#d4d4d4"/><rect x="9" y="8" width="1" height="1" fill="#d4d4d4"/><rect x="9" y="10" width="1" height="1" fill="#d4d4d4"/><rect x="9" y="12" width="1" height="1" fill="#d4d4d4"/><rect x="11" y="1" width="1" height="1" fill="#d4d4d4"/><rect x="11" y="3" width="1" height="1" fill="#d4d4d4"/><rect x="11" y="5" width="1" height="1" fill="#d4d4d4"/><rect x="11" y="7" width="1" height="1" fill="#d4d4d4"/><rect x="11" y="9" width="1" height="1" fill="#d4d4d4"/><rect x="11" y="11" width="1" height="1" fill="#d4d4d4"/></svg>
<svg style="left:657px;top:164px;overflow:visible" width="15" height="16" viewBox="0 0 15 16"><path d="M7.5,0.7 L14.3,4 V12 L7.5,15.3 L0.7,12 V4 Z M0.7,4 L7.5,7.5 L14.3,4 M7.5,7.5 V15.3" fill="none" stroke="#8fd0dc" stroke-width="1.2"/></svg>
<svg style="left:677px;top:165px;overflow:visible" width="14" height="14" viewBox="0 0 14 14"><circle cx="7" cy="7" r="6.5" fill="#333"/><rect x="1" y="3" width="1.6" height="1.6" fill="#d4d4d4"/><rect x="1" y="5" width="1.6" height="1.6" fill="#d4d4d4"/><rect x="1" y="7" width="1.6" height="1.6" fill="#d4d4d4"/><rect x="1" y="9" width="1.6" height="1.6" fill="#d4d4d4"/><rect x="3" y="2" width="1.6" height="1.6" fill="#d4d4d4"/><rect x="3" y="4" width="1.6" height="1.6" fill="#d4d4d4"/><rect x="3" y="6" width="1.6" height="1.6" fill="#d4d4d4"/><rect x="3" y="8" width="1.6" height="1.6" fill="#d4d4d4"/><rect x="3" y="10" width="1.6" height="1.6" fill="#d4d4d4"/><rect x="3" y="12" width="1.6" height="1.6" fill="#d4d4d4"/><rect x="5" y="1" width="1.6" height="1.6" fill="#d4d4d4"/><rect x="5" y="3" width="1.6" height="1.6" fill="#d4d4d4"/><rect x="5" y="5" width="1.6" height="1.6" fill="#d4d4d4"/><rect x="5" y="7" width="1.6" height="1.6" fill="#d4d4d4"/><rect x="5" y="9" width="1.6" height="1.6" fill="#d4d4d4"/><rect x="5" y="11" width="1.6" height="1.6" fill="#d4d4d4"/><rect x="7" y="2" width="1.6" height="1.6" fill="#d4d4d4"/><rect x="7" y="4" width="1.6" height="1.6" fill="#d4d4d4"/><rect x="7" y="6" width="1.6" height="1.6" fill="#d4d4d4"/><rect x="7" y="8" width="1.6" height="1.6" fill="#d4d4d4"/><rect x="7" y="10" width="1.6" height="1.6" fill="#d4d4d4"/><rect x="7" y="12" width="1.6" height="1.6" fill="#d4d4d4"/><rect x="9" y="1" width="1.6" height="1.6" fill="#d4d4d4"/><rect x="9" y="3" width="1.6" height="1.6" fill="#d4d4d4"/><rect x="9" y="5" width="1.6" height="1.6" fill="#d4d4d4"/><rect x="9" y="7" width="1.6" height="1.6" fill="#d4d4d4"/><rect x="9" y="9" width="1.6" height="1.6" fill="#d4d4d4"/><rect x="9" y="11" width="1.6" height="1.6" fill="#d4d4d4"/><rect x="11" y="4" width="1.6" height="1.6" fill="#d4d4d4"/><rect x="11" y="6" width="1.6" height="1.6" fill="#d4d4d4"/><rect x="11" y="8" width="1.6" height="1.6" fill="#d4d4d4"/><rect x="11" y="10" width="1.6" height="1.6" fill="#d4d4d4"/></svg>
<svg style="left:695px;top:164px;overflow:visible" width="13" height="16" viewBox="0 0 13 16"><circle cx="6.5" cy="6.5" r="3.5" fill="#d4d4d4"/><rect x="5" y="10" width="3" height="4" fill="#d4d4d4"/><path d="M6.5,0 V1.5 M1,6.5 H2.5 M10.5,6.5 H12 M2.5,2.5 L3.5,3.5 M10.5,2.5 L9.5,3.5" stroke="#d4d4d4"/></svg>
<svg style="left:713px;top:165px;overflow:visible" width="15" height="14" viewBox="0 0 15 14"><circle cx="9.5" cy="6" r="5" fill="#4fb3c0"/><path d="M0,12 L5,9" stroke="#aaa" stroke-width="2" stroke-dasharray="1,1"/></svg>
<svg style="left:744px;top:164px;overflow:visible" width="13" height="16" viewBox="0 0 13 16"><circle cx="6.5" cy="6" r="5" fill="#d4d4d4"/><path d="M0,12 L6.5,15 L13,12" fill="none" stroke="#4fb3c0" stroke-width="1.6"/></svg>
<svg style="left:761px;top:164px;overflow:visible" width="15" height="16" viewBox="0 0 15 16"><circle cx="4.5" cy="10" r="4" fill="#6a6a6a"/><circle cx="9" cy="6" r="5" fill="#d4d4d4"/></svg>
<svg style="left:780px;top:165px;overflow:visible" width="14" height="14" viewBox="0 0 14 14"><path d="M7,0.5 A6.5,6.5 0 0 0 7,13.5" fill="none" stroke="#4fb3c0" stroke-width="2"/><path d="M7,0.5 A6.5,6.5 0 0 1 7,13.5" fill="none" stroke="#d4d4d4" stroke-width="2" stroke-dasharray="1.5,1.5"/></svg>
<svg style="left:797px;top:163px;overflow:visible" width="17" height="18" viewBox="0 0 17 18"><rect width="17" height="18" fill="#3b3b3b"/><rect x="4" y="5" width="9" height="9" fill="#4a5a62"/></svg>
<svg style="left:828px;top:164px;overflow:visible" width="13" height="16" viewBox="0 0 13 16"><path d="M0.5,0.5 H8 M0.5,0.5 V8 M0.5,8 H4" stroke="#4fb3c0" stroke-dasharray="1.5,1"/><path d="M5,4 V15 L7.5,12.5 L10,16 L11.5,15 L9,11.5 H12.5 Z" fill="#d4d4d4"/></svg>
<svg style="left:857px;top:165px;overflow:visible" width="13" height="14" viewBox="0 0 13 14"><rect x="4" y="1" width="8" height="8" fill="none" stroke="#d4d4d4" stroke-width="1.6"/><rect x="1" y="5" width="8" height="8" fill="#d4d4d4"/></svg>
<svg style="left:876px;top:165px;overflow:visible" width="14" height="14" viewBox="0 0 14 14"><rect x="1" y="5" width="8" height="8" fill="#d4d4d4"/><rect x="5" y="1" width="8" height="8" fill="#333" stroke="#d4d4d4" stroke-width="1.4"/><rect x="7.5" y="3.5" width="3" height="3" fill="#d4d4d4"/></svg>
<svg style="left:900px;top:165px;overflow:visible" width="13" height="14" viewBox="0 0 13 14"><rect x="0.6" y="0.6" width="11.8" height="12.8" fill="#333" stroke="#d4d4d4" stroke-width="1.2"/><path d="M3,3 L10,10" stroke="#d4d4d4" stroke-width="1.6"/><circle cx="4" cy="4" r="1.6" fill="#d4d4d4"/></svg>
<svg style="left:925px;top:165px;overflow:visible" width="13" height="14" viewBox="0 0 13 14"><circle cx="6.5" cy="7" r="6" fill="#d4d4d4"/><circle cx="6.5" cy="7" r="2.8" fill="#444"/><path d="M6.5,1 L8,5 M12,5 L8.5,7 M10,12 L7,9 M2,11 L5,8.5 M1,4 L5,5.5" stroke="#444" stroke-width="1.1"/></svg>
<svg style="left:943px;top:164px;overflow:visible" width="34" height="13" viewBox="0 0 34 13"><rect width="34" height="13" rx="1" fill="#2e2e2e"/><text x="4.5" y="11" font-size="11.3" font-family="Liberation Sans" fill="#e8e8e8">0.00</text></svg>
<svg style="left:984px;top:165px;overflow:visible" width="12" height="14" viewBox="0 0 12 14"><path d="M6,1 H11.5 V13 H6 A6,6 0 0 1 6,1 Z" fill="#d4d4d4"/><path d="M6,2.5 A4.5,4.5 0 0 0 6,11.5 Z" fill="#444"/></svg>
<svg style="left:1002px;top:164px;overflow:visible" width="34" height="13" viewBox="0 0 34 13"><rect width="34" height="13" rx="1" fill="#2e2e2e"/><text x="4.5" y="11" font-size="11.3" font-family="Liberation Sans" fill="#e8e8e8">1.00</text></svg>
<svg style="left:1041px;top:163px;overflow:visible" width="17" height="18" viewBox="0 0 17 18"><rect width="17" height="18" fill="#5585ab"/><circle cx="8.5" cy="9" r="6.8" fill="#4fb3c0" stroke="#1d4a55" stroke-width="1"/><text x="3.8" y="11" font-size="5.5" font-family="Liberation Sans" font-weight="700" fill="#1d4a55">ON</text></svg>
<svg style="left:5px;top:143px;overflow:visible" width="34" height="4" viewBox="0 0 34 4"><rect x="0.0" y="0" width="1" height="1" fill="#777"/><rect x="0.0" y="2.5" width="1" height="1" fill="#777"/><rect x="2.5" y="0" width="1" height="1" fill="#777"/><rect x="2.5" y="2.5" width="1" height="1" fill="#777"/><rect x="5.0" y="0" width="1" height="1" fill="#777"/><rect x="5.0" y="2.5" width="1" height="1" fill="#777"/><rect x="7.5" y="0" width="1" height="1" fill="#777"/><rect x="7.5" y="2.5" width="1" height="1" fill="#777"/><rect x="10.0" y="0" width="1" height="1" fill="#777"/><rect x="10.0" y="2.5" width="1" height="1" fill="#777"/><rect x="12.5" y="0" width="1" height="1" fill="#777"/><rect x="12.5" y="2.5" width="1" height="1" fill="#777"/><rect x="15.0" y="0" width="1" height="1" fill="#777"/><rect x="15.0" y="2.5" width="1" height="1" fill="#777"/><rect x="17.5" y="0" width="1" height="1" fill="#777"/><rect x="17.5" y="2.5" width="1" height="1" fill="#777"/><rect x="20.0" y="0" width="1" height="1" fill="#777"/><rect x="20.0" y="2.5" width="1" height="1" fill="#777"/><rect x="22.5" y="0" width="1" height="1" fill="#777"/><rect x="22.5" y="2.5" width="1" height="1" fill="#777"/><rect x="25.0" y="0" width="1" height="1" fill="#777"/><rect x="25.0" y="2.5" width="1" height="1" fill="#777"/><rect x="27.5" y="0" width="1" height="1" fill="#777"/><rect x="27.5" y="2.5" width="1" height="1" fill="#777"/><rect x="30.0" y="0" width="1" height="1" fill="#777"/><rect x="30.0" y="2.5" width="1" height="1" fill="#777"/><rect x="32.5" y="0" width="1" height="1" fill="#777"/><rect x="32.5" y="2.5" width="1" height="1" fill="#777"/></svg>
<svg style="left:14px;top:157px;overflow:visible" width="17" height="23" viewBox="0 0 17 23"><path d="M1,1 V19 L5.5,14.5 L9.5,22 L12.5,20.5 L8.5,13.5 H15 Z" fill="#d4d4d4"/></svg>
<svg style="left:7px;top:193px;overflow:visible" width="28" height="26" viewBox="0 0 28 26"><ellipse cx="10" cy="10" rx="8.5" ry="6" transform="rotate(-30 10 10)" fill="none" stroke="#4fb3c0" stroke-width="2" stroke-dasharray="3,1.8"/><path d="M13,8 V22 L16,18.5 L19,24 L21.5,23 L18.5,17.5 H23 Z" fill="#d4d4d4"/></svg>
<svg style="left:7px;top:228px;overflow:visible" width="28" height="26" viewBox="0 0 28 26"><ellipse cx="10" cy="15" rx="8" ry="6.5" transform="rotate(30 10 15)" fill="none" stroke="#4fb3c0" stroke-width="2" stroke-dasharray="3,1.8"/><path d="M10,16 C12,12 16,12 17,13 L25,3 L26.5,4.5 L19,14.5 C18,17 13,19 10,16 Z" fill="#d4d4d4"/></svg>
<svg style="left:6px;top:263px;overflow:visible" width="30" height="30" viewBox="0 0 30 30"><rect x="9.5" y="9.5" width="11" height="11" fill="#d4d4d4"/><path d="M15,2 L19,6 H11 Z M15,28 L11,24 H19 Z M2,15 L6,11 V19 Z M28,15 L24,19 V11 Z" fill="none" stroke="#4fb3c0" stroke-width="1.3"/></svg>
<svg style="left:6px;top:299px;overflow:visible" width="30" height="30" viewBox="0 0 30 30"><path d="M15,3 A12,12 0 1 0 27,15" fill="none" stroke="#4fb3c0" stroke-width="1.8" transform="rotate(-50 15 15)"/><path d="M15,7.5 L22.5,15 L15,22.5 L7.5,15 Z" fill="#d4d4d4"/><path d="M24,14 L29,15 L25,19 Z" fill="#4fb3c0"/></svg>
<svg style="left:6px;top:335px;overflow:visible" width="30" height="30" viewBox="0 0 30 30"><rect x="8" y="5" width="17" height="17" fill="none" stroke="#4fb3c0" stroke-width="1.8" stroke-dasharray="2.2,1.5"/><rect x="3" y="13" width="11" height="11" fill="#d4d4d4"/><path d="M12,11 L17,11 V16" fill="none" stroke="#4fb3c0" stroke-width="1.5"/></svg>
<svg style="left:8px;top:408px;overflow:visible" width="26" height="25" viewBox="0 0 26 25"><path d="M3,3 H10 L12,7 L11,14 L18,18" fill="none" stroke="#6699bb" stroke-width="1"/><rect x="1.25" y="1.25" width="3.5" height="3.5" fill="none" stroke="#6699bb" stroke-width="1.3"/><rect x="10.25" y="5.25" width="3.5" height="3.5" fill="none" stroke="#6699bb" stroke-width="1.3"/><rect x="9.25" y="12.25" width="3.5" height="3.5" fill="none" stroke="#6699bb" stroke-width="1.3"/><rect x="17.25" y="16.25" width="3.5" height="3.5" fill="none" stroke="#6699bb" stroke-width="1.3"/></svg>
<svg style="left:4px;top:445px;overflow:visible" width="36" height="2" viewBox="0 0 36 2"><rect width="36" height="2" fill="#8a8a8a"/></svg>
<svg style="left:7px;top:454px;overflow:visible" width="28" height="28" viewBox="0 0 28 28"><rect x="0.8" y="0.8" width="26.4" height="26.4" fill="#cfcfcf" stroke="#777"/><rect x="2.5" y="2.5" width="23" height="23" fill="none" stroke="#555" stroke-width=".6"/><path d="M14,8 L17,11 L14,14 L11,11 Z M10,11.5 L13,14.5 L10,17.5 L7,14.5 Z M18,11.5 L21,14.5 L18,17.5 L15,14.5 Z M14,15 L17,18 L14,21 L11,18 Z" fill="#333"/></svg>
<svg style="left:7px;top:491px;overflow:visible" width="27" height="27" viewBox="0 0 27 27"><rect x="0.6" y="0.6" width="12" height="12" fill="#333" stroke="#d4d4d4" stroke-width="1.1"/><path d="M3.5,6.6 H9.7 M6.6,3.5 V9.7" stroke="#d4d4d4" stroke-width="1.3"/><rect x="14" y="0" width="13" height="13" fill="#d4d4d4"/><path d="M20.5,4 L23.5,6.5 L20.5,9 L17.5,6.5 Z" fill="#333"/><rect x="0.6" y="14.6" width="12" height="12" fill="#333" stroke="#d4d4d4" stroke-width="1.1"/><path d="M3.5,20.6 H9.7 M6.6,17.5 V23.7" stroke="#d4d4d4" stroke-width="1.3"/><rect x="14.6" y="14.6" width="12" height="12" fill="#333" stroke="#d4d4d4" stroke-width="1.1"/><path d="M17.5,20.6 H23.7 M20.6,17.5 V23.7" stroke="#d4d4d4" stroke-width="1.3"/></svg>
<svg style="left:7px;top:527px;overflow:visible" width="27" height="28" viewBox="0 0 27 28"><rect x="0.6" y="0.6" width="12" height="26.8" fill="#333" stroke="#d4d4d4" stroke-width="1.1"/><path d="M3,14 H10 M6.6,10.5 V17.5" stroke="#d4d4d4" stroke-width="1.3"/><rect x="14" y="0" width="13" height="28" fill="#d4d4d4"/><path d="M20.5,11 L23.5,14 L20.5,17 L17.5,14 Z" fill="#333"/></svg>
<svg style="left:4px;top:562px;overflow:visible" width="35" height="33" viewBox="0 0 35 33"><rect width="35" height="33" fill="#5585ab"/><rect x="4" y="4" width="27" height="25" fill="none" stroke="#d4d4d4" stroke-width="1.2"/><rect x="5.5" y="5.5" width="24" height="22" fill="#5585ab" stroke="#333" stroke-width=".6"/><path d="M9,9 V24 M9,13 H14 M9,18 H14 M9,23 H14" stroke="#d4d4d4" stroke-width="1"/><rect x="7" y="7" width="4" height="4" fill="#d4d4d4"/><rect x="13" y="11.5" width="3.5" height="3" fill="#d4d4d4"/><rect x="13" y="16.5" width="3.5" height="3" fill="#d4d4d4"/><rect x="13" y="21.5" width="3.5" height="3" fill="#d4d4d4"/><path d="M16.5,13 H26 M16.5,18 H26 M16.5,23 H26" stroke="#d4d4d4" stroke-width="1.5"/></svg>
<svg style="left:5px;top:834px;overflow:visible" width="33" height="32" viewBox="0 0 33 32"><defs><linearGradient id="mg" x1="0" y1="0" x2="1" y2="1"><stop offset="0" stop-color="#8fdde6"/><stop offset="1" stop-color="#1f8a96"/></linearGradient></defs><path d="M1,2 H9.5 L16.5,16 L23.5,2 H32 V31 H25 V14 L19,26 H14 L8,14 V31 H1 Z" fill="url(#mg)"/><path d="M1,2 L8,14 V31 H1 Z" fill="#2a95a2" opacity=".7"/><path d="M32,2 L25,14 V31 H32 Z" fill="#5cc4cf" opacity=".6"/></svg>
<svg style="left:53px;top:184px;overflow:visible" width="15" height="16" viewBox="0 0 15 16"><path d="M1,1 L5,3.5 L1,6 Z M14,1 L10,3.5 L14,6 Z M1,10 L5,12.5 L1,15 Z M14,10 L10,12.5 L14,15 Z" fill="#6a6a6a"/><path d="M2,5 V11 M13,5 V11 M5,1.5 H10 M5,14.5 H10" stroke="#6a6a6a" stroke-dasharray="1.5,1.5"/></svg>
<svg style="left:83px;top:208.5px;overflow:visible" width="16" height="9" viewBox="0 0 16 9"><rect x="0" y="1.5" width="9.5" height="6.5" fill="#cfcfcf"/><path d="M10,4.75 L15,1 V8.5 Z" fill="#cfcfcf"/></svg>
<svg style="left:83px;top:228.0px;overflow:visible" width="16" height="9" viewBox="0 0 16 9"><rect x="0" y="1.5" width="9.5" height="6.5" fill="#cfcfcf"/><path d="M10,4.75 L15,1 V8.5 Z" fill="#cfcfcf"/></svg>
<svg style="left:83px;top:247.5px;overflow:visible" width="16" height="9" viewBox="0 0 16 9"><rect x="0" y="1.5" width="9.5" height="6.5" fill="#cfcfcf"/><path d="M10,4.75 L15,1 V8.5 Z" fill="#cfcfcf"/></svg>
<svg style="left:83px;top:267.0px;overflow:visible" width="16" height="9" viewBox="0 0 16 9"><rect x="0" y="1.5" width="9.5" height="6.5" fill="#cfcfcf"/><path d="M10,4.75 L15,1 V8.5 Z" fill="#cfcfcf"/></svg>
<svg style="left:82px;top:284px;overflow:visible" width="18" height="14" viewBox="0 0 18 14"><path d="M9,0.5 L12.5,3.5 L9,6.5 L5.5,3.5 Z M4,4 L7.5,7 L4,10 L0.5,7 Z M14,4 L17.5,7 L14,10 L10.5,7 Z M9,7.5 L12.5,10.5 L9,13.5 L5.5,10.5 Z" fill="#d8d8d8"/></svg>
<svg style="left:84px;top:301px;overflow:visible" width="14" height="20" viewBox="0 0 14 20"><path d="M10,1 C3,3 13,8 6,11 C0,14 9,17 4,19" fill="none" stroke="#cfcfcf" stroke-width="1" /><path d="M12,1.5 C5,3.5 15,8.5 8,11.5 C2,14.5 11,17.5 6,19.5" fill="none" stroke="#2c4a60" stroke-width="1"/></svg>
<svg style="left:82px;top:322px;overflow:visible" width="17" height="17" viewBox="0 0 17 17"><circle cx="8.5" cy="8.5" r="7.6" fill="#333" stroke="#d8d8d8" stroke-width="1.4"/><circle cx="10.5" cy="7" r="3.6" fill="#4fb3c0"/><circle cx="6.5" cy="10.5" r="3" fill="#d8d8d8"/></svg>
<svg style="left:82px;top:341.5px;overflow:visible" width="17" height="17" viewBox="0 0 17 17"><circle cx="8.5" cy="8.5" r="7.6" fill="#333" stroke="#d8d8d8" stroke-width="1.4"/><circle cx="10.5" cy="7" r="3.6" fill="#4fb3c0"/><circle cx="6.5" cy="10.5" r="3" fill="#d8d8d8"/></svg>
<svg style="left:283px;top:190px;overflow:visible" width="10" height="6" viewBox="0 0 10 6"><path d="M0,0 H10 L5,6 Z" fill="#d0d0d0"/></svg>
<svg style="left:288px;top:206px;overflow:visible" width="10" height="6" viewBox="0 0 10 6"><path d="M0,6 H10 L5,0 Z" fill="#cfcfcf"/></svg>
<svg style="left:288px;top:822px;overflow:visible" width="10" height="6" viewBox="0 0 10 6"><path d="M0,0 H10 L5,6 Z" fill="#cfcfcf"/></svg>
<svg style="left:52px;top:834px;overflow:visible" width="6" height="10" viewBox="0 0 6 10"><path d="M6,0 V10 L0,5 Z" fill="#cfcfcf"/></svg>
<svg style="left:277px;top:834px;overflow:visible" width="6" height="10" viewBox="0 0 6 10"><path d="M0,0 V10 L6,5 Z" fill="#cfcfcf"/></svg>
<svg style="left:1518px;top:145px;overflow:visible" width="15" height="15" viewBox="0 0 15 15"><path d="M7.5,0 L10,4 H5 Z" fill="#6cc04a"/><path d="M0,14 L2,9 L6,13 Z" fill="#4a6ad0"/><path d="M15,14 L9,13 L13,9 Z" fill="#d04a4a"/><path d="M7.5,4 V10 L3,12 M7.5,10 L12,12" stroke="#ddd" stroke-width="1.2" fill="none"/></svg>
<svg style="left:1540px;top:145px;overflow:visible" width="14" height="14" viewBox="0 0 14 14"><path d="M2,12 A6.5,6.5 0 1 1 12,12" fill="none" stroke="#4fb3c0" stroke-width="3.2"/><circle cx="7" cy="8" r="1.5" fill="#ddd"/><path d="M9,11 L12,12" stroke="#888" stroke-width="2"/></svg>
<svg style="left:1560px;top:145px;overflow:visible" width="14" height="14" viewBox="0 0 14 14"><path d="M1,1 V13 H13" fill="none" stroke="#aaa" stroke-width="1"/><path d="M3,11 L12,2 M8,2 H12 V6" fill="none" stroke="#4fb3c0" stroke-width="1.6"/></svg>
<svg style="left:1480px;top:707px;overflow:visible" width="14" height="12" viewBox="0 0 14 12"><path d="M0,6 L5,1 H13 V11 H5 Z" fill="#d4d4d4"/><path d="M9,9 V3 M6.5,5.5 L9,3 L11.5,5.5" stroke="#4fb3c0" stroke-width="1.6" fill="none"/></svg>
<svg style="left:1504px;top:707px;overflow:visible" width="14" height="12" viewBox="0 0 14 12"><path d="M0,6 L5,1 H13 V11 H5 Z" fill="#d4d4d4"/><path d="M9,3 V9 M6.5,6.5 L9,9 L11.5,6.5" stroke="#4fb3c0" stroke-width="1.6" fill="none"/></svg>
<svg style="left:1530px;top:706px;overflow:visible" width="15" height="13" viewBox="0 0 15 13"><path d="M0,7 L5,2 H10 L13,5 V12 H5 Z" fill="#d4d4d4"/><path d="M11,0 V6 M8,3 H14" stroke="#4fb3c0" stroke-width="1.6"/></svg>
<svg style="left:1553px;top:706px;overflow:visible" width="15" height="13" viewBox="0 0 15 13"><path d="M0,7 L5,2 H10 L13,5 V12 H5 Z" fill="#d4d4d4"/><circle cx="11.5" cy="3.5" r="3" fill="#4fb3c0"/></svg>
<svg style="left:1576px;top:99px;overflow:visible" width="12" height="8" viewBox="0 0 12 8"><path d="M0,7 H11 L5.5,0 Z" fill="#bbb"/></svg>
<svg style="left:1577px;top:110px;overflow:visible" width="10" height="10" viewBox="0 0 10 10"><circle cx="5" cy="5" r="4.6" fill="#555"/></svg>
<svg style="left:1576px;top:123px;overflow:visible" width="12" height="8" viewBox="0 0 12 8"><path d="M0,0 H11 L5.5,7 Z" fill="#bbb"/></svg>
<svg style="left:1410px;top:884px;overflow:visible" width="16" height="15" viewBox="0 0 16 15"><rect x="0" y="1" width="2" height="13" fill="#d0d0d0"/><path d="M2.5,7.5 L9,1.5 V13.5 Z M9,7.5 L15.5,1.5 V13.5 Z" fill="#d0d0d0"/></svg>
<svg style="left:1434px;top:884px;overflow:visible" width="13" height="15" viewBox="0 0 13 15"><rect x="0" y="1" width="2" height="13" fill="#d0d0d0"/><path d="M3,7.5 L12,1.5 V13.5 Z" fill="#d0d0d0"/></svg>
<svg style="left:1456px;top:883px;overflow:visible" width="14" height="17" viewBox="0 0 14 17"><rect x="0.5" y="0" width="2.4" height="17" fill="#e0883a"/><path d="M4,8.5 L13,2.5 V14.5 Z" fill="#d0d0d0"/></svg>
<svg style="left:1478px;top:884px;overflow:visible" width="13" height="15" viewBox="0 0 13 15"><path d="M0,7.5 L12,0.5 V14.5 Z" fill="#d0d0d0"/></svg>
<svg style="left:1500px;top:884px;overflow:visible" width="13" height="15" viewBox="0 0 13 15"><path d="M13,7.5 L1,0.5 V14.5 Z" fill="#d0d0d0"/></svg>
<svg style="left:1521px;top:883px;overflow:visible" width="14" height="17" viewBox="0 0 14 17"><rect x="11" y="0" width="2.4" height="17" fill="#e0883a"/><path d="M10,8.5 L1,2.5 V14.5 Z" fill="#d0d0d0"/></svg>
<svg style="left:1545px;top:884px;overflow:visible" width="13" height="15" viewBox="0 0 13 15"><rect x="11" y="1" width="2" height="13" fill="#d0d0d0"/><path d="M10,7.5 L1,1.5 V13.5 Z" fill="#d0d0d0"/></svg>
<svg style="left:1566px;top:884px;overflow:visible" width="17" height="15" viewBox="0 0 17 15"><rect x="15" y="1" width="2" height="13" fill="#d0d0d0"/><path d="M14.5,7.5 L8,1.5 V13.5 Z M8,7.5 L1.5,1.5 V13.5 Z" fill="#d0d0d0"/></svg>
<svg style="left:1492px;top:919px;overflow:visible" width="22" height="14" viewBox="0 0 22 14"><path d="M4,4 H15 A4,4 0 0 1 15,12 H8 M17,12 H6 A4,4 0 0 1 6,4" fill="none" stroke="#d0d0d0" stroke-width="2"/><path d="M13,1 L17,4 L13,7 Z M9,9 L5,12 L9,15 Z" fill="#d0d0d0"/></svg>
<svg style="left:1535px;top:915px;overflow:visible" width="23" height="23" viewBox="0 0 23 23"><rect width="23" height="23" fill="#d8343c"/><circle cx="11.5" cy="11.5" r="6.5" fill="none" stroke="#f0c0c0" stroke-width="1.4" stroke-dasharray="9,2"/><path d="M11.5,6 V17 M7,11.5 H16" stroke="#f2d2d2" stroke-width="1.8"/></svg>
<svg style="left:1565px;top:915px;overflow:visible" width="22" height="22" viewBox="0 0 22 22"><circle cx="6" cy="6" r="3.6" fill="none" stroke="#d0d0d0" stroke-width="1.8" stroke-dasharray="1.5,1"/><circle cx="15" cy="7" r="2" fill="#e0883a"/><path d="M9,21 L12,15 L14,10 L19,13 L21,11 M12,15 L16,18 L15,22 M14,10 L10,11 L8,14" fill="none" stroke="#e0883a" stroke-width="1.8"/></svg>
<svg style="left:1117px;top:922px;overflow:visible" width="10" height="7" viewBox="0 0 10 7"><path d="M0.5,0.5 H9.5 L5,6 Z" fill="none" stroke="#bbb" stroke-width="1"/></svg>
<svg style="left:1243px;top:922px;overflow:visible" width="10" height="7" viewBox="0 0 10 7"><path d="M0.5,0.5 H9.5 L5,6 Z" fill="none" stroke="#bbb" stroke-width="1"/></svg>
<svg style="left:1466px;top:924px;overflow:visible" width="11" height="7" viewBox="0 0 11 7"><path d="M0,0 H11 L5.5,6 Z" fill="#d0d0d0"/></svg>
<svg style="left:1101px;top:916px;overflow:visible" width="6" height="21" viewBox="0 0 6 21"><rect x="2.3" y="0" width="1.4" height="21" fill="#6a6a6a"/><rect x="1.3" y="5.5" width="3.4" height="10" rx="1.7" fill="#777"/></svg>
<svg style="left:1368px;top:916px;overflow:visible" width="6" height="21" viewBox="0 0 6 21"><rect x="2.3" y="0" width="1.4" height="21" fill="#6a6a6a"/><rect x="1.3" y="5.5" width="3.4" height="10" rx="1.7" fill="#777"/></svg>
<svg style="left:1519px;top:916px;overflow:visible" width="6" height="21" viewBox="0 0 6 21"><rect x="2.3" y="0" width="1.4" height="21" fill="#6a6a6a"/><rect x="1.3" y="5.5" width="3.4" height="10" rx="1.7" fill="#777"/></svg>
<svg style="left:1568px;top:951px;overflow:visible" width="19" height="19" viewBox="0 0 19 19"><rect x="0.5" y="0.5" width="18" height="18" fill="#cfcfcf"/><rect x="0.5" y="3" width="18" height="1" fill="#444"/><text x="3" y="15" font-size="10" font-family="Liberation Mono" font-weight="700" fill="#333">{;}</text></svg>
<svg style="left:1580px;top:985px;overflow:visible" width="14" height="14" viewBox="0 0 14 14"><path d="M13,2 L2,13 M13,6 L6,13 M13,10 L10,13" stroke="#666" stroke-width="1"/></svg>
</div></body></html>
